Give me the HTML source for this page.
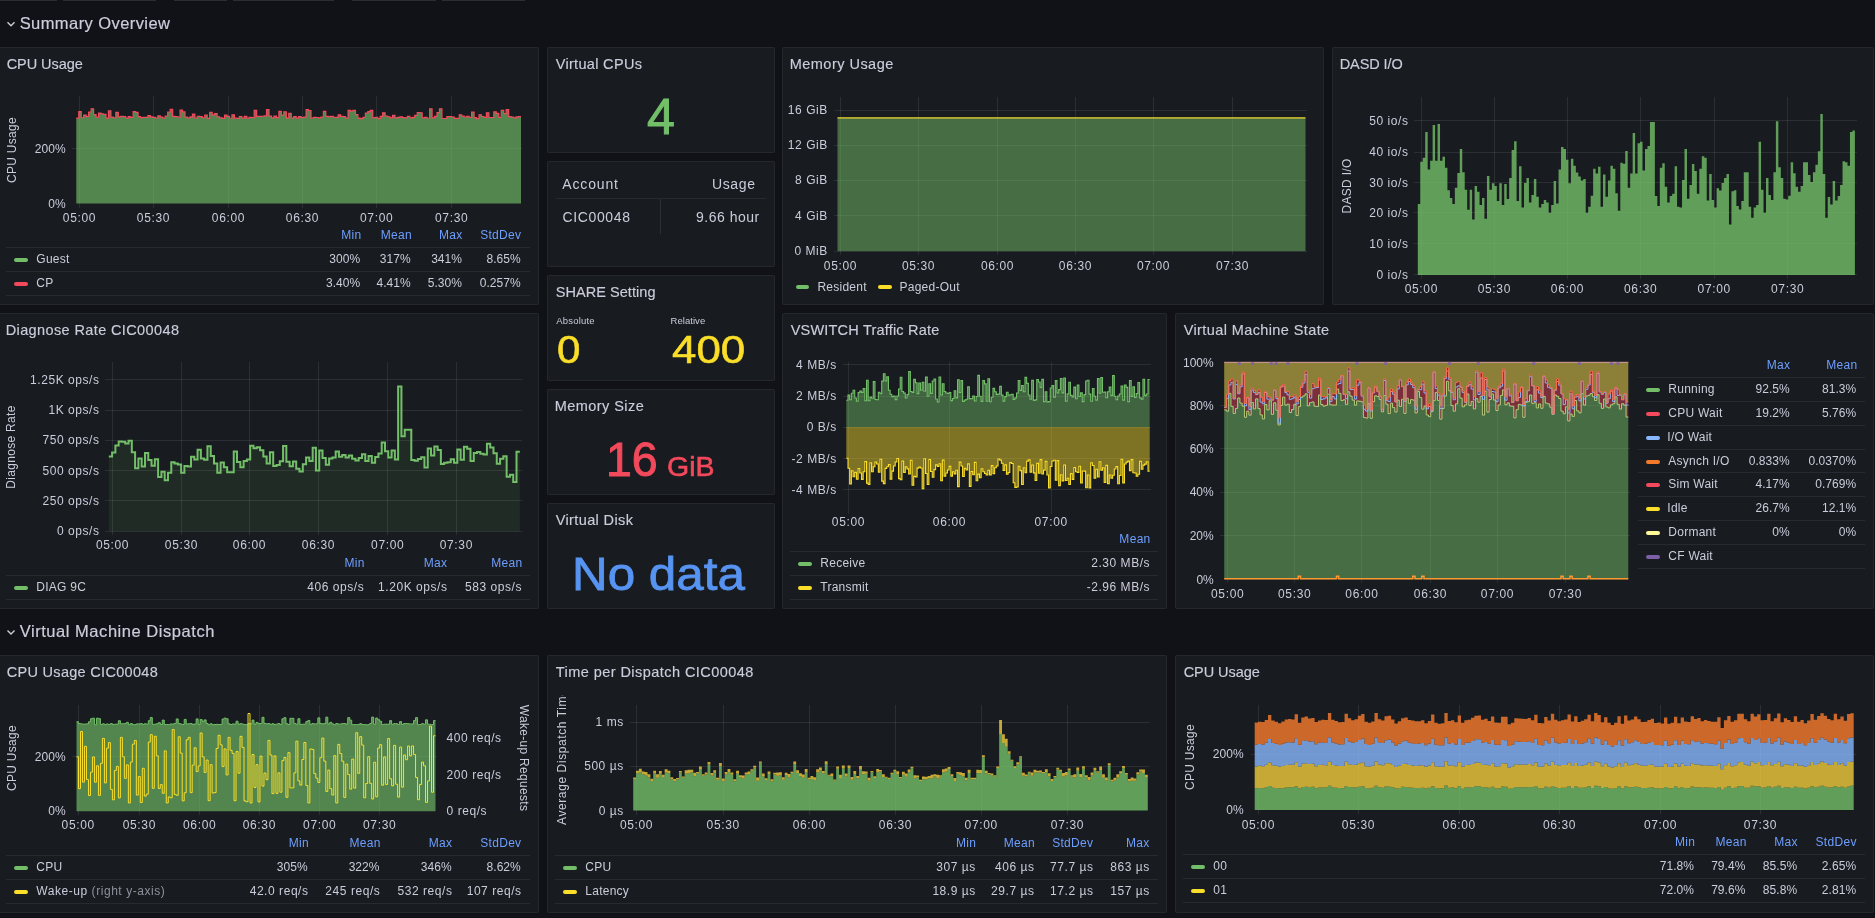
<!DOCTYPE html><html><head><meta charset="utf-8"><style>
*{margin:0;padding:0;box-sizing:border-box}
html,body{width:1875px;height:918px;overflow:hidden;background:#111217;font-family:"Liberation Sans",sans-serif}
.p{position:absolute;background:#181b1f;border:1px solid rgba(204,204,220,0.07);border-radius:2px}
#tx{position:absolute;left:0;top:0;width:1875px;height:918px;will-change:transform}
.t{position:absolute;white-space:nowrap}
.mk{position:absolute;height:4px;border-radius:2px}
.hl{position:absolute;height:1px}
svg{position:absolute;left:0;top:0}
</style></head><body><div class="p" style="left:-2px;top:47px;width:541px;height:258px"></div><div class="p" style="left:782px;top:47px;width:542px;height:258px"></div><div class="p" style="left:1332px;top:47px;width:542px;height:258px"></div><div class="p" style="left:547px;top:47px;width:228px;height:106px"></div><div class="p" style="left:547px;top:161px;width:228px;height:106px"></div><div class="p" style="left:547px;top:275px;width:228px;height:106px"></div><div class="p" style="left:547px;top:389px;width:228px;height:106px"></div><div class="p" style="left:547px;top:503px;width:228px;height:106px"></div><div class="p" style="left:-2px;top:313px;width:541px;height:296px"></div><div class="p" style="left:782px;top:313px;width:385px;height:296px"></div><div class="p" style="left:1175px;top:313px;width:699px;height:296px"></div><div class="p" style="left:-2px;top:655px;width:541px;height:258px"></div><div class="p" style="left:547px;top:655px;width:620px;height:258px"></div><div class="p" style="left:1175px;top:655px;width:699px;height:258px"></div><svg width="1875" height="918" viewBox="0 0 1875 918"><path d="M7.5,22.3 L11,25.8 L14.5,22.3" fill="none" stroke="#ccccdc" stroke-width="1.4"/><path d="M7.5,630.5 L11,634 L14.5,630.5" fill="none" stroke="#ccccdc" stroke-width="1.4"/><rect x="79" y="96" width="1" height="112" fill="rgba(240,250,255,0.09)"/><rect x="153" y="96" width="1" height="112" fill="rgba(240,250,255,0.09)"/><rect x="228" y="96" width="1" height="112" fill="rgba(240,250,255,0.09)"/><rect x="302" y="96" width="1" height="112" fill="rgba(240,250,255,0.09)"/><rect x="376" y="96" width="1" height="112" fill="rgba(240,250,255,0.09)"/><rect x="451" y="96" width="1" height="112" fill="rgba(240,250,255,0.09)"/><rect x="72" y="148" width="450" height="1" fill="rgba(240,250,255,0.09)"/><path d="M76.30,118.04 L78.77,118.04 L78.77,111.54 L81.24,111.54 L81.24,117.73 L83.71,117.73 L83.71,115.03 L86.18,115.03 L86.18,116.36 L88.65,116.36 L88.65,111.98 L91.12,111.98 L91.12,108.80 L93.59,108.80 L93.59,114.65 L96.06,114.65 L96.06,117.21 L98.53,117.21 L98.53,113.15 L101.01,113.15 L101.01,113.94 L103.48,113.94 L103.48,114.37 L105.95,114.37 L105.95,118.11 L108.42,118.11 L108.42,110.74 L110.89,110.74 L110.89,117.12 L113.36,117.12 L113.36,117.90 L115.83,117.90 L115.83,112.37 L118.30,112.37 L118.30,116.80 L120.77,116.80 L120.77,116.32 L123.24,116.32 L123.24,116.67 L125.71,116.67 L125.71,118.11 L128.18,118.11 L128.18,116.67 L130.65,116.67 L130.65,117.38 L133.12,117.38 L133.12,111.68 L135.59,111.68 L135.59,112.35 L138.06,112.35 L138.06,116.66 L140.53,116.66 L140.53,117.67 L143.00,117.67 L143.00,117.32 L145.48,117.32 L145.48,117.46 L147.95,117.46 L147.95,115.70 L150.42,115.70 L150.42,116.96 L152.89,116.96 L152.89,117.33 L155.36,117.33 L155.36,118.19 L157.83,118.19 L157.83,115.91 L160.30,115.91 L160.30,117.18 L162.77,117.18 L162.77,118.21 L165.24,118.21 L165.24,116.04 L167.71,116.04 L167.71,112.02 L170.18,112.02 L170.18,109.25 L172.65,109.25 L172.65,116.36 L175.12,116.36 L175.12,116.64 L177.59,116.64 L177.59,117.17 L180.06,117.17 L180.06,110.20 L182.53,110.20 L182.53,111.94 L185.00,111.94 L185.00,117.17 L187.47,117.17 L187.47,117.93 L189.95,117.93 L189.95,116.93 L192.42,116.93 L192.42,114.18 L194.89,114.18 L194.89,118.20 L197.36,118.20 L197.36,116.46 L199.83,116.46 L199.83,116.64 L202.30,116.64 L202.30,117.76 L204.77,117.76 L204.77,115.17 L207.24,115.17 L207.24,118.41 L209.71,118.41 L209.71,112.27 L212.18,112.27 L212.18,114.84 L214.65,114.84 L214.65,113.63 L217.12,113.63 L217.12,116.87 L219.59,116.87 L219.59,117.78 L222.06,117.78 L222.06,118.34 L224.53,118.34 L224.53,115.07 L227.00,115.07 L227.00,116.39 L229.47,116.39 L229.47,118.24 L231.94,118.24 L231.94,114.90 L234.42,114.90 L234.42,118.15 L236.89,118.15 L236.89,118.39 L239.36,118.39 L239.36,116.72 L241.83,116.72 L241.83,118.19 L244.30,118.19 L244.30,116.42 L246.77,116.42 L246.77,118.16 L249.24,118.16 L249.24,117.39 L251.71,117.39 L251.71,117.71 L254.18,117.71 L254.18,110.39 L256.65,110.39 L256.65,116.43 L259.12,116.43 L259.12,116.40 L261.59,116.40 L261.59,116.23 L264.06,116.23 L264.06,115.97 L266.53,115.97 L266.53,109.49 L269.00,109.49 L269.00,116.22 L271.47,116.22 L271.47,117.96 L273.94,117.96 L273.94,116.13 L276.41,116.13 L276.41,117.57 L278.89,117.57 L278.89,111.45 L281.36,111.45 L281.36,115.07 L283.83,115.07 L283.83,111.77 L286.30,111.77 L286.30,117.97 L288.77,117.97 L288.77,113.26 L291.24,113.26 L291.24,118.03 L293.71,118.03 L293.71,116.59 L296.18,116.59 L296.18,118.21 L298.65,118.21 L298.65,116.68 L301.12,116.68 L301.12,117.56 L303.59,117.56 L303.59,117.11 L306.06,117.11 L306.06,109.68 L308.53,109.68 L308.53,110.52 L311.00,110.52 L311.00,118.22 L313.47,118.22 L313.47,117.28 L315.94,117.28 L315.94,117.50 L318.41,117.50 L318.41,117.93 L320.88,117.93 L320.88,117.00 L323.36,117.00 L323.36,111.34 L325.83,111.34 L325.83,116.29 L328.30,116.29 L328.30,116.63 L330.77,116.63 L330.77,116.47 L333.24,116.47 L333.24,117.31 L335.71,117.31 L335.71,117.44 L338.18,117.44 L338.18,114.88 L340.65,114.88 L340.65,116.28 L343.12,116.28 L343.12,116.57 L345.59,116.57 L345.59,118.06 L348.06,118.06 L348.06,110.29 L350.53,110.29 L350.53,111.04 L353.00,111.04 L353.00,110.47 L355.47,110.47 L355.47,114.70 L357.94,114.70 L357.94,118.08 L360.41,118.08 L360.41,118.60 L362.88,118.60 L362.88,117.42 L365.36,117.42 L365.36,113.20 L367.83,113.20 L367.83,111.69 L370.30,111.69 L370.30,110.42 L372.77,110.42 L372.77,117.82 L375.24,117.82 L375.24,117.37 L377.71,117.37 L377.71,118.66 L380.18,118.66 L380.18,116.29 L382.65,116.29 L382.65,112.83 L385.12,112.83 L385.12,116.21 L387.59,116.21 L387.59,116.77 L390.06,116.77 L390.06,117.85 L392.53,117.85 L392.53,115.44 L395.00,115.44 L395.00,117.78 L397.47,117.78 L397.47,117.31 L399.94,117.31 L399.94,116.91 L402.41,116.91 L402.41,117.66 L404.88,117.66 L404.88,117.95 L407.35,117.95 L407.35,116.43 L409.82,116.43 L409.82,117.96 L412.30,117.96 L412.30,117.47 L414.77,117.47 L414.77,115.37 L417.24,115.37 L417.24,112.50 L419.71,112.50 L419.71,112.76 L422.18,112.76 L422.18,117.85 L424.65,117.85 L424.65,117.45 L427.12,117.45 L427.12,118.23 L429.59,118.23 L429.59,108.87 L432.06,108.87 L432.06,117.95 L434.53,117.95 L434.53,116.29 L437.00,116.29 L437.00,112.69 L439.47,112.69 L439.47,108.78 L441.94,108.78 L441.94,118.52 L444.41,118.52 L444.41,118.51 L446.88,118.51 L446.88,116.56 L449.35,116.56 L449.35,116.59 L451.82,116.59 L451.82,117.01 L454.29,117.01 L454.29,118.35 L456.77,118.35 L456.77,118.44 L459.24,118.44 L459.24,114.80 L461.71,114.80 L461.71,116.22 L464.18,116.22 L464.18,117.00 L466.65,117.00 L466.65,116.27 L469.12,116.27 L469.12,117.37 L471.59,117.37 L471.59,112.17 L474.06,112.17 L474.06,117.61 L476.53,117.61 L476.53,118.59 L479.00,118.59 L479.00,114.85 L481.47,114.85 L481.47,116.49 L483.94,116.49 L483.94,117.46 L486.41,117.46 L486.41,112.76 L488.88,112.76 L488.88,117.50 L491.35,117.50 L491.35,117.57 L493.82,117.57 L493.82,111.84 L496.29,111.84 L496.29,113.29 L498.76,113.29 L498.76,117.47 L501.24,117.47 L501.24,110.43 L503.71,110.43 L503.71,113.65 L506.18,113.65 L506.18,109.57 L508.65,109.57 L508.65,116.56 L511.12,116.56 L511.12,117.10 L513.59,117.10 L513.59,117.86 L516.06,117.86 L516.06,116.93 L518.53,116.93 L518.53,116.64 L521.00,116.64 L521.00,203.60 L76.30,203.60 Z" fill="#73BF69" fill-opacity="0.65"/><path d="M76.30,118.04 L78.77,118.04 L78.77,111.54 L81.24,111.54 L81.24,117.73 L83.71,117.73 L83.71,115.03 L86.18,115.03 L86.18,116.36 L88.65,116.36 L88.65,111.98 L91.12,111.98 L91.12,108.80 L93.59,108.80 L93.59,114.65 L96.06,114.65 L96.06,117.21 L98.53,117.21 L98.53,113.15 L101.01,113.15 L101.01,113.94 L103.48,113.94 L103.48,114.37 L105.95,114.37 L105.95,118.11 L108.42,118.11 L108.42,110.74 L110.89,110.74 L110.89,117.12 L113.36,117.12 L113.36,117.90 L115.83,117.90 L115.83,112.37 L118.30,112.37 L118.30,116.80 L120.77,116.80 L120.77,116.32 L123.24,116.32 L123.24,116.67 L125.71,116.67 L125.71,118.11 L128.18,118.11 L128.18,116.67 L130.65,116.67 L130.65,117.38 L133.12,117.38 L133.12,111.68 L135.59,111.68 L135.59,112.35 L138.06,112.35 L138.06,116.66 L140.53,116.66 L140.53,117.67 L143.00,117.67 L143.00,117.32 L145.48,117.32 L145.48,117.46 L147.95,117.46 L147.95,115.70 L150.42,115.70 L150.42,116.96 L152.89,116.96 L152.89,117.33 L155.36,117.33 L155.36,118.19 L157.83,118.19 L157.83,115.91 L160.30,115.91 L160.30,117.18 L162.77,117.18 L162.77,118.21 L165.24,118.21 L165.24,116.04 L167.71,116.04 L167.71,112.02 L170.18,112.02 L170.18,109.25 L172.65,109.25 L172.65,116.36 L175.12,116.36 L175.12,116.64 L177.59,116.64 L177.59,117.17 L180.06,117.17 L180.06,110.20 L182.53,110.20 L182.53,111.94 L185.00,111.94 L185.00,117.17 L187.47,117.17 L187.47,117.93 L189.95,117.93 L189.95,116.93 L192.42,116.93 L192.42,114.18 L194.89,114.18 L194.89,118.20 L197.36,118.20 L197.36,116.46 L199.83,116.46 L199.83,116.64 L202.30,116.64 L202.30,117.76 L204.77,117.76 L204.77,115.17 L207.24,115.17 L207.24,118.41 L209.71,118.41 L209.71,112.27 L212.18,112.27 L212.18,114.84 L214.65,114.84 L214.65,113.63 L217.12,113.63 L217.12,116.87 L219.59,116.87 L219.59,117.78 L222.06,117.78 L222.06,118.34 L224.53,118.34 L224.53,115.07 L227.00,115.07 L227.00,116.39 L229.47,116.39 L229.47,118.24 L231.94,118.24 L231.94,114.90 L234.42,114.90 L234.42,118.15 L236.89,118.15 L236.89,118.39 L239.36,118.39 L239.36,116.72 L241.83,116.72 L241.83,118.19 L244.30,118.19 L244.30,116.42 L246.77,116.42 L246.77,118.16 L249.24,118.16 L249.24,117.39 L251.71,117.39 L251.71,117.71 L254.18,117.71 L254.18,110.39 L256.65,110.39 L256.65,116.43 L259.12,116.43 L259.12,116.40 L261.59,116.40 L261.59,116.23 L264.06,116.23 L264.06,115.97 L266.53,115.97 L266.53,109.49 L269.00,109.49 L269.00,116.22 L271.47,116.22 L271.47,117.96 L273.94,117.96 L273.94,116.13 L276.41,116.13 L276.41,117.57 L278.89,117.57 L278.89,111.45 L281.36,111.45 L281.36,115.07 L283.83,115.07 L283.83,111.77 L286.30,111.77 L286.30,117.97 L288.77,117.97 L288.77,113.26 L291.24,113.26 L291.24,118.03 L293.71,118.03 L293.71,116.59 L296.18,116.59 L296.18,118.21 L298.65,118.21 L298.65,116.68 L301.12,116.68 L301.12,117.56 L303.59,117.56 L303.59,117.11 L306.06,117.11 L306.06,109.68 L308.53,109.68 L308.53,110.52 L311.00,110.52 L311.00,118.22 L313.47,118.22 L313.47,117.28 L315.94,117.28 L315.94,117.50 L318.41,117.50 L318.41,117.93 L320.88,117.93 L320.88,117.00 L323.36,117.00 L323.36,111.34 L325.83,111.34 L325.83,116.29 L328.30,116.29 L328.30,116.63 L330.77,116.63 L330.77,116.47 L333.24,116.47 L333.24,117.31 L335.71,117.31 L335.71,117.44 L338.18,117.44 L338.18,114.88 L340.65,114.88 L340.65,116.28 L343.12,116.28 L343.12,116.57 L345.59,116.57 L345.59,118.06 L348.06,118.06 L348.06,110.29 L350.53,110.29 L350.53,111.04 L353.00,111.04 L353.00,110.47 L355.47,110.47 L355.47,114.70 L357.94,114.70 L357.94,118.08 L360.41,118.08 L360.41,118.60 L362.88,118.60 L362.88,117.42 L365.36,117.42 L365.36,113.20 L367.83,113.20 L367.83,111.69 L370.30,111.69 L370.30,110.42 L372.77,110.42 L372.77,117.82 L375.24,117.82 L375.24,117.37 L377.71,117.37 L377.71,118.66 L380.18,118.66 L380.18,116.29 L382.65,116.29 L382.65,112.83 L385.12,112.83 L385.12,116.21 L387.59,116.21 L387.59,116.77 L390.06,116.77 L390.06,117.85 L392.53,117.85 L392.53,115.44 L395.00,115.44 L395.00,117.78 L397.47,117.78 L397.47,117.31 L399.94,117.31 L399.94,116.91 L402.41,116.91 L402.41,117.66 L404.88,117.66 L404.88,117.95 L407.35,117.95 L407.35,116.43 L409.82,116.43 L409.82,117.96 L412.30,117.96 L412.30,117.47 L414.77,117.47 L414.77,115.37 L417.24,115.37 L417.24,112.50 L419.71,112.50 L419.71,112.76 L422.18,112.76 L422.18,117.85 L424.65,117.85 L424.65,117.45 L427.12,117.45 L427.12,118.23 L429.59,118.23 L429.59,108.87 L432.06,108.87 L432.06,117.95 L434.53,117.95 L434.53,116.29 L437.00,116.29 L437.00,112.69 L439.47,112.69 L439.47,108.78 L441.94,108.78 L441.94,118.52 L444.41,118.52 L444.41,118.51 L446.88,118.51 L446.88,116.56 L449.35,116.56 L449.35,116.59 L451.82,116.59 L451.82,117.01 L454.29,117.01 L454.29,118.35 L456.77,118.35 L456.77,118.44 L459.24,118.44 L459.24,114.80 L461.71,114.80 L461.71,116.22 L464.18,116.22 L464.18,117.00 L466.65,117.00 L466.65,116.27 L469.12,116.27 L469.12,117.37 L471.59,117.37 L471.59,112.17 L474.06,112.17 L474.06,117.61 L476.53,117.61 L476.53,118.59 L479.00,118.59 L479.00,114.85 L481.47,114.85 L481.47,116.49 L483.94,116.49 L483.94,117.46 L486.41,117.46 L486.41,112.76 L488.88,112.76 L488.88,117.50 L491.35,117.50 L491.35,117.57 L493.82,117.57 L493.82,111.84 L496.29,111.84 L496.29,113.29 L498.76,113.29 L498.76,117.47 L501.24,117.47 L501.24,110.43 L503.71,110.43 L503.71,113.65 L506.18,113.65 L506.18,109.57 L508.65,109.57 L508.65,116.56 L511.12,116.56 L511.12,117.10 L513.59,117.10 L513.59,117.86 L516.06,117.86 L516.06,116.93 L518.53,116.93 L518.53,116.64 L521.00,116.64" fill="none" stroke="#F2495C" stroke-width="1.2" stroke-linejoin="miter"/><rect x="840" y="97" width="1" height="158" fill="rgba(240,250,255,0.09)"/><rect x="918" y="97" width="1" height="158" fill="rgba(240,250,255,0.09)"/><rect x="997" y="97" width="1" height="158" fill="rgba(240,250,255,0.09)"/><rect x="1075" y="97" width="1" height="158" fill="rgba(240,250,255,0.09)"/><rect x="1153" y="97" width="1" height="158" fill="rgba(240,250,255,0.09)"/><rect x="1232" y="97" width="1" height="158" fill="rgba(240,250,255,0.09)"/><rect x="834" y="110" width="473" height="1" fill="rgba(240,250,255,0.09)"/><rect x="834" y="145" width="473" height="1" fill="rgba(240,250,255,0.09)"/><rect x="834" y="180" width="473" height="1" fill="rgba(240,250,255,0.09)"/><rect x="834" y="215" width="473" height="1" fill="rgba(240,250,255,0.09)"/><rect x="834" y="251" width="473" height="1" fill="rgba(240,250,255,0.09)"/><rect x="837.5" y="117.8" width="468.0" height="133.3" fill="#73BF69" fill-opacity="0.5"/><rect x="837.5" y="117.3" width="468.0" height="1.2" fill="#FADE2A"/><rect x="1421" y="97" width="1" height="182" fill="rgba(240,250,255,0.09)"/><rect x="1494" y="97" width="1" height="182" fill="rgba(240,250,255,0.09)"/><rect x="1567" y="97" width="1" height="182" fill="rgba(240,250,255,0.09)"/><rect x="1640" y="97" width="1" height="182" fill="rgba(240,250,255,0.09)"/><rect x="1714" y="97" width="1" height="182" fill="rgba(240,250,255,0.09)"/><rect x="1787" y="97" width="1" height="182" fill="rgba(240,250,255,0.09)"/><rect x="1414" y="120" width="443" height="1" fill="rgba(240,250,255,0.09)"/><rect x="1414" y="152" width="443" height="1" fill="rgba(240,250,255,0.09)"/><rect x="1414" y="182" width="443" height="1" fill="rgba(240,250,255,0.09)"/><rect x="1414" y="212" width="443" height="1" fill="rgba(240,250,255,0.09)"/><rect x="1414" y="243" width="443" height="1" fill="rgba(240,250,255,0.09)"/><rect x="1414" y="274" width="443" height="1" fill="rgba(240,250,255,0.09)"/><path d="M1417.80,203.92 L1420.27,203.92 L1420.27,161.76 L1422.74,161.76 L1422.74,157.84 L1425.21,157.84 L1425.21,131.96 L1427.68,131.96 L1427.68,169.61 L1430.15,169.61 L1430.15,160.78 L1432.62,160.78 L1432.62,124.90 L1435.09,124.90 L1435.09,160.78 L1437.56,160.78 L1437.56,123.92 L1440.03,123.92 L1440.03,160.78 L1442.49,160.78 L1442.49,156.86 L1444.96,156.86 L1444.96,167.65 L1447.43,167.65 L1447.43,190.20 L1449.90,190.20 L1449.90,198.04 L1452.37,198.04 L1452.37,203.92 L1454.84,203.92 L1454.84,187.84 L1457.31,187.84 L1457.31,172.94 L1459.78,172.94 L1459.78,149.02 L1462.25,149.02 L1462.25,172.16 L1464.72,172.16 L1464.72,189.80 L1467.19,189.80 L1467.19,209.80 L1469.66,209.80 L1469.66,189.80 L1472.13,189.80 L1472.13,219.61 L1474.60,219.61 L1474.60,185.88 L1477.07,185.88 L1477.07,191.76 L1479.54,191.76 L1479.54,204.90 L1482.01,204.90 L1482.01,198.04 L1484.48,198.04 L1484.48,218.63 L1486.95,218.63 L1486.95,176.08 L1489.42,176.08 L1489.42,189.80 L1491.88,189.80 L1491.88,183.33 L1494.35,183.33 L1494.35,185.88 L1496.82,185.88 L1496.82,200.98 L1499.29,200.98 L1499.29,183.33 L1501.76,183.33 L1501.76,204.90 L1504.23,204.90 L1504.23,183.92 L1506.70,183.92 L1506.70,199.02 L1509.17,199.02 L1509.17,178.04 L1511.64,178.04 L1511.64,150.00 L1514.11,150.00 L1514.11,141.18 L1516.58,141.18 L1516.58,200.98 L1519.05,200.98 L1519.05,166.27 L1521.52,166.27 L1521.52,207.45 L1523.99,207.45 L1523.99,182.94 L1526.46,182.94 L1526.46,178.04 L1528.93,178.04 L1528.93,202.55 L1531.40,202.55 L1531.40,195.10 L1533.87,195.10 L1533.87,179.02 L1536.34,179.02 L1536.34,196.67 L1538.81,196.67 L1538.81,207.45 L1541.27,207.45 L1541.27,203.92 L1543.74,203.92 L1543.74,200.00 L1546.21,200.00 L1546.21,202.55 L1548.68,202.55 L1548.68,212.75 L1551.15,212.75 L1551.15,204.90 L1553.62,204.90 L1553.62,180.98 L1556.09,180.98 L1556.09,203.53 L1558.56,203.53 L1558.56,169.61 L1561.03,169.61 L1561.03,147.06 L1563.50,147.06 L1563.50,149.02 L1565.97,149.02 L1565.97,159.80 L1568.44,159.80 L1568.44,183.33 L1570.91,183.33 L1570.91,158.82 L1573.38,158.82 L1573.38,165.69 L1575.85,165.69 L1575.85,172.55 L1578.32,172.55 L1578.32,176.47 L1580.79,176.47 L1580.79,180.39 L1583.26,180.39 L1583.26,179.02 L1585.73,179.02 L1585.73,212.75 L1588.19,212.75 L1588.19,206.86 L1590.66,206.86 L1590.66,195.69 L1593.13,195.69 L1593.13,168.63 L1595.60,168.63 L1595.60,173.53 L1598.07,173.53 L1598.07,166.67 L1600.54,166.67 L1600.54,206.86 L1603.01,206.86 L1603.01,174.51 L1605.48,174.51 L1605.48,196.67 L1607.95,196.67 L1607.95,180.39 L1610.42,180.39 L1610.42,165.69 L1612.89,165.69 L1612.89,168.63 L1615.36,168.63 L1615.36,193.14 L1617.83,193.14 L1617.83,210.78 L1620.30,210.78 L1620.30,162.75 L1622.77,162.75 L1622.77,163.73 L1625.24,163.73 L1625.24,150.98 L1627.71,150.98 L1627.71,187.84 L1630.18,187.84 L1630.18,173.53 L1632.65,173.53 L1632.65,132.94 L1635.12,132.94 L1635.12,173.53 L1637.58,173.53 L1637.58,143.14 L1640.05,143.14 L1640.05,141.76 L1642.52,141.76 L1642.52,170.59 L1644.99,170.59 L1644.99,149.02 L1647.46,149.02 L1647.46,146.08 L1649.93,146.08 L1649.93,121.96 L1652.40,121.96 L1652.40,121.96 L1654.87,121.96 L1654.87,196.08 L1657.34,196.08 L1657.34,205.88 L1659.81,205.88 L1659.81,167.65 L1662.28,167.65 L1662.28,163.14 L1664.75,163.14 L1664.75,186.86 L1667.22,186.86 L1667.22,202.55 L1669.69,202.55 L1669.69,196.08 L1672.16,196.08 L1672.16,193.73 L1674.63,193.73 L1674.63,166.27 L1677.10,166.27 L1677.10,206.86 L1679.57,206.86 L1679.57,207.45 L1682.04,207.45 L1682.04,180.00 L1684.51,180.00 L1684.51,149.02 L1686.97,149.02 L1686.97,198.63 L1689.44,198.63 L1689.44,184.90 L1691.91,184.90 L1691.91,164.12 L1694.38,164.12 L1694.38,170.98 L1696.85,170.98 L1696.85,193.73 L1699.32,193.73 L1699.32,168.63 L1701.79,168.63 L1701.79,156.27 L1704.26,156.27 L1704.26,157.84 L1706.73,157.84 L1706.73,200.59 L1709.20,200.59 L1709.20,174.12 L1711.67,174.12 L1711.67,200.00 L1714.14,200.00 L1714.14,207.45 L1716.61,207.45 L1716.61,188.24 L1719.08,188.24 L1719.08,190.59 L1721.55,190.59 L1721.55,182.94 L1724.02,182.94 L1724.02,178.04 L1726.49,178.04 L1726.49,174.12 L1728.96,174.12 L1728.96,224.51 L1731.43,224.51 L1731.43,191.18 L1733.89,191.18 L1733.89,190.20 L1736.36,190.20 L1736.36,205.88 L1738.83,205.88 L1738.83,209.41 L1741.30,209.41 L1741.30,200.98 L1743.77,200.98 L1743.77,172.16 L1746.24,172.16 L1746.24,172.16 L1748.71,172.16 L1748.71,206.86 L1751.18,206.86 L1751.18,217.65 L1753.65,217.65 L1753.65,207.45 L1756.12,207.45 L1756.12,204.90 L1758.59,204.90 L1758.59,141.76 L1761.06,141.76 L1761.06,189.80 L1763.53,189.80 L1763.53,212.75 L1766.00,212.75 L1766.00,178.04 L1768.47,178.04 L1768.47,195.10 L1770.94,195.10 L1770.94,200.00 L1773.41,200.00 L1773.41,172.16 L1775.88,172.16 L1775.88,121.18 L1778.35,121.18 L1778.35,167.25 L1780.82,167.25 L1780.82,178.04 L1783.28,178.04 L1783.28,198.63 L1785.75,198.63 L1785.75,199.61 L1788.22,199.61 L1788.22,195.69 L1790.69,195.69 L1790.69,162.35 L1793.16,162.35 L1793.16,173.14 L1795.63,173.14 L1795.63,186.86 L1798.10,186.86 L1798.10,191.76 L1800.57,191.76 L1800.57,185.88 L1803.04,185.88 L1803.04,162.35 L1805.51,162.35 L1805.51,162.35 L1807.98,162.35 L1807.98,175.10 L1810.45,175.10 L1810.45,181.96 L1812.92,181.96 L1812.92,172.16 L1815.39,172.16 L1815.39,164.71 L1817.86,164.71 L1817.86,151.37 L1820.33,151.37 L1820.33,114.12 L1822.80,114.12 L1822.80,174.12 L1825.27,174.12 L1825.27,217.65 L1827.74,217.65 L1827.74,197.06 L1830.21,197.06 L1830.21,204.51 L1832.67,204.51 L1832.67,180.98 L1835.14,180.98 L1835.14,200.59 L1837.61,200.59 L1837.61,196.08 L1840.08,196.08 L1840.08,184.90 L1842.55,184.90 L1842.55,161.37 L1845.02,161.37 L1845.02,162.35 L1847.49,162.35 L1847.49,165.69 L1849.96,165.69 L1849.96,131.96 L1852.43,131.96 L1852.43,130.39 L1854.90,130.39 L1854.90,274.90 L1417.80,274.90 Z" fill="#73BF69" fill-opacity="0.8"/><rect x="112" y="362" width="1" height="173" fill="rgba(240,250,255,0.09)"/><rect x="181" y="362" width="1" height="173" fill="rgba(240,250,255,0.09)"/><rect x="249" y="362" width="1" height="173" fill="rgba(240,250,255,0.09)"/><rect x="318" y="362" width="1" height="173" fill="rgba(240,250,255,0.09)"/><rect x="387" y="362" width="1" height="173" fill="rgba(240,250,255,0.09)"/><rect x="456" y="362" width="1" height="173" fill="rgba(240,250,255,0.09)"/><rect x="105" y="379" width="417" height="1" fill="rgba(240,250,255,0.09)"/><rect x="105" y="410" width="417" height="1" fill="rgba(240,250,255,0.09)"/><rect x="105" y="440" width="417" height="1" fill="rgba(240,250,255,0.09)"/><rect x="105" y="470" width="417" height="1" fill="rgba(240,250,255,0.09)"/><rect x="105" y="500" width="417" height="1" fill="rgba(240,250,255,0.09)"/><rect x="105" y="531" width="417" height="1" fill="rgba(240,250,255,0.09)"/><path d="M108.80,456.44 L112.09,456.44 L112.09,452.59 L115.38,452.59 L115.38,445.48 L118.66,445.48 L118.66,441.55 L121.95,441.55 L121.95,441.64 L125.24,441.64 L125.24,443.62 L128.53,443.62 L128.53,440.73 L131.82,440.73 L131.82,452.25 L135.10,452.25 L135.10,468.17 L138.39,468.17 L138.39,458.60 L141.68,458.60 L141.68,466.61 L144.97,466.61 L144.97,453.03 L148.26,453.03 L148.26,460.00 L151.54,460.00 L151.54,465.68 L154.83,465.68 L154.83,459.23 L158.12,459.23 L158.12,477.12 L161.41,477.12 L161.41,471.63 L164.70,471.63 L164.70,480.21 L167.98,480.21 L167.98,472.68 L171.27,472.68 L171.27,462.35 L174.56,462.35 L174.56,463.57 L177.85,463.57 L177.85,464.44 L181.14,464.44 L181.14,472.64 L184.42,472.64 L184.42,465.93 L187.71,465.93 L187.71,466.48 L191.00,466.48 L191.00,456.81 L194.29,456.81 L194.29,459.56 L197.58,459.56 L197.58,449.77 L200.86,449.77 L200.86,458.42 L204.15,458.42 L204.15,459.72 L207.44,459.72 L207.44,446.13 L210.73,446.13 L210.73,456.03 L214.02,456.03 L214.02,463.51 L217.30,463.51 L217.30,472.83 L220.59,472.83 L220.59,462.39 L223.88,462.39 L223.88,467.18 L227.17,467.18 L227.17,472.22 L230.46,472.22 L230.46,472.36 L233.74,472.36 L233.74,451.59 L237.03,451.59 L237.03,461.94 L240.32,461.94 L240.32,467.14 L243.61,467.14 L243.61,460.88 L246.90,460.88 L246.90,459.44 L250.18,459.44 L250.18,445.82 L253.47,445.82 L253.47,448.14 L256.76,448.14 L256.76,447.31 L260.05,447.31 L260.05,450.37 L263.34,450.37 L263.34,456.54 L266.62,456.54 L266.62,463.40 L269.91,463.40 L269.91,452.19 L273.20,452.19 L273.20,465.99 L276.49,465.99 L276.49,464.94 L279.78,464.94 L279.78,461.20 L283.06,461.20 L283.06,445.93 L286.35,445.93 L286.35,461.81 L289.64,461.81 L289.64,466.25 L292.93,466.25 L292.93,461.50 L296.22,461.50 L296.22,468.69 L299.50,468.69 L299.50,471.40 L302.79,471.40 L302.79,464.22 L306.08,464.22 L306.08,457.43 L309.37,457.43 L309.37,461.11 L312.66,461.11 L312.66,447.80 L315.94,447.80 L315.94,470.58 L319.23,470.58 L319.23,450.52 L322.52,450.52 L322.52,458.01 L325.81,458.01 L325.81,464.74 L329.10,464.74 L329.10,458.40 L332.38,458.40 L332.38,457.47 L335.67,457.47 L335.67,451.39 L338.96,451.39 L338.96,456.80 L342.25,456.80 L342.25,455.12 L345.54,455.12 L345.54,457.62 L348.82,457.62 L348.82,455.42 L352.11,455.42 L352.11,458.83 L355.40,458.83 L355.40,460.41 L358.69,460.41 L358.69,458.02 L361.98,458.02 L361.98,454.22 L365.26,454.22 L365.26,461.05 L368.55,461.05 L368.55,455.92 L371.84,455.92 L371.84,462.72 L375.13,462.72 L375.13,456.93 L378.42,456.93 L378.42,453.51 L381.70,453.51 L381.70,442.58 L384.99,442.58 L384.99,451.35 L388.28,451.35 L388.28,457.55 L391.57,457.55 L391.57,450.58 L394.86,450.58 L394.86,459.42 L398.14,459.42 L398.14,386.40 L401.43,386.40 L401.43,436.30 L404.72,436.30 L404.72,429.70 L408.01,429.70 L408.01,429.70 L411.30,429.70 L411.30,460.00 L414.58,460.00 L414.58,460.75 L417.87,460.75 L417.87,458.88 L421.16,458.88 L421.16,457.21 L424.45,457.21 L424.45,467.41 L427.74,467.41 L427.74,448.51 L431.02,448.51 L431.02,455.59 L434.31,455.59 L434.31,446.53 L437.60,446.53 L437.60,450.06 L440.89,450.06 L440.89,463.93 L444.18,463.93 L444.18,462.87 L447.46,462.87 L447.46,462.17 L450.75,462.17 L450.75,459.34 L454.04,459.34 L454.04,462.79 L457.33,462.79 L457.33,449.57 L460.62,449.57 L460.62,459.66 L463.90,459.66 L463.90,446.87 L467.19,446.87 L467.19,448.73 L470.48,448.73 L470.48,460.95 L473.77,460.95 L473.77,453.03 L477.06,453.03 L477.06,451.96 L480.34,451.96 L480.34,453.74 L483.63,453.74 L483.63,454.42 L486.92,454.42 L486.92,443.80 L490.21,443.80 L490.21,447.40 L493.50,447.40 L493.50,453.28 L496.78,453.28 L496.78,463.84 L500.07,463.84 L500.07,458.66 L503.36,458.66 L503.36,456.34 L506.65,456.34 L506.65,476.85 L509.94,476.85 L509.94,474.69 L513.22,474.69 L513.22,482.00 L516.51,482.00 L516.51,451.80 L519.80,451.80 L519.80,531.20 L108.80,531.20 Z" fill="#73BF69" fill-opacity="0.1"/><path d="M108.80,456.44 L112.09,456.44 L112.09,452.59 L115.38,452.59 L115.38,445.48 L118.66,445.48 L118.66,441.55 L121.95,441.55 L121.95,441.64 L125.24,441.64 L125.24,443.62 L128.53,443.62 L128.53,440.73 L131.82,440.73 L131.82,452.25 L135.10,452.25 L135.10,468.17 L138.39,468.17 L138.39,458.60 L141.68,458.60 L141.68,466.61 L144.97,466.61 L144.97,453.03 L148.26,453.03 L148.26,460.00 L151.54,460.00 L151.54,465.68 L154.83,465.68 L154.83,459.23 L158.12,459.23 L158.12,477.12 L161.41,477.12 L161.41,471.63 L164.70,471.63 L164.70,480.21 L167.98,480.21 L167.98,472.68 L171.27,472.68 L171.27,462.35 L174.56,462.35 L174.56,463.57 L177.85,463.57 L177.85,464.44 L181.14,464.44 L181.14,472.64 L184.42,472.64 L184.42,465.93 L187.71,465.93 L187.71,466.48 L191.00,466.48 L191.00,456.81 L194.29,456.81 L194.29,459.56 L197.58,459.56 L197.58,449.77 L200.86,449.77 L200.86,458.42 L204.15,458.42 L204.15,459.72 L207.44,459.72 L207.44,446.13 L210.73,446.13 L210.73,456.03 L214.02,456.03 L214.02,463.51 L217.30,463.51 L217.30,472.83 L220.59,472.83 L220.59,462.39 L223.88,462.39 L223.88,467.18 L227.17,467.18 L227.17,472.22 L230.46,472.22 L230.46,472.36 L233.74,472.36 L233.74,451.59 L237.03,451.59 L237.03,461.94 L240.32,461.94 L240.32,467.14 L243.61,467.14 L243.61,460.88 L246.90,460.88 L246.90,459.44 L250.18,459.44 L250.18,445.82 L253.47,445.82 L253.47,448.14 L256.76,448.14 L256.76,447.31 L260.05,447.31 L260.05,450.37 L263.34,450.37 L263.34,456.54 L266.62,456.54 L266.62,463.40 L269.91,463.40 L269.91,452.19 L273.20,452.19 L273.20,465.99 L276.49,465.99 L276.49,464.94 L279.78,464.94 L279.78,461.20 L283.06,461.20 L283.06,445.93 L286.35,445.93 L286.35,461.81 L289.64,461.81 L289.64,466.25 L292.93,466.25 L292.93,461.50 L296.22,461.50 L296.22,468.69 L299.50,468.69 L299.50,471.40 L302.79,471.40 L302.79,464.22 L306.08,464.22 L306.08,457.43 L309.37,457.43 L309.37,461.11 L312.66,461.11 L312.66,447.80 L315.94,447.80 L315.94,470.58 L319.23,470.58 L319.23,450.52 L322.52,450.52 L322.52,458.01 L325.81,458.01 L325.81,464.74 L329.10,464.74 L329.10,458.40 L332.38,458.40 L332.38,457.47 L335.67,457.47 L335.67,451.39 L338.96,451.39 L338.96,456.80 L342.25,456.80 L342.25,455.12 L345.54,455.12 L345.54,457.62 L348.82,457.62 L348.82,455.42 L352.11,455.42 L352.11,458.83 L355.40,458.83 L355.40,460.41 L358.69,460.41 L358.69,458.02 L361.98,458.02 L361.98,454.22 L365.26,454.22 L365.26,461.05 L368.55,461.05 L368.55,455.92 L371.84,455.92 L371.84,462.72 L375.13,462.72 L375.13,456.93 L378.42,456.93 L378.42,453.51 L381.70,453.51 L381.70,442.58 L384.99,442.58 L384.99,451.35 L388.28,451.35 L388.28,457.55 L391.57,457.55 L391.57,450.58 L394.86,450.58 L394.86,459.42 L398.14,459.42 L398.14,386.40 L401.43,386.40 L401.43,436.30 L404.72,436.30 L404.72,429.70 L408.01,429.70 L408.01,429.70 L411.30,429.70 L411.30,460.00 L414.58,460.00 L414.58,460.75 L417.87,460.75 L417.87,458.88 L421.16,458.88 L421.16,457.21 L424.45,457.21 L424.45,467.41 L427.74,467.41 L427.74,448.51 L431.02,448.51 L431.02,455.59 L434.31,455.59 L434.31,446.53 L437.60,446.53 L437.60,450.06 L440.89,450.06 L440.89,463.93 L444.18,463.93 L444.18,462.87 L447.46,462.87 L447.46,462.17 L450.75,462.17 L450.75,459.34 L454.04,459.34 L454.04,462.79 L457.33,462.79 L457.33,449.57 L460.62,449.57 L460.62,459.66 L463.90,459.66 L463.90,446.87 L467.19,446.87 L467.19,448.73 L470.48,448.73 L470.48,460.95 L473.77,460.95 L473.77,453.03 L477.06,453.03 L477.06,451.96 L480.34,451.96 L480.34,453.74 L483.63,453.74 L483.63,454.42 L486.92,454.42 L486.92,443.80 L490.21,443.80 L490.21,447.40 L493.50,447.40 L493.50,453.28 L496.78,453.28 L496.78,463.84 L500.07,463.84 L500.07,458.66 L503.36,458.66 L503.36,456.34 L506.65,456.34 L506.65,476.85 L509.94,476.85 L509.94,474.69 L513.22,474.69 L513.22,482.00 L516.51,482.00 L516.51,451.80 L519.80,451.80" fill="none" stroke="#73BF69" stroke-width="2" stroke-linejoin="miter"/><rect x="848" y="362" width="1" height="152" fill="rgba(240,250,255,0.09)"/><rect x="949" y="362" width="1" height="152" fill="rgba(240,250,255,0.09)"/><rect x="1051" y="362" width="1" height="152" fill="rgba(240,250,255,0.09)"/><rect x="843" y="364" width="308" height="1" fill="rgba(240,250,255,0.09)"/><rect x="843" y="396" width="308" height="1" fill="rgba(240,250,255,0.09)"/><rect x="843" y="427" width="308" height="1" fill="rgba(240,250,255,0.09)"/><rect x="843" y="458" width="308" height="1" fill="rgba(240,250,255,0.09)"/><rect x="843" y="489" width="308" height="1" fill="rgba(240,250,255,0.09)"/><path d="M846.30,400.24 L847.99,400.24 L847.99,395.11 L849.67,395.11 L849.67,399.68 L851.36,399.68 L851.36,393.22 L853.04,393.22 L853.04,390.24 L854.73,390.24 L854.73,397.99 L856.41,397.99 L856.41,401.28 L858.10,401.28 L858.10,392.67 L859.78,392.67 L859.78,391.15 L861.47,391.15 L861.47,392.48 L863.16,392.48 L863.16,388.44 L864.84,388.44 L864.84,400.78 L866.53,400.78 L866.53,380.30 L868.21,380.30 L868.21,400.68 L869.90,400.68 L869.90,397.09 L871.58,397.09 L871.58,398.30 L873.27,398.30 L873.27,381.60 L874.95,381.60 L874.95,399.48 L876.64,399.48 L876.64,399.76 L878.33,399.76 L878.33,392.28 L880.01,392.28 L880.01,393.71 L881.70,393.71 L881.70,381.14 L883.38,381.14 L883.38,373.81 L885.07,373.81 L885.07,380.98 L886.75,380.98 L886.75,376.90 L888.44,376.90 L888.44,390.27 L890.12,390.27 L890.12,394.20 L891.81,394.20 L891.81,396.62 L893.50,396.62 L893.50,396.03 L895.18,396.03 L895.18,399.62 L896.87,399.62 L896.87,395.96 L898.55,395.96 L898.55,388.94 L900.24,388.94 L900.24,377.29 L901.92,377.29 L901.92,391.53 L903.61,391.53 L903.61,393.15 L905.29,393.15 L905.29,397.95 L906.98,397.95 L906.98,394.66 L908.67,394.66 L908.67,371.45 L910.35,371.45 L910.35,391.54 L912.04,391.54 L912.04,392.40 L913.72,392.40 L913.72,379.40 L915.41,379.40 L915.41,382.72 L917.09,382.72 L917.09,393.59 L918.78,393.59 L918.78,383.04 L920.46,383.04 L920.46,390.24 L922.15,390.24 L922.15,382.42 L923.84,382.42 L923.84,391.30 L925.52,391.30 L925.52,377.11 L927.21,377.11 L927.21,396.30 L928.89,396.30 L928.89,383.72 L930.58,383.72 L930.58,393.36 L932.26,393.36 L932.26,381.07 L933.95,381.07 L933.95,379.02 L935.63,379.02 L935.63,399.03 L937.32,399.03 L937.32,401.93 L939.01,401.93 L939.01,377.05 L940.69,377.05 L940.69,395.01 L942.38,395.01 L942.38,383.72 L944.06,383.72 L944.06,391.57 L945.75,391.57 L945.75,393.02 L947.43,393.02 L947.43,393.55 L949.12,393.55 L949.12,392.57 L950.80,392.57 L950.80,400.66 L952.49,400.66 L952.49,398.50 L954.18,398.50 L954.18,390.82 L955.86,390.82 L955.86,397.91 L957.55,397.91 L957.55,379.81 L959.23,379.81 L959.23,392.50 L960.92,392.50 L960.92,380.65 L962.60,380.65 L962.60,401.35 L964.29,401.35 L964.29,400.13 L965.97,400.13 L965.97,399.28 L967.66,399.28 L967.66,386.92 L969.35,386.92 L969.35,398.66 L971.03,398.66 L971.03,398.82 L972.72,398.82 L972.72,396.04 L974.40,396.04 L974.40,400.96 L976.09,400.96 L976.09,396.49 L977.77,396.49 L977.77,375.42 L979.46,375.42 L979.46,396.30 L981.14,396.30 L981.14,401.34 L982.83,401.34 L982.83,380.67 L984.52,380.67 L984.52,383.89 L986.20,383.89 L986.20,401.24 L987.89,401.24 L987.89,378.78 L989.57,378.78 L989.57,401.82 L991.26,401.82 L991.26,397.21 L992.94,397.21 L992.94,388.38 L994.63,388.38 L994.63,391.80 L996.31,391.80 L996.31,394.35 L998.00,394.35 L998.00,394.14 L999.69,394.14 L999.69,386.38 L1001.37,386.38 L1001.37,395.14 L1003.06,395.14 L1003.06,401.11 L1004.74,401.11 L1004.74,396.67 L1006.43,396.67 L1006.43,392.32 L1008.11,392.32 L1008.11,395.20 L1009.80,395.20 L1009.80,394.75 L1011.48,394.75 L1011.48,394.41 L1013.17,394.41 L1013.17,399.36 L1014.86,399.36 L1014.86,397.83 L1016.54,397.83 L1016.54,393.03 L1018.23,393.03 L1018.23,380.61 L1019.91,380.61 L1019.91,390.35 L1021.60,390.35 L1021.60,385.51 L1023.28,385.51 L1023.28,391.74 L1024.97,391.74 L1024.97,377.33 L1026.65,377.33 L1026.65,383.41 L1028.34,383.41 L1028.34,395.03 L1030.03,395.03 L1030.03,399.19 L1031.71,399.19 L1031.71,380.41 L1033.40,380.41 L1033.40,400.36 L1035.08,400.36 L1035.08,399.86 L1036.77,399.86 L1036.77,379.56 L1038.45,379.56 L1038.45,382.04 L1040.14,382.04 L1040.14,387.34 L1041.82,387.34 L1041.82,379.34 L1043.51,379.34 L1043.51,401.66 L1045.20,401.66 L1045.20,391.83 L1046.88,391.83 L1046.88,401.83 L1048.57,401.83 L1048.57,401.61 L1050.25,401.61 L1050.25,388.04 L1051.94,388.04 L1051.94,385.52 L1053.62,385.52 L1053.62,397.08 L1055.31,397.08 L1055.31,380.64 L1056.99,380.64 L1056.99,393.06 L1058.68,393.06 L1058.68,389.61 L1060.37,389.61 L1060.37,378.51 L1062.05,378.51 L1062.05,392.83 L1063.74,392.83 L1063.74,377.98 L1065.42,377.98 L1065.42,401.16 L1067.11,401.16 L1067.11,393.88 L1068.79,393.88 L1068.79,382.30 L1070.48,382.30 L1070.48,395.42 L1072.16,395.42 L1072.16,396.90 L1073.85,396.90 L1073.85,387.15 L1075.54,387.15 L1075.54,398.79 L1077.22,398.79 L1077.22,385.13 L1078.91,385.13 L1078.91,396.45 L1080.59,396.45 L1080.59,392.90 L1082.28,392.90 L1082.28,401.63 L1083.96,401.63 L1083.96,394.61 L1085.65,394.61 L1085.65,381.00 L1087.33,381.00 L1087.33,380.22 L1089.02,380.22 L1089.02,394.09 L1090.71,394.09 L1090.71,401.18 L1092.39,401.18 L1092.39,388.52 L1094.08,388.52 L1094.08,396.22 L1095.76,396.22 L1095.76,400.14 L1097.45,400.14 L1097.45,378.46 L1099.13,378.46 L1099.13,393.23 L1100.82,393.23 L1100.82,377.46 L1102.50,377.46 L1102.50,392.18 L1104.19,392.18 L1104.19,392.12 L1105.88,392.12 L1105.88,397.78 L1107.56,397.78 L1107.56,391.81 L1109.25,391.81 L1109.25,387.06 L1110.93,387.06 L1110.93,395.41 L1112.62,395.41 L1112.62,375.67 L1114.30,375.67 L1114.30,396.18 L1115.99,396.18 L1115.99,399.78 L1117.67,399.78 L1117.67,395.98 L1119.36,395.98 L1119.36,393.96 L1121.05,393.96 L1121.05,386.15 L1122.73,386.15 L1122.73,400.09 L1124.42,400.09 L1124.42,385.06 L1126.10,385.06 L1126.10,387.36 L1127.79,387.36 L1127.79,401.75 L1129.47,401.75 L1129.47,380.47 L1131.16,380.47 L1131.16,396.33 L1132.84,396.33 L1132.84,386.82 L1134.53,386.82 L1134.53,397.41 L1136.22,397.41 L1136.22,393.62 L1137.90,393.62 L1137.90,382.65 L1139.59,382.65 L1139.59,397.91 L1141.27,397.91 L1141.27,399.14 L1142.96,399.14 L1142.96,379.24 L1144.64,379.24 L1144.64,395.64 L1146.33,395.64 L1146.33,394.00 L1148.01,394.00 L1148.01,379.43 L1149.70,379.43 L1149.70,427.00 L846.30,427.00 Z" fill="#73BF69" fill-opacity="0.45"/><path d="M846.30,458.26 L847.99,458.26 L847.99,468.18 L849.67,468.18 L849.67,484.04 L851.36,484.04 L851.36,470.80 L853.04,470.80 L853.04,476.77 L854.73,476.77 L854.73,472.38 L856.41,472.38 L856.41,479.22 L858.10,479.22 L858.10,468.47 L859.78,468.47 L859.78,473.05 L861.47,473.05 L861.47,479.41 L863.16,479.41 L863.16,471.81 L864.84,471.81 L864.84,461.61 L866.53,461.61 L866.53,483.09 L868.21,483.09 L868.21,484.39 L869.90,484.39 L869.90,462.74 L871.58,462.74 L871.58,471.78 L873.27,471.78 L873.27,466.74 L874.95,466.74 L874.95,461.94 L876.64,461.94 L876.64,463.95 L878.33,463.95 L878.33,472.30 L880.01,472.30 L880.01,459.19 L881.70,459.19 L881.70,481.15 L883.38,481.15 L883.38,483.59 L885.07,483.59 L885.07,468.40 L886.75,468.40 L886.75,466.79 L888.44,466.79 L888.44,464.62 L890.12,464.62 L890.12,479.13 L891.81,479.13 L891.81,471.16 L893.50,471.16 L893.50,466.04 L895.18,466.04 L895.18,462.04 L896.87,462.04 L896.87,458.54 L898.55,458.54 L898.55,478.65 L900.24,478.65 L900.24,479.80 L901.92,479.80 L901.92,461.03 L903.61,461.03 L903.61,472.40 L905.29,472.40 L905.29,466.92 L906.98,466.92 L906.98,468.91 L908.67,468.91 L908.67,474.07 L910.35,474.07 L910.35,460.18 L912.04,460.18 L912.04,485.14 L913.72,485.14 L913.72,476.33 L915.41,476.33 L915.41,476.95 L917.09,476.95 L917.09,468.10 L918.78,468.10 L918.78,467.13 L920.46,467.13 L920.46,468.07 L922.15,468.07 L922.15,488.68 L923.84,488.68 L923.84,458.79 L925.52,458.79 L925.52,473.50 L927.21,473.50 L927.21,484.50 L928.89,484.50 L928.89,459.57 L930.58,459.57 L930.58,471.52 L932.26,471.52 L932.26,477.27 L933.95,477.27 L933.95,469.59 L935.63,469.59 L935.63,464.88 L937.32,464.88 L937.32,466.34 L939.01,466.34 L939.01,463.77 L940.69,463.77 L940.69,480.74 L942.38,480.74 L942.38,460.12 L944.06,460.12 L944.06,476.12 L945.75,476.12 L945.75,473.05 L947.43,473.05 L947.43,470.05 L949.12,470.05 L949.12,466.33 L950.80,466.33 L950.80,476.08 L952.49,476.08 L952.49,471.70 L954.18,471.70 L954.18,473.87 L955.86,473.87 L955.86,470.22 L957.55,470.22 L957.55,486.63 L959.23,486.63 L959.23,462.16 L960.92,462.16 L960.92,465.93 L962.60,465.93 L962.60,476.57 L964.29,476.57 L964.29,468.40 L965.97,468.40 L965.97,470.07 L967.66,470.07 L967.66,463.84 L969.35,463.84 L969.35,486.38 L971.03,486.38 L971.03,471.45 L972.72,471.45 L972.72,474.75 L974.40,474.75 L974.40,462.42 L976.09,462.42 L976.09,480.72 L977.77,480.72 L977.77,474.15 L979.46,474.15 L979.46,477.80 L981.14,477.80 L981.14,468.71 L982.83,468.71 L982.83,471.75 L984.52,471.75 L984.52,473.53 L986.20,473.53 L986.20,474.99 L987.89,474.99 L987.89,470.24 L989.57,470.24 L989.57,474.83 L991.26,474.83 L991.26,465.59 L992.94,465.59 L992.94,473.72 L994.63,473.72 L994.63,467.80 L996.31,467.80 L996.31,466.00 L998.00,466.00 L998.00,459.03 L999.69,459.03 L999.69,460.11 L1001.37,460.11 L1001.37,463.28 L1003.06,463.28 L1003.06,470.42 L1004.74,470.42 L1004.74,464.92 L1006.43,464.92 L1006.43,474.09 L1008.11,474.09 L1008.11,472.53 L1009.80,472.53 L1009.80,462.61 L1011.48,462.61 L1011.48,463.56 L1013.17,463.56 L1013.17,482.73 L1014.86,482.73 L1014.86,487.41 L1016.54,487.41 L1016.54,487.04 L1018.23,487.04 L1018.23,466.32 L1019.91,466.32 L1019.91,470.65 L1021.60,470.65 L1021.60,484.48 L1023.28,484.48 L1023.28,467.71 L1024.97,467.71 L1024.97,472.73 L1026.65,472.73 L1026.65,461.10 L1028.34,461.10 L1028.34,459.87 L1030.03,459.87 L1030.03,472.10 L1031.71,472.10 L1031.71,465.00 L1033.40,465.00 L1033.40,472.87 L1035.08,472.87 L1035.08,480.46 L1036.77,480.46 L1036.77,463.42 L1038.45,463.42 L1038.45,473.21 L1040.14,473.21 L1040.14,459.64 L1041.82,459.64 L1041.82,473.96 L1043.51,473.96 L1043.51,470.09 L1045.20,470.09 L1045.20,461.41 L1046.88,461.41 L1046.88,475.05 L1048.57,475.05 L1048.57,487.89 L1050.25,487.89 L1050.25,466.55 L1051.94,466.55 L1051.94,461.06 L1053.62,461.06 L1053.62,460.27 L1055.31,460.27 L1055.31,480.22 L1056.99,480.22 L1056.99,460.63 L1058.68,460.63 L1058.68,485.63 L1060.37,485.63 L1060.37,474.76 L1062.05,474.76 L1062.05,480.91 L1063.74,480.91 L1063.74,465.04 L1065.42,465.04 L1065.42,480.56 L1067.11,480.56 L1067.11,478.30 L1068.79,478.30 L1068.79,484.57 L1070.48,484.57 L1070.48,473.67 L1072.16,473.67 L1072.16,479.48 L1073.85,479.48 L1073.85,467.52 L1075.54,467.52 L1075.54,471.74 L1077.22,471.74 L1077.22,472.56 L1078.91,472.56 L1078.91,466.32 L1080.59,466.32 L1080.59,482.94 L1082.28,482.94 L1082.28,470.99 L1083.96,470.99 L1083.96,471.11 L1085.65,471.11 L1085.65,487.70 L1087.33,487.70 L1087.33,474.96 L1089.02,474.96 L1089.02,487.87 L1090.71,487.87 L1090.71,462.75 L1092.39,462.75 L1092.39,465.47 L1094.08,465.47 L1094.08,478.16 L1095.76,478.16 L1095.76,469.24 L1097.45,469.24 L1097.45,477.00 L1099.13,477.00 L1099.13,461.69 L1100.82,461.69 L1100.82,470.15 L1102.50,470.15 L1102.50,467.71 L1104.19,467.71 L1104.19,482.55 L1105.88,482.55 L1105.88,465.40 L1107.56,465.40 L1107.56,483.58 L1109.25,483.58 L1109.25,475.03 L1110.93,475.03 L1110.93,478.23 L1112.62,478.23 L1112.62,475.23 L1114.30,475.23 L1114.30,469.00 L1115.99,469.00 L1115.99,466.64 L1117.67,466.64 L1117.67,483.73 L1119.36,483.73 L1119.36,475.53 L1121.05,475.53 L1121.05,459.18 L1122.73,459.18 L1122.73,482.89 L1124.42,482.89 L1124.42,463.94 L1126.10,463.94 L1126.10,462.09 L1127.79,462.09 L1127.79,461.16 L1129.47,461.16 L1129.47,470.58 L1131.16,470.58 L1131.16,459.65 L1132.84,459.65 L1132.84,472.75 L1134.53,472.75 L1134.53,472.95 L1136.22,472.95 L1136.22,476.30 L1137.90,476.30 L1137.90,474.21 L1139.59,474.21 L1139.59,461.40 L1141.27,461.40 L1141.27,469.25 L1142.96,469.25 L1142.96,465.13 L1144.64,465.13 L1144.64,464.08 L1146.33,464.08 L1146.33,461.71 L1148.01,461.71 L1148.01,471.20 L1149.70,471.20 L1149.70,427.00 L846.30,427.00 Z" fill="#FADE2A" fill-opacity="0.45"/><path d="M846.30,400.24 L847.99,400.24 L847.99,395.11 L849.67,395.11 L849.67,399.68 L851.36,399.68 L851.36,393.22 L853.04,393.22 L853.04,390.24 L854.73,390.24 L854.73,397.99 L856.41,397.99 L856.41,401.28 L858.10,401.28 L858.10,392.67 L859.78,392.67 L859.78,391.15 L861.47,391.15 L861.47,392.48 L863.16,392.48 L863.16,388.44 L864.84,388.44 L864.84,400.78 L866.53,400.78 L866.53,380.30 L868.21,380.30 L868.21,400.68 L869.90,400.68 L869.90,397.09 L871.58,397.09 L871.58,398.30 L873.27,398.30 L873.27,381.60 L874.95,381.60 L874.95,399.48 L876.64,399.48 L876.64,399.76 L878.33,399.76 L878.33,392.28 L880.01,392.28 L880.01,393.71 L881.70,393.71 L881.70,381.14 L883.38,381.14 L883.38,373.81 L885.07,373.81 L885.07,380.98 L886.75,380.98 L886.75,376.90 L888.44,376.90 L888.44,390.27 L890.12,390.27 L890.12,394.20 L891.81,394.20 L891.81,396.62 L893.50,396.62 L893.50,396.03 L895.18,396.03 L895.18,399.62 L896.87,399.62 L896.87,395.96 L898.55,395.96 L898.55,388.94 L900.24,388.94 L900.24,377.29 L901.92,377.29 L901.92,391.53 L903.61,391.53 L903.61,393.15 L905.29,393.15 L905.29,397.95 L906.98,397.95 L906.98,394.66 L908.67,394.66 L908.67,371.45 L910.35,371.45 L910.35,391.54 L912.04,391.54 L912.04,392.40 L913.72,392.40 L913.72,379.40 L915.41,379.40 L915.41,382.72 L917.09,382.72 L917.09,393.59 L918.78,393.59 L918.78,383.04 L920.46,383.04 L920.46,390.24 L922.15,390.24 L922.15,382.42 L923.84,382.42 L923.84,391.30 L925.52,391.30 L925.52,377.11 L927.21,377.11 L927.21,396.30 L928.89,396.30 L928.89,383.72 L930.58,383.72 L930.58,393.36 L932.26,393.36 L932.26,381.07 L933.95,381.07 L933.95,379.02 L935.63,379.02 L935.63,399.03 L937.32,399.03 L937.32,401.93 L939.01,401.93 L939.01,377.05 L940.69,377.05 L940.69,395.01 L942.38,395.01 L942.38,383.72 L944.06,383.72 L944.06,391.57 L945.75,391.57 L945.75,393.02 L947.43,393.02 L947.43,393.55 L949.12,393.55 L949.12,392.57 L950.80,392.57 L950.80,400.66 L952.49,400.66 L952.49,398.50 L954.18,398.50 L954.18,390.82 L955.86,390.82 L955.86,397.91 L957.55,397.91 L957.55,379.81 L959.23,379.81 L959.23,392.50 L960.92,392.50 L960.92,380.65 L962.60,380.65 L962.60,401.35 L964.29,401.35 L964.29,400.13 L965.97,400.13 L965.97,399.28 L967.66,399.28 L967.66,386.92 L969.35,386.92 L969.35,398.66 L971.03,398.66 L971.03,398.82 L972.72,398.82 L972.72,396.04 L974.40,396.04 L974.40,400.96 L976.09,400.96 L976.09,396.49 L977.77,396.49 L977.77,375.42 L979.46,375.42 L979.46,396.30 L981.14,396.30 L981.14,401.34 L982.83,401.34 L982.83,380.67 L984.52,380.67 L984.52,383.89 L986.20,383.89 L986.20,401.24 L987.89,401.24 L987.89,378.78 L989.57,378.78 L989.57,401.82 L991.26,401.82 L991.26,397.21 L992.94,397.21 L992.94,388.38 L994.63,388.38 L994.63,391.80 L996.31,391.80 L996.31,394.35 L998.00,394.35 L998.00,394.14 L999.69,394.14 L999.69,386.38 L1001.37,386.38 L1001.37,395.14 L1003.06,395.14 L1003.06,401.11 L1004.74,401.11 L1004.74,396.67 L1006.43,396.67 L1006.43,392.32 L1008.11,392.32 L1008.11,395.20 L1009.80,395.20 L1009.80,394.75 L1011.48,394.75 L1011.48,394.41 L1013.17,394.41 L1013.17,399.36 L1014.86,399.36 L1014.86,397.83 L1016.54,397.83 L1016.54,393.03 L1018.23,393.03 L1018.23,380.61 L1019.91,380.61 L1019.91,390.35 L1021.60,390.35 L1021.60,385.51 L1023.28,385.51 L1023.28,391.74 L1024.97,391.74 L1024.97,377.33 L1026.65,377.33 L1026.65,383.41 L1028.34,383.41 L1028.34,395.03 L1030.03,395.03 L1030.03,399.19 L1031.71,399.19 L1031.71,380.41 L1033.40,380.41 L1033.40,400.36 L1035.08,400.36 L1035.08,399.86 L1036.77,399.86 L1036.77,379.56 L1038.45,379.56 L1038.45,382.04 L1040.14,382.04 L1040.14,387.34 L1041.82,387.34 L1041.82,379.34 L1043.51,379.34 L1043.51,401.66 L1045.20,401.66 L1045.20,391.83 L1046.88,391.83 L1046.88,401.83 L1048.57,401.83 L1048.57,401.61 L1050.25,401.61 L1050.25,388.04 L1051.94,388.04 L1051.94,385.52 L1053.62,385.52 L1053.62,397.08 L1055.31,397.08 L1055.31,380.64 L1056.99,380.64 L1056.99,393.06 L1058.68,393.06 L1058.68,389.61 L1060.37,389.61 L1060.37,378.51 L1062.05,378.51 L1062.05,392.83 L1063.74,392.83 L1063.74,377.98 L1065.42,377.98 L1065.42,401.16 L1067.11,401.16 L1067.11,393.88 L1068.79,393.88 L1068.79,382.30 L1070.48,382.30 L1070.48,395.42 L1072.16,395.42 L1072.16,396.90 L1073.85,396.90 L1073.85,387.15 L1075.54,387.15 L1075.54,398.79 L1077.22,398.79 L1077.22,385.13 L1078.91,385.13 L1078.91,396.45 L1080.59,396.45 L1080.59,392.90 L1082.28,392.90 L1082.28,401.63 L1083.96,401.63 L1083.96,394.61 L1085.65,394.61 L1085.65,381.00 L1087.33,381.00 L1087.33,380.22 L1089.02,380.22 L1089.02,394.09 L1090.71,394.09 L1090.71,401.18 L1092.39,401.18 L1092.39,388.52 L1094.08,388.52 L1094.08,396.22 L1095.76,396.22 L1095.76,400.14 L1097.45,400.14 L1097.45,378.46 L1099.13,378.46 L1099.13,393.23 L1100.82,393.23 L1100.82,377.46 L1102.50,377.46 L1102.50,392.18 L1104.19,392.18 L1104.19,392.12 L1105.88,392.12 L1105.88,397.78 L1107.56,397.78 L1107.56,391.81 L1109.25,391.81 L1109.25,387.06 L1110.93,387.06 L1110.93,395.41 L1112.62,395.41 L1112.62,375.67 L1114.30,375.67 L1114.30,396.18 L1115.99,396.18 L1115.99,399.78 L1117.67,399.78 L1117.67,395.98 L1119.36,395.98 L1119.36,393.96 L1121.05,393.96 L1121.05,386.15 L1122.73,386.15 L1122.73,400.09 L1124.42,400.09 L1124.42,385.06 L1126.10,385.06 L1126.10,387.36 L1127.79,387.36 L1127.79,401.75 L1129.47,401.75 L1129.47,380.47 L1131.16,380.47 L1131.16,396.33 L1132.84,396.33 L1132.84,386.82 L1134.53,386.82 L1134.53,397.41 L1136.22,397.41 L1136.22,393.62 L1137.90,393.62 L1137.90,382.65 L1139.59,382.65 L1139.59,397.91 L1141.27,397.91 L1141.27,399.14 L1142.96,399.14 L1142.96,379.24 L1144.64,379.24 L1144.64,395.64 L1146.33,395.64 L1146.33,394.00 L1148.01,394.00 L1148.01,379.43 L1149.70,379.43" fill="none" stroke="#73BF69" stroke-width="1.1" stroke-linejoin="miter"/><path d="M846.30,458.26 L847.99,458.26 L847.99,468.18 L849.67,468.18 L849.67,484.04 L851.36,484.04 L851.36,470.80 L853.04,470.80 L853.04,476.77 L854.73,476.77 L854.73,472.38 L856.41,472.38 L856.41,479.22 L858.10,479.22 L858.10,468.47 L859.78,468.47 L859.78,473.05 L861.47,473.05 L861.47,479.41 L863.16,479.41 L863.16,471.81 L864.84,471.81 L864.84,461.61 L866.53,461.61 L866.53,483.09 L868.21,483.09 L868.21,484.39 L869.90,484.39 L869.90,462.74 L871.58,462.74 L871.58,471.78 L873.27,471.78 L873.27,466.74 L874.95,466.74 L874.95,461.94 L876.64,461.94 L876.64,463.95 L878.33,463.95 L878.33,472.30 L880.01,472.30 L880.01,459.19 L881.70,459.19 L881.70,481.15 L883.38,481.15 L883.38,483.59 L885.07,483.59 L885.07,468.40 L886.75,468.40 L886.75,466.79 L888.44,466.79 L888.44,464.62 L890.12,464.62 L890.12,479.13 L891.81,479.13 L891.81,471.16 L893.50,471.16 L893.50,466.04 L895.18,466.04 L895.18,462.04 L896.87,462.04 L896.87,458.54 L898.55,458.54 L898.55,478.65 L900.24,478.65 L900.24,479.80 L901.92,479.80 L901.92,461.03 L903.61,461.03 L903.61,472.40 L905.29,472.40 L905.29,466.92 L906.98,466.92 L906.98,468.91 L908.67,468.91 L908.67,474.07 L910.35,474.07 L910.35,460.18 L912.04,460.18 L912.04,485.14 L913.72,485.14 L913.72,476.33 L915.41,476.33 L915.41,476.95 L917.09,476.95 L917.09,468.10 L918.78,468.10 L918.78,467.13 L920.46,467.13 L920.46,468.07 L922.15,468.07 L922.15,488.68 L923.84,488.68 L923.84,458.79 L925.52,458.79 L925.52,473.50 L927.21,473.50 L927.21,484.50 L928.89,484.50 L928.89,459.57 L930.58,459.57 L930.58,471.52 L932.26,471.52 L932.26,477.27 L933.95,477.27 L933.95,469.59 L935.63,469.59 L935.63,464.88 L937.32,464.88 L937.32,466.34 L939.01,466.34 L939.01,463.77 L940.69,463.77 L940.69,480.74 L942.38,480.74 L942.38,460.12 L944.06,460.12 L944.06,476.12 L945.75,476.12 L945.75,473.05 L947.43,473.05 L947.43,470.05 L949.12,470.05 L949.12,466.33 L950.80,466.33 L950.80,476.08 L952.49,476.08 L952.49,471.70 L954.18,471.70 L954.18,473.87 L955.86,473.87 L955.86,470.22 L957.55,470.22 L957.55,486.63 L959.23,486.63 L959.23,462.16 L960.92,462.16 L960.92,465.93 L962.60,465.93 L962.60,476.57 L964.29,476.57 L964.29,468.40 L965.97,468.40 L965.97,470.07 L967.66,470.07 L967.66,463.84 L969.35,463.84 L969.35,486.38 L971.03,486.38 L971.03,471.45 L972.72,471.45 L972.72,474.75 L974.40,474.75 L974.40,462.42 L976.09,462.42 L976.09,480.72 L977.77,480.72 L977.77,474.15 L979.46,474.15 L979.46,477.80 L981.14,477.80 L981.14,468.71 L982.83,468.71 L982.83,471.75 L984.52,471.75 L984.52,473.53 L986.20,473.53 L986.20,474.99 L987.89,474.99 L987.89,470.24 L989.57,470.24 L989.57,474.83 L991.26,474.83 L991.26,465.59 L992.94,465.59 L992.94,473.72 L994.63,473.72 L994.63,467.80 L996.31,467.80 L996.31,466.00 L998.00,466.00 L998.00,459.03 L999.69,459.03 L999.69,460.11 L1001.37,460.11 L1001.37,463.28 L1003.06,463.28 L1003.06,470.42 L1004.74,470.42 L1004.74,464.92 L1006.43,464.92 L1006.43,474.09 L1008.11,474.09 L1008.11,472.53 L1009.80,472.53 L1009.80,462.61 L1011.48,462.61 L1011.48,463.56 L1013.17,463.56 L1013.17,482.73 L1014.86,482.73 L1014.86,487.41 L1016.54,487.41 L1016.54,487.04 L1018.23,487.04 L1018.23,466.32 L1019.91,466.32 L1019.91,470.65 L1021.60,470.65 L1021.60,484.48 L1023.28,484.48 L1023.28,467.71 L1024.97,467.71 L1024.97,472.73 L1026.65,472.73 L1026.65,461.10 L1028.34,461.10 L1028.34,459.87 L1030.03,459.87 L1030.03,472.10 L1031.71,472.10 L1031.71,465.00 L1033.40,465.00 L1033.40,472.87 L1035.08,472.87 L1035.08,480.46 L1036.77,480.46 L1036.77,463.42 L1038.45,463.42 L1038.45,473.21 L1040.14,473.21 L1040.14,459.64 L1041.82,459.64 L1041.82,473.96 L1043.51,473.96 L1043.51,470.09 L1045.20,470.09 L1045.20,461.41 L1046.88,461.41 L1046.88,475.05 L1048.57,475.05 L1048.57,487.89 L1050.25,487.89 L1050.25,466.55 L1051.94,466.55 L1051.94,461.06 L1053.62,461.06 L1053.62,460.27 L1055.31,460.27 L1055.31,480.22 L1056.99,480.22 L1056.99,460.63 L1058.68,460.63 L1058.68,485.63 L1060.37,485.63 L1060.37,474.76 L1062.05,474.76 L1062.05,480.91 L1063.74,480.91 L1063.74,465.04 L1065.42,465.04 L1065.42,480.56 L1067.11,480.56 L1067.11,478.30 L1068.79,478.30 L1068.79,484.57 L1070.48,484.57 L1070.48,473.67 L1072.16,473.67 L1072.16,479.48 L1073.85,479.48 L1073.85,467.52 L1075.54,467.52 L1075.54,471.74 L1077.22,471.74 L1077.22,472.56 L1078.91,472.56 L1078.91,466.32 L1080.59,466.32 L1080.59,482.94 L1082.28,482.94 L1082.28,470.99 L1083.96,470.99 L1083.96,471.11 L1085.65,471.11 L1085.65,487.70 L1087.33,487.70 L1087.33,474.96 L1089.02,474.96 L1089.02,487.87 L1090.71,487.87 L1090.71,462.75 L1092.39,462.75 L1092.39,465.47 L1094.08,465.47 L1094.08,478.16 L1095.76,478.16 L1095.76,469.24 L1097.45,469.24 L1097.45,477.00 L1099.13,477.00 L1099.13,461.69 L1100.82,461.69 L1100.82,470.15 L1102.50,470.15 L1102.50,467.71 L1104.19,467.71 L1104.19,482.55 L1105.88,482.55 L1105.88,465.40 L1107.56,465.40 L1107.56,483.58 L1109.25,483.58 L1109.25,475.03 L1110.93,475.03 L1110.93,478.23 L1112.62,478.23 L1112.62,475.23 L1114.30,475.23 L1114.30,469.00 L1115.99,469.00 L1115.99,466.64 L1117.67,466.64 L1117.67,483.73 L1119.36,483.73 L1119.36,475.53 L1121.05,475.53 L1121.05,459.18 L1122.73,459.18 L1122.73,482.89 L1124.42,482.89 L1124.42,463.94 L1126.10,463.94 L1126.10,462.09 L1127.79,462.09 L1127.79,461.16 L1129.47,461.16 L1129.47,470.58 L1131.16,470.58 L1131.16,459.65 L1132.84,459.65 L1132.84,472.75 L1134.53,472.75 L1134.53,472.95 L1136.22,472.95 L1136.22,476.30 L1137.90,476.30 L1137.90,474.21 L1139.59,474.21 L1139.59,461.40 L1141.27,461.40 L1141.27,469.25 L1142.96,469.25 L1142.96,465.13 L1144.64,465.13 L1144.64,464.08 L1146.33,464.08 L1146.33,461.71 L1148.01,461.71 L1148.01,471.20 L1149.70,471.20" fill="none" stroke="#FADE2A" stroke-width="1.1" stroke-linejoin="miter"/><rect x="1227" y="362" width="1" height="221" fill="rgba(240,250,255,0.09)"/><rect x="1294" y="362" width="1" height="221" fill="rgba(240,250,255,0.09)"/><rect x="1361" y="362" width="1" height="221" fill="rgba(240,250,255,0.09)"/><rect x="1430" y="362" width="1" height="221" fill="rgba(240,250,255,0.09)"/><rect x="1497" y="362" width="1" height="221" fill="rgba(240,250,255,0.09)"/><rect x="1565" y="362" width="1" height="221" fill="rgba(240,250,255,0.09)"/><rect x="1220" y="405" width="410" height="1" fill="rgba(240,250,255,0.09)"/><rect x="1220" y="448" width="410" height="1" fill="rgba(240,250,255,0.09)"/><rect x="1220" y="492" width="410" height="1" fill="rgba(240,250,255,0.09)"/><rect x="1220" y="535" width="410" height="1" fill="rgba(240,250,255,0.09)"/><path d="M1224.20,409.84 L1226.44,409.84 L1226.44,411.21 L1228.69,411.21 L1228.69,393.35 L1230.93,393.35 L1230.93,406.42 L1233.18,406.42 L1233.18,413.42 L1235.42,413.42 L1235.42,408.42 L1237.67,408.42 L1237.67,398.02 L1239.91,398.02 L1239.91,403.13 L1242.16,403.13 L1242.16,406.17 L1244.40,406.17 L1244.40,417.29 L1246.65,417.29 L1246.65,411.21 L1248.89,411.21 L1248.89,415.12 L1251.14,415.12 L1251.14,402.45 L1253.38,402.45 L1253.38,408.93 L1255.63,408.93 L1255.63,398.86 L1257.88,398.86 L1257.88,408.62 L1260.12,408.62 L1260.12,414.89 L1262.37,414.89 L1262.37,418.95 L1264.61,418.95 L1264.61,404.39 L1266.86,404.39 L1266.86,409.88 L1269.10,409.88 L1269.10,400.75 L1271.35,400.75 L1271.35,414.37 L1273.59,414.37 L1273.59,402.74 L1275.84,402.74 L1275.84,410.23 L1278.08,410.23 L1278.08,424.94 L1280.33,424.94 L1280.33,405.34 L1282.57,405.34 L1282.57,397.15 L1284.82,397.15 L1284.82,405.09 L1287.06,405.09 L1287.06,404.18 L1289.31,404.18 L1289.31,412.47 L1291.55,412.47 L1291.55,409.54 L1293.80,409.54 L1293.80,404.31 L1296.04,404.31 L1296.04,415.57 L1298.29,415.57 L1298.29,406.66 L1300.53,406.66 L1300.53,397.35 L1302.78,397.35 L1302.78,395.89 L1305.02,395.89 L1305.02,393.84 L1307.27,393.84 L1307.27,405.89 L1309.51,405.89 L1309.51,402.72 L1311.76,402.72 L1311.76,401.97 L1314.00,401.97 L1314.00,406.19 L1316.25,406.19 L1316.25,406.53 L1318.49,406.53 L1318.49,395.03 L1320.74,395.03 L1320.74,404.57 L1322.98,404.57 L1322.98,406.13 L1325.23,406.13 L1325.23,405.34 L1327.47,405.34 L1327.47,394.28 L1329.72,394.28 L1329.72,404.74 L1331.96,404.74 L1331.96,405.10 L1334.20,405.10 L1334.20,405.03 L1336.45,405.03 L1336.45,389.17 L1338.69,389.17 L1338.69,393.40 L1340.94,393.40 L1340.94,400.58 L1343.18,400.58 L1343.18,399.74 L1345.43,399.74 L1345.43,404.39 L1347.67,404.39 L1347.67,391.81 L1349.92,391.81 L1349.92,396.11 L1352.16,396.11 L1352.16,400.10 L1354.41,400.10 L1354.41,405.17 L1356.65,405.17 L1356.65,400.92 L1358.90,400.92 L1358.90,401.26 L1361.14,401.26 L1361.14,401.90 L1363.39,401.90 L1363.39,417.48 L1365.63,417.48 L1365.63,418.07 L1367.88,418.07 L1367.88,403.59 L1370.12,403.59 L1370.12,418.26 L1372.37,418.26 L1372.37,401.67 L1374.62,401.67 L1374.62,395.80 L1376.86,395.80 L1376.86,396.59 L1379.11,396.59 L1379.11,399.43 L1381.35,399.43 L1381.35,411.83 L1383.60,411.83 L1383.60,395.56 L1385.84,395.56 L1385.84,404.10 L1388.09,404.10 L1388.09,413.59 L1390.33,413.59 L1390.33,403.15 L1392.58,403.15 L1392.58,407.58 L1394.82,407.58 L1394.82,412.02 L1397.07,412.02 L1397.07,400.20 L1399.31,400.20 L1399.31,406.43 L1401.56,406.43 L1401.56,399.25 L1403.80,399.25 L1403.80,413.39 L1406.05,413.39 L1406.05,398.28 L1408.29,398.28 L1408.29,403.34 L1410.54,403.34 L1410.54,399.61 L1412.78,399.61 L1412.78,400.12 L1415.03,400.12 L1415.03,412.93 L1417.27,412.93 L1417.27,391.53 L1419.52,391.53 L1419.52,397.61 L1421.76,397.61 L1421.76,409.16 L1424.01,409.16 L1424.01,406.05 L1426.25,406.05 L1426.25,414.96 L1428.49,414.96 L1428.49,416.68 L1430.74,416.68 L1430.74,411.58 L1432.99,411.58 L1432.99,400.56 L1435.23,400.56 L1435.23,392.40 L1437.47,392.40 L1437.47,400.42 L1439.72,400.42 L1439.72,419.16 L1441.96,419.16 L1441.96,408.45 L1444.21,408.45 L1444.21,396.06 L1446.45,396.06 L1446.45,381.31 L1448.70,381.31 L1448.70,390.83 L1450.94,390.83 L1450.94,405.45 L1453.19,405.45 L1453.19,411.19 L1455.43,411.19 L1455.43,403.80 L1457.68,403.80 L1457.68,388.74 L1459.92,388.74 L1459.92,398.10 L1462.17,398.10 L1462.17,406.80 L1464.41,406.80 L1464.41,404.83 L1466.66,404.83 L1466.66,394.03 L1468.90,394.03 L1468.90,405.49 L1471.15,405.49 L1471.15,401.35 L1473.39,401.35 L1473.39,408.88 L1475.64,408.88 L1475.64,398.67 L1477.88,398.67 L1477.88,402.19 L1480.13,402.19 L1480.13,396.21 L1482.38,396.21 L1482.38,415.07 L1484.62,415.07 L1484.62,391.12 L1486.87,391.12 L1486.87,412.09 L1489.11,412.09 L1489.11,399.50 L1491.36,399.50 L1491.36,394.09 L1493.60,394.09 L1493.60,400.14 L1495.85,400.14 L1495.85,410.56 L1498.09,410.56 L1498.09,404.95 L1500.34,404.95 L1500.34,395.40 L1502.58,395.40 L1502.58,389.93 L1504.83,389.93 L1504.83,404.75 L1507.07,404.75 L1507.07,402.88 L1509.32,402.88 L1509.32,405.99 L1511.56,405.99 L1511.56,406.25 L1513.81,406.25 L1513.81,417.86 L1516.05,417.86 L1516.05,409.66 L1518.30,409.66 L1518.30,404.39 L1520.54,404.39 L1520.54,405.01 L1522.79,405.01 L1522.79,417.28 L1525.03,417.28 L1525.03,402.42 L1527.28,402.42 L1527.28,401.72 L1529.52,401.72 L1529.52,394.99 L1531.76,394.99 L1531.76,403.42 L1534.01,403.42 L1534.01,402.78 L1536.26,402.78 L1536.26,407.90 L1538.50,407.90 L1538.50,403.95 L1540.74,403.95 L1540.74,408.25 L1542.99,408.25 L1542.99,396.33 L1545.24,396.33 L1545.24,403.16 L1547.48,403.16 L1547.48,403.84 L1549.72,403.84 L1549.72,407.20 L1551.97,407.20 L1551.97,414.25 L1554.21,414.25 L1554.21,395.01 L1556.46,395.01 L1556.46,396.29 L1558.70,396.29 L1558.70,398.56 L1560.95,398.56 L1560.95,411.15 L1563.19,411.15 L1563.19,413.73 L1565.44,413.73 L1565.44,406.82 L1567.68,406.82 L1567.68,420.92 L1569.93,420.92 L1569.93,414.00 L1572.17,414.00 L1572.17,416.40 L1574.42,416.40 L1574.42,400.49 L1576.66,400.49 L1576.66,410.92 L1578.91,410.92 L1578.91,412.86 L1581.15,412.86 L1581.15,393.61 L1583.40,393.61 L1583.40,405.10 L1585.64,405.10 L1585.64,396.08 L1587.89,396.08 L1587.89,395.35 L1590.13,395.35 L1590.13,393.52 L1592.38,393.52 L1592.38,396.69 L1594.62,396.69 L1594.62,400.46 L1596.87,400.46 L1596.87,394.64 L1599.12,394.64 L1599.12,403.32 L1601.36,403.32 L1601.36,408.40 L1603.61,408.40 L1603.61,398.98 L1605.85,398.98 L1605.85,406.98 L1608.10,406.98 L1608.10,407.84 L1610.34,407.84 L1610.34,404.83 L1612.59,404.83 L1612.59,403.72 L1614.83,403.72 L1614.83,396.88 L1617.08,396.88 L1617.08,404.32 L1619.32,404.32 L1619.32,409.07 L1621.57,409.07 L1621.57,403.74 L1623.81,403.74 L1623.81,405.22 L1626.06,405.22 L1626.06,417.02 L1628.30,417.02 L1628.30,579.30 L1224.20,579.30 Z" fill="#73BF69" fill-opacity="0.5"/><path d="M1224.20,407.46 L1226.44,407.46 L1226.44,398.38 L1228.69,398.38 L1228.69,384.99 L1230.93,384.99 L1230.93,382.37 L1233.18,382.37 L1233.18,398.96 L1235.42,398.96 L1235.42,384.41 L1237.67,384.41 L1237.67,393.72 L1239.91,393.72 L1239.91,386.75 L1242.16,386.75 L1242.16,373.95 L1244.40,373.95 L1244.40,405.90 L1246.65,405.90 L1246.65,397.84 L1248.89,397.84 L1248.89,409.59 L1251.14,409.59 L1251.14,390.03 L1253.38,390.03 L1253.38,392.41 L1255.63,392.41 L1255.63,394.53 L1257.88,394.53 L1257.88,392.58 L1260.12,392.58 L1260.12,402.09 L1262.37,402.09 L1262.37,403.78 L1264.61,403.78 L1264.61,392.49 L1266.86,392.49 L1266.86,399.17 L1269.10,399.17 L1269.10,399.01 L1271.35,399.01 L1271.35,400.13 L1273.59,400.13 L1273.59,390.62 L1275.84,390.62 L1275.84,398.48 L1278.08,398.48 L1278.08,423.15 L1280.33,423.15 L1280.33,386.96 L1282.57,386.96 L1282.57,386.16 L1284.82,386.16 L1284.82,392.61 L1287.06,392.61 L1287.06,394.88 L1289.31,394.88 L1289.31,399.33 L1291.55,399.33 L1291.55,398.64 L1293.80,398.64 L1293.80,397.00 L1296.04,397.00 L1296.04,403.88 L1298.29,403.88 L1298.29,399.56 L1300.53,399.56 L1300.53,387.27 L1302.78,387.27 L1302.78,383.04 L1305.02,383.04 L1305.02,374.39 L1307.27,374.39 L1307.27,392.26 L1309.51,392.26 L1309.51,398.14 L1311.76,398.14 L1311.76,388.69 L1314.00,388.69 L1314.00,387.85 L1316.25,387.85 L1316.25,387.47 L1318.49,387.47 L1318.49,379.87 L1320.74,379.87 L1320.74,399.41 L1322.98,399.41 L1322.98,398.81 L1325.23,398.81 L1325.23,397.74 L1327.47,397.74 L1327.47,388.46 L1329.72,388.46 L1329.72,401.42 L1331.96,401.42 L1331.96,396.53 L1334.20,396.53 L1334.20,398.87 L1336.45,398.87 L1336.45,384.19 L1338.69,384.19 L1338.69,383.44 L1340.94,383.44 L1340.94,375.80 L1343.18,375.80 L1343.18,394.42 L1345.43,394.42 L1345.43,398.70 L1347.67,398.70 L1347.67,370.98 L1349.92,370.98 L1349.92,389.65 L1352.16,389.65 L1352.16,389.48 L1354.41,389.48 L1354.41,399.09 L1356.65,399.09 L1356.65,385.22 L1358.90,385.22 L1358.90,382.63 L1361.14,382.63 L1361.14,396.11 L1363.39,396.11 L1363.39,409.29 L1365.63,409.29 L1365.63,411.08 L1367.88,411.08 L1367.88,388.07 L1370.12,388.07 L1370.12,410.88 L1372.37,410.88 L1372.37,392.93 L1374.62,392.93 L1374.62,387.18 L1376.86,387.18 L1376.86,391.62 L1379.11,391.62 L1379.11,396.24 L1381.35,396.24 L1381.35,409.68 L1383.60,409.68 L1383.60,380.51 L1385.84,380.51 L1385.84,400.29 L1388.09,400.29 L1388.09,401.58 L1390.33,401.58 L1390.33,391.35 L1392.58,391.35 L1392.58,394.26 L1394.82,394.26 L1394.82,401.93 L1397.07,401.93 L1397.07,388.89 L1399.31,388.89 L1399.31,380.11 L1401.56,380.11 L1401.56,386.66 L1403.80,386.66 L1403.80,401.28 L1406.05,401.28 L1406.05,384.81 L1408.29,384.81 L1408.29,381.53 L1410.54,381.53 L1410.54,384.43 L1412.78,384.43 L1412.78,387.71 L1415.03,387.71 L1415.03,409.34 L1417.27,409.34 L1417.27,389.78 L1419.52,389.78 L1419.52,389.70 L1421.76,389.70 L1421.76,384.15 L1424.01,384.15 L1424.01,392.97 L1426.25,392.97 L1426.25,408.84 L1428.49,408.84 L1428.49,406.42 L1430.74,406.42 L1430.74,410.75 L1432.99,410.75 L1432.99,372.14 L1435.23,372.14 L1435.23,388.61 L1437.47,388.61 L1437.47,395.09 L1439.72,395.09 L1439.72,408.44 L1441.96,408.44 L1441.96,395.82 L1444.21,395.82 L1444.21,378.39 L1446.45,378.39 L1446.45,370.98 L1448.70,370.98 L1448.70,379.33 L1450.94,379.33 L1450.94,392.56 L1453.19,392.56 L1453.19,399.73 L1455.43,399.73 L1455.43,386.99 L1457.68,386.99 L1457.68,385.82 L1459.92,385.82 L1459.92,387.33 L1462.17,387.33 L1462.17,392.36 L1464.41,392.36 L1464.41,402.28 L1466.66,402.28 L1466.66,386.29 L1468.90,386.29 L1468.90,384.28 L1471.15,384.28 L1471.15,389.04 L1473.39,389.04 L1473.39,399.99 L1475.64,399.99 L1475.64,372.22 L1477.88,372.22 L1477.88,394.49 L1480.13,394.49 L1480.13,378.02 L1482.38,378.02 L1482.38,399.29 L1484.62,399.29 L1484.62,379.54 L1486.87,379.54 L1486.87,389.88 L1489.11,389.88 L1489.11,396.79 L1491.36,396.79 L1491.36,391.49 L1493.60,391.49 L1493.60,391.97 L1495.85,391.97 L1495.85,401.69 L1498.09,401.69 L1498.09,387.90 L1500.34,387.90 L1500.34,386.18 L1502.58,386.18 L1502.58,370.98 L1504.83,370.98 L1504.83,400.21 L1507.07,400.21 L1507.07,388.85 L1509.32,388.85 L1509.32,395.85 L1511.56,395.85 L1511.56,402.48 L1513.81,402.48 L1513.81,384.06 L1516.05,384.06 L1516.05,400.73 L1518.30,400.73 L1518.30,397.44 L1520.54,397.44 L1520.54,387.28 L1522.79,387.28 L1522.79,405.98 L1525.03,405.98 L1525.03,401.36 L1527.28,401.36 L1527.28,390.73 L1529.52,390.73 L1529.52,376.68 L1531.76,376.68 L1531.76,385.89 L1534.01,385.89 L1534.01,401.57 L1536.26,401.57 L1536.26,389.73 L1538.50,389.73 L1538.50,393.11 L1540.74,393.11 L1540.74,397.58 L1542.99,397.58 L1542.99,376.25 L1545.24,376.25 L1545.24,383.00 L1547.48,383.00 L1547.48,387.31 L1549.72,387.31 L1549.72,388.22 L1551.97,388.22 L1551.97,413.91 L1554.21,413.91 L1554.21,390.30 L1556.46,390.30 L1556.46,381.63 L1558.70,381.63 L1558.70,385.16 L1560.95,385.16 L1560.95,393.95 L1563.19,393.95 L1563.19,404.48 L1565.44,404.48 L1565.44,399.89 L1567.68,399.89 L1567.68,413.02 L1569.93,413.02 L1569.93,393.84 L1572.17,393.84 L1572.17,408.77 L1574.42,408.77 L1574.42,397.14 L1576.66,397.14 L1576.66,396.21 L1578.91,396.21 L1578.91,400.93 L1581.15,400.93 L1581.15,381.19 L1583.40,381.19 L1583.40,398.93 L1585.64,398.93 L1585.64,389.31 L1587.89,389.31 L1587.89,385.00 L1590.13,385.00 L1590.13,374.45 L1592.38,374.45 L1592.38,392.33 L1594.62,392.33 L1594.62,397.69 L1596.87,397.69 L1596.87,373.37 L1599.12,373.37 L1599.12,391.96 L1601.36,391.96 L1601.36,394.29 L1603.61,394.29 L1603.61,392.27 L1605.85,392.27 L1605.85,403.19 L1608.10,403.19 L1608.10,398.63 L1610.34,398.63 L1610.34,391.13 L1612.59,391.13 L1612.59,401.58 L1614.83,401.58 L1614.83,388.03 L1617.08,388.03 L1617.08,395.35 L1619.32,395.35 L1619.32,395.27 L1621.57,395.27 L1621.57,399.76 L1623.81,399.76 L1623.81,394.70 L1626.06,394.70 L1626.06,404.98 L1628.30,404.98 L1628.30,417.02 L1626.06,417.02 L1626.06,405.22 L1623.81,405.22 L1623.81,403.74 L1621.57,403.74 L1621.57,409.07 L1619.32,409.07 L1619.32,404.32 L1617.08,404.32 L1617.08,396.88 L1614.83,396.88 L1614.83,403.72 L1612.59,403.72 L1612.59,404.83 L1610.34,404.83 L1610.34,407.84 L1608.10,407.84 L1608.10,406.98 L1605.85,406.98 L1605.85,398.98 L1603.61,398.98 L1603.61,408.40 L1601.36,408.40 L1601.36,403.32 L1599.12,403.32 L1599.12,394.64 L1596.87,394.64 L1596.87,400.46 L1594.62,400.46 L1594.62,396.69 L1592.38,396.69 L1592.38,393.52 L1590.13,393.52 L1590.13,395.35 L1587.89,395.35 L1587.89,396.08 L1585.64,396.08 L1585.64,405.10 L1583.40,405.10 L1583.40,393.61 L1581.15,393.61 L1581.15,412.86 L1578.91,412.86 L1578.91,410.92 L1576.66,410.92 L1576.66,400.49 L1574.42,400.49 L1574.42,416.40 L1572.17,416.40 L1572.17,414.00 L1569.93,414.00 L1569.93,420.92 L1567.68,420.92 L1567.68,406.82 L1565.44,406.82 L1565.44,413.73 L1563.19,413.73 L1563.19,411.15 L1560.95,411.15 L1560.95,398.56 L1558.70,398.56 L1558.70,396.29 L1556.46,396.29 L1556.46,395.01 L1554.21,395.01 L1554.21,414.25 L1551.97,414.25 L1551.97,407.20 L1549.72,407.20 L1549.72,403.84 L1547.48,403.84 L1547.48,403.16 L1545.24,403.16 L1545.24,396.33 L1542.99,396.33 L1542.99,408.25 L1540.74,408.25 L1540.74,403.95 L1538.50,403.95 L1538.50,407.90 L1536.26,407.90 L1536.26,402.78 L1534.01,402.78 L1534.01,403.42 L1531.76,403.42 L1531.76,394.99 L1529.52,394.99 L1529.52,401.72 L1527.28,401.72 L1527.28,402.42 L1525.03,402.42 L1525.03,417.28 L1522.79,417.28 L1522.79,405.01 L1520.54,405.01 L1520.54,404.39 L1518.30,404.39 L1518.30,409.66 L1516.05,409.66 L1516.05,417.86 L1513.81,417.86 L1513.81,406.25 L1511.56,406.25 L1511.56,405.99 L1509.32,405.99 L1509.32,402.88 L1507.07,402.88 L1507.07,404.75 L1504.83,404.75 L1504.83,389.93 L1502.58,389.93 L1502.58,395.40 L1500.34,395.40 L1500.34,404.95 L1498.09,404.95 L1498.09,410.56 L1495.85,410.56 L1495.85,400.14 L1493.60,400.14 L1493.60,394.09 L1491.36,394.09 L1491.36,399.50 L1489.11,399.50 L1489.11,412.09 L1486.87,412.09 L1486.87,391.12 L1484.62,391.12 L1484.62,415.07 L1482.38,415.07 L1482.38,396.21 L1480.13,396.21 L1480.13,402.19 L1477.88,402.19 L1477.88,398.67 L1475.64,398.67 L1475.64,408.88 L1473.39,408.88 L1473.39,401.35 L1471.15,401.35 L1471.15,405.49 L1468.90,405.49 L1468.90,394.03 L1466.66,394.03 L1466.66,404.83 L1464.41,404.83 L1464.41,406.80 L1462.17,406.80 L1462.17,398.10 L1459.92,398.10 L1459.92,388.74 L1457.68,388.74 L1457.68,403.80 L1455.43,403.80 L1455.43,411.19 L1453.19,411.19 L1453.19,405.45 L1450.94,405.45 L1450.94,390.83 L1448.70,390.83 L1448.70,381.31 L1446.45,381.31 L1446.45,396.06 L1444.21,396.06 L1444.21,408.45 L1441.96,408.45 L1441.96,419.16 L1439.72,419.16 L1439.72,400.42 L1437.47,400.42 L1437.47,392.40 L1435.23,392.40 L1435.23,400.56 L1432.99,400.56 L1432.99,411.58 L1430.74,411.58 L1430.74,416.68 L1428.49,416.68 L1428.49,414.96 L1426.25,414.96 L1426.25,406.05 L1424.01,406.05 L1424.01,409.16 L1421.76,409.16 L1421.76,397.61 L1419.52,397.61 L1419.52,391.53 L1417.27,391.53 L1417.27,412.93 L1415.03,412.93 L1415.03,400.12 L1412.78,400.12 L1412.78,399.61 L1410.54,399.61 L1410.54,403.34 L1408.29,403.34 L1408.29,398.28 L1406.05,398.28 L1406.05,413.39 L1403.80,413.39 L1403.80,399.25 L1401.56,399.25 L1401.56,406.43 L1399.31,406.43 L1399.31,400.20 L1397.07,400.20 L1397.07,412.02 L1394.82,412.02 L1394.82,407.58 L1392.58,407.58 L1392.58,403.15 L1390.33,403.15 L1390.33,413.59 L1388.09,413.59 L1388.09,404.10 L1385.84,404.10 L1385.84,395.56 L1383.60,395.56 L1383.60,411.83 L1381.35,411.83 L1381.35,399.43 L1379.11,399.43 L1379.11,396.59 L1376.86,396.59 L1376.86,395.80 L1374.62,395.80 L1374.62,401.67 L1372.37,401.67 L1372.37,418.26 L1370.12,418.26 L1370.12,403.59 L1367.88,403.59 L1367.88,418.07 L1365.63,418.07 L1365.63,417.48 L1363.39,417.48 L1363.39,401.90 L1361.14,401.90 L1361.14,401.26 L1358.90,401.26 L1358.90,400.92 L1356.65,400.92 L1356.65,405.17 L1354.41,405.17 L1354.41,400.10 L1352.16,400.10 L1352.16,396.11 L1349.92,396.11 L1349.92,391.81 L1347.67,391.81 L1347.67,404.39 L1345.43,404.39 L1345.43,399.74 L1343.18,399.74 L1343.18,400.58 L1340.94,400.58 L1340.94,393.40 L1338.69,393.40 L1338.69,389.17 L1336.45,389.17 L1336.45,405.03 L1334.20,405.03 L1334.20,405.10 L1331.96,405.10 L1331.96,404.74 L1329.72,404.74 L1329.72,394.28 L1327.47,394.28 L1327.47,405.34 L1325.23,405.34 L1325.23,406.13 L1322.98,406.13 L1322.98,404.57 L1320.74,404.57 L1320.74,395.03 L1318.49,395.03 L1318.49,406.53 L1316.25,406.53 L1316.25,406.19 L1314.00,406.19 L1314.00,401.97 L1311.76,401.97 L1311.76,402.72 L1309.51,402.72 L1309.51,405.89 L1307.27,405.89 L1307.27,393.84 L1305.02,393.84 L1305.02,395.89 L1302.78,395.89 L1302.78,397.35 L1300.53,397.35 L1300.53,406.66 L1298.29,406.66 L1298.29,415.57 L1296.04,415.57 L1296.04,404.31 L1293.80,404.31 L1293.80,409.54 L1291.55,409.54 L1291.55,412.47 L1289.31,412.47 L1289.31,404.18 L1287.06,404.18 L1287.06,405.09 L1284.82,405.09 L1284.82,397.15 L1282.57,397.15 L1282.57,405.34 L1280.33,405.34 L1280.33,424.94 L1278.08,424.94 L1278.08,410.23 L1275.84,410.23 L1275.84,402.74 L1273.59,402.74 L1273.59,414.37 L1271.35,414.37 L1271.35,400.75 L1269.10,400.75 L1269.10,409.88 L1266.86,409.88 L1266.86,404.39 L1264.61,404.39 L1264.61,418.95 L1262.37,418.95 L1262.37,414.89 L1260.12,414.89 L1260.12,408.62 L1257.88,408.62 L1257.88,398.86 L1255.63,398.86 L1255.63,408.93 L1253.38,408.93 L1253.38,402.45 L1251.14,402.45 L1251.14,415.12 L1248.89,415.12 L1248.89,411.21 L1246.65,411.21 L1246.65,417.29 L1244.40,417.29 L1244.40,406.17 L1242.16,406.17 L1242.16,403.13 L1239.91,403.13 L1239.91,398.02 L1237.67,398.02 L1237.67,408.42 L1235.42,408.42 L1235.42,413.42 L1233.18,413.42 L1233.18,406.42 L1230.93,406.42 L1230.93,393.35 L1228.69,393.35 L1228.69,411.21 L1226.44,411.21 L1226.44,409.84 L1224.20,409.84 Z" fill="#F2495C" fill-opacity="0.45"/><path d="M1224.20,407.09 L1226.44,407.09 L1226.44,394.32 L1228.69,394.32 L1228.69,380.94 L1230.93,380.94 L1230.93,378.74 L1233.18,378.74 L1233.18,398.23 L1235.42,398.23 L1235.42,381.00 L1237.67,381.00 L1237.67,392.54 L1239.91,392.54 L1239.91,384.93 L1242.16,384.93 L1242.16,372.25 L1244.40,372.25 L1244.40,403.46 L1246.65,403.46 L1246.65,397.19 L1248.89,397.19 L1248.89,406.18 L1251.14,406.18 L1251.14,388.14 L1253.38,388.14 L1253.38,390.47 L1255.63,390.47 L1255.63,393.87 L1257.88,393.87 L1257.88,389.61 L1260.12,389.61 L1260.12,397.19 L1262.37,397.19 L1262.37,401.82 L1264.61,401.82 L1264.61,391.78 L1266.86,391.78 L1266.86,396.40 L1269.10,396.40 L1269.10,397.27 L1271.35,397.27 L1271.35,399.90 L1273.59,399.90 L1273.59,389.92 L1275.84,389.92 L1275.84,396.95 L1278.08,396.95 L1278.08,417.32 L1280.33,417.32 L1280.33,386.82 L1282.57,386.82 L1282.57,384.30 L1284.82,384.30 L1284.82,391.63 L1287.06,391.63 L1287.06,391.58 L1289.31,391.58 L1289.31,396.47 L1291.55,396.47 L1291.55,396.64 L1293.80,396.64 L1293.80,394.80 L1296.04,394.80 L1296.04,401.45 L1298.29,401.45 L1298.29,396.81 L1300.53,396.81 L1300.53,386.09 L1302.78,386.09 L1302.78,381.03 L1305.02,381.03 L1305.02,371.16 L1307.27,371.16 L1307.27,390.20 L1309.51,390.20 L1309.51,394.26 L1311.76,394.26 L1311.76,383.54 L1314.00,383.54 L1314.00,387.00 L1316.25,387.00 L1316.25,386.68 L1318.49,386.68 L1318.49,378.05 L1320.74,378.05 L1320.74,396.35 L1322.98,396.35 L1322.98,396.82 L1325.23,396.82 L1325.23,396.32 L1327.47,396.32 L1327.47,387.58 L1329.72,387.58 L1329.72,399.60 L1331.96,399.60 L1331.96,393.70 L1334.20,393.70 L1334.20,393.90 L1336.45,393.90 L1336.45,381.81 L1338.69,381.81 L1338.69,379.35 L1340.94,379.35 L1340.94,375.41 L1343.18,375.41 L1343.18,394.20 L1345.43,394.20 L1345.43,394.66 L1347.67,394.66 L1347.67,367.73 L1349.92,367.73 L1349.92,388.74 L1352.16,388.74 L1352.16,387.63 L1354.41,387.63 L1354.41,395.73 L1356.65,395.73 L1356.65,379.49 L1358.90,379.49 L1358.90,381.36 L1361.14,381.36 L1361.14,395.17 L1363.39,395.17 L1363.39,404.87 L1365.63,404.87 L1365.63,408.79 L1367.88,408.79 L1367.88,387.92 L1370.12,387.92 L1370.12,409.98 L1372.37,409.98 L1372.37,392.30 L1374.62,392.30 L1374.62,386.07 L1376.86,386.07 L1376.86,391.37 L1379.11,391.37 L1379.11,396.21 L1381.35,396.21 L1381.35,409.14 L1383.60,409.14 L1383.60,379.10 L1385.84,379.10 L1385.84,399.67 L1388.09,399.67 L1388.09,397.01 L1390.33,397.01 L1390.33,388.97 L1392.58,388.97 L1392.58,392.18 L1394.82,392.18 L1394.82,401.71 L1397.07,401.71 L1397.07,385.62 L1399.31,385.62 L1399.31,379.28 L1401.56,379.28 L1401.56,386.36 L1403.80,386.36 L1403.80,400.62 L1406.05,400.62 L1406.05,382.05 L1408.29,382.05 L1408.29,378.88 L1410.54,378.88 L1410.54,382.93 L1412.78,382.93 L1412.78,385.49 L1415.03,385.49 L1415.03,405.76 L1417.27,405.76 L1417.27,389.78 L1419.52,389.78 L1419.52,386.41 L1421.76,386.41 L1421.76,381.25 L1424.01,381.25 L1424.01,390.62 L1426.25,390.62 L1426.25,406.98 L1428.49,406.98 L1428.49,403.66 L1430.74,403.66 L1430.74,409.93 L1432.99,409.93 L1432.99,372.07 L1435.23,372.07 L1435.23,385.80 L1437.47,385.80 L1437.47,392.79 L1439.72,392.79 L1439.72,405.65 L1441.96,405.65 L1441.96,394.20 L1444.21,394.20 L1444.21,376.91 L1446.45,376.91 L1446.45,367.73 L1448.70,367.73 L1448.70,377.61 L1450.94,377.61 L1450.94,391.68 L1453.19,391.68 L1453.19,397.90 L1455.43,397.90 L1455.43,382.61 L1457.68,382.61 L1457.68,381.34 L1459.92,381.34 L1459.92,387.22 L1462.17,387.22 L1462.17,390.92 L1464.41,390.92 L1464.41,401.82 L1466.66,401.82 L1466.66,386.07 L1468.90,386.07 L1468.90,381.97 L1471.15,381.97 L1471.15,386.42 L1473.39,386.42 L1473.39,396.68 L1475.64,396.68 L1475.64,370.91 L1477.88,370.91 L1477.88,391.42 L1480.13,391.42 L1480.13,372.68 L1482.38,372.68 L1482.38,395.46 L1484.62,395.46 L1484.62,377.62 L1486.87,377.62 L1486.87,387.04 L1489.11,387.04 L1489.11,396.26 L1491.36,396.26 L1491.36,388.35 L1493.60,388.35 L1493.60,389.35 L1495.85,389.35 L1495.85,398.33 L1498.09,398.33 L1498.09,386.32 L1500.34,386.32 L1500.34,383.36 L1502.58,383.36 L1502.58,369.29 L1504.83,369.29 L1504.83,396.70 L1507.07,396.70 L1507.07,387.87 L1509.32,387.87 L1509.32,394.06 L1511.56,394.06 L1511.56,402.03 L1513.81,402.03 L1513.81,383.38 L1516.05,383.38 L1516.05,400.61 L1518.30,400.61 L1518.30,391.99 L1520.54,391.99 L1520.54,386.99 L1522.79,386.99 L1522.79,404.35 L1525.03,404.35 L1525.03,398.39 L1527.28,398.39 L1527.28,390.05 L1529.52,390.05 L1529.52,374.94 L1531.76,374.94 L1531.76,385.36 L1534.01,385.36 L1534.01,399.62 L1536.26,399.62 L1536.26,386.69 L1538.50,386.69 L1538.50,390.66 L1540.74,390.66 L1540.74,396.16 L1542.99,396.16 L1542.99,375.89 L1545.24,375.89 L1545.24,380.03 L1547.48,380.03 L1547.48,384.75 L1549.72,384.75 L1549.72,387.38 L1551.97,387.38 L1551.97,413.63 L1554.21,413.63 L1554.21,389.59 L1556.46,389.59 L1556.46,378.90 L1558.70,378.90 L1558.70,383.80 L1560.95,383.80 L1560.95,393.40 L1563.19,393.40 L1563.19,398.81 L1565.44,398.81 L1565.44,399.42 L1567.68,399.42 L1567.68,409.28 L1569.93,409.28 L1569.93,391.27 L1572.17,391.27 L1572.17,405.91 L1574.42,405.91 L1574.42,395.81 L1576.66,395.81 L1576.66,394.45 L1578.91,394.45 L1578.91,397.92 L1581.15,397.92 L1581.15,380.86 L1583.40,380.86 L1583.40,396.70 L1585.64,396.70 L1585.64,387.29 L1587.89,387.29 L1587.89,383.78 L1590.13,383.78 L1590.13,370.99 L1592.38,370.99 L1592.38,391.35 L1594.62,391.35 L1594.62,395.53 L1596.87,395.53 L1596.87,372.03 L1599.12,372.03 L1599.12,391.54 L1601.36,391.54 L1601.36,393.66 L1603.61,393.66 L1603.61,391.36 L1605.85,391.36 L1605.85,402.62 L1608.10,402.62 L1608.10,393.93 L1610.34,393.93 L1610.34,389.85 L1612.59,389.85 L1612.59,399.85 L1614.83,399.85 L1614.83,387.29 L1617.08,387.29 L1617.08,389.66 L1619.32,389.66 L1619.32,394.93 L1621.57,394.93 L1621.57,399.58 L1623.81,399.58 L1623.81,393.52 L1626.06,393.52 L1626.06,402.12 L1628.30,402.12 L1628.30,404.98 L1626.06,404.98 L1626.06,394.70 L1623.81,394.70 L1623.81,399.76 L1621.57,399.76 L1621.57,395.27 L1619.32,395.27 L1619.32,395.35 L1617.08,395.35 L1617.08,388.03 L1614.83,388.03 L1614.83,401.58 L1612.59,401.58 L1612.59,391.13 L1610.34,391.13 L1610.34,398.63 L1608.10,398.63 L1608.10,403.19 L1605.85,403.19 L1605.85,392.27 L1603.61,392.27 L1603.61,394.29 L1601.36,394.29 L1601.36,391.96 L1599.12,391.96 L1599.12,373.37 L1596.87,373.37 L1596.87,397.69 L1594.62,397.69 L1594.62,392.33 L1592.38,392.33 L1592.38,374.45 L1590.13,374.45 L1590.13,385.00 L1587.89,385.00 L1587.89,389.31 L1585.64,389.31 L1585.64,398.93 L1583.40,398.93 L1583.40,381.19 L1581.15,381.19 L1581.15,400.93 L1578.91,400.93 L1578.91,396.21 L1576.66,396.21 L1576.66,397.14 L1574.42,397.14 L1574.42,408.77 L1572.17,408.77 L1572.17,393.84 L1569.93,393.84 L1569.93,413.02 L1567.68,413.02 L1567.68,399.89 L1565.44,399.89 L1565.44,404.48 L1563.19,404.48 L1563.19,393.95 L1560.95,393.95 L1560.95,385.16 L1558.70,385.16 L1558.70,381.63 L1556.46,381.63 L1556.46,390.30 L1554.21,390.30 L1554.21,413.91 L1551.97,413.91 L1551.97,388.22 L1549.72,388.22 L1549.72,387.31 L1547.48,387.31 L1547.48,383.00 L1545.24,383.00 L1545.24,376.25 L1542.99,376.25 L1542.99,397.58 L1540.74,397.58 L1540.74,393.11 L1538.50,393.11 L1538.50,389.73 L1536.26,389.73 L1536.26,401.57 L1534.01,401.57 L1534.01,385.89 L1531.76,385.89 L1531.76,376.68 L1529.52,376.68 L1529.52,390.73 L1527.28,390.73 L1527.28,401.36 L1525.03,401.36 L1525.03,405.98 L1522.79,405.98 L1522.79,387.28 L1520.54,387.28 L1520.54,397.44 L1518.30,397.44 L1518.30,400.73 L1516.05,400.73 L1516.05,384.06 L1513.81,384.06 L1513.81,402.48 L1511.56,402.48 L1511.56,395.85 L1509.32,395.85 L1509.32,388.85 L1507.07,388.85 L1507.07,400.21 L1504.83,400.21 L1504.83,370.98 L1502.58,370.98 L1502.58,386.18 L1500.34,386.18 L1500.34,387.90 L1498.09,387.90 L1498.09,401.69 L1495.85,401.69 L1495.85,391.97 L1493.60,391.97 L1493.60,391.49 L1491.36,391.49 L1491.36,396.79 L1489.11,396.79 L1489.11,389.88 L1486.87,389.88 L1486.87,379.54 L1484.62,379.54 L1484.62,399.29 L1482.38,399.29 L1482.38,378.02 L1480.13,378.02 L1480.13,394.49 L1477.88,394.49 L1477.88,372.22 L1475.64,372.22 L1475.64,399.99 L1473.39,399.99 L1473.39,389.04 L1471.15,389.04 L1471.15,384.28 L1468.90,384.28 L1468.90,386.29 L1466.66,386.29 L1466.66,402.28 L1464.41,402.28 L1464.41,392.36 L1462.17,392.36 L1462.17,387.33 L1459.92,387.33 L1459.92,385.82 L1457.68,385.82 L1457.68,386.99 L1455.43,386.99 L1455.43,399.73 L1453.19,399.73 L1453.19,392.56 L1450.94,392.56 L1450.94,379.33 L1448.70,379.33 L1448.70,370.98 L1446.45,370.98 L1446.45,378.39 L1444.21,378.39 L1444.21,395.82 L1441.96,395.82 L1441.96,408.44 L1439.72,408.44 L1439.72,395.09 L1437.47,395.09 L1437.47,388.61 L1435.23,388.61 L1435.23,372.14 L1432.99,372.14 L1432.99,410.75 L1430.74,410.75 L1430.74,406.42 L1428.49,406.42 L1428.49,408.84 L1426.25,408.84 L1426.25,392.97 L1424.01,392.97 L1424.01,384.15 L1421.76,384.15 L1421.76,389.70 L1419.52,389.70 L1419.52,389.78 L1417.27,389.78 L1417.27,409.34 L1415.03,409.34 L1415.03,387.71 L1412.78,387.71 L1412.78,384.43 L1410.54,384.43 L1410.54,381.53 L1408.29,381.53 L1408.29,384.81 L1406.05,384.81 L1406.05,401.28 L1403.80,401.28 L1403.80,386.66 L1401.56,386.66 L1401.56,380.11 L1399.31,380.11 L1399.31,388.89 L1397.07,388.89 L1397.07,401.93 L1394.82,401.93 L1394.82,394.26 L1392.58,394.26 L1392.58,391.35 L1390.33,391.35 L1390.33,401.58 L1388.09,401.58 L1388.09,400.29 L1385.84,400.29 L1385.84,380.51 L1383.60,380.51 L1383.60,409.68 L1381.35,409.68 L1381.35,396.24 L1379.11,396.24 L1379.11,391.62 L1376.86,391.62 L1376.86,387.18 L1374.62,387.18 L1374.62,392.93 L1372.37,392.93 L1372.37,410.88 L1370.12,410.88 L1370.12,388.07 L1367.88,388.07 L1367.88,411.08 L1365.63,411.08 L1365.63,409.29 L1363.39,409.29 L1363.39,396.11 L1361.14,396.11 L1361.14,382.63 L1358.90,382.63 L1358.90,385.22 L1356.65,385.22 L1356.65,399.09 L1354.41,399.09 L1354.41,389.48 L1352.16,389.48 L1352.16,389.65 L1349.92,389.65 L1349.92,370.98 L1347.67,370.98 L1347.67,398.70 L1345.43,398.70 L1345.43,394.42 L1343.18,394.42 L1343.18,375.80 L1340.94,375.80 L1340.94,383.44 L1338.69,383.44 L1338.69,384.19 L1336.45,384.19 L1336.45,398.87 L1334.20,398.87 L1334.20,396.53 L1331.96,396.53 L1331.96,401.42 L1329.72,401.42 L1329.72,388.46 L1327.47,388.46 L1327.47,397.74 L1325.23,397.74 L1325.23,398.81 L1322.98,398.81 L1322.98,399.41 L1320.74,399.41 L1320.74,379.87 L1318.49,379.87 L1318.49,387.47 L1316.25,387.47 L1316.25,387.85 L1314.00,387.85 L1314.00,388.69 L1311.76,388.69 L1311.76,398.14 L1309.51,398.14 L1309.51,392.26 L1307.27,392.26 L1307.27,374.39 L1305.02,374.39 L1305.02,383.04 L1302.78,383.04 L1302.78,387.27 L1300.53,387.27 L1300.53,399.56 L1298.29,399.56 L1298.29,403.88 L1296.04,403.88 L1296.04,397.00 L1293.80,397.00 L1293.80,398.64 L1291.55,398.64 L1291.55,399.33 L1289.31,399.33 L1289.31,394.88 L1287.06,394.88 L1287.06,392.61 L1284.82,392.61 L1284.82,386.16 L1282.57,386.16 L1282.57,386.96 L1280.33,386.96 L1280.33,423.15 L1278.08,423.15 L1278.08,398.48 L1275.84,398.48 L1275.84,390.62 L1273.59,390.62 L1273.59,400.13 L1271.35,400.13 L1271.35,399.01 L1269.10,399.01 L1269.10,399.17 L1266.86,399.17 L1266.86,392.49 L1264.61,392.49 L1264.61,403.78 L1262.37,403.78 L1262.37,402.09 L1260.12,402.09 L1260.12,392.58 L1257.88,392.58 L1257.88,394.53 L1255.63,394.53 L1255.63,392.41 L1253.38,392.41 L1253.38,390.03 L1251.14,390.03 L1251.14,409.59 L1248.89,409.59 L1248.89,397.84 L1246.65,397.84 L1246.65,405.90 L1244.40,405.90 L1244.40,373.95 L1242.16,373.95 L1242.16,386.75 L1239.91,386.75 L1239.91,393.72 L1237.67,393.72 L1237.67,384.41 L1235.42,384.41 L1235.42,398.96 L1233.18,398.96 L1233.18,382.37 L1230.93,382.37 L1230.93,384.99 L1228.69,384.99 L1228.69,398.38 L1226.44,398.38 L1226.44,407.46 L1224.20,407.46 Z" fill="#F2495C" fill-opacity="0.4"/><path d="M1224.20,407.09 L1226.44,407.09 L1226.44,394.32 L1228.69,394.32 L1228.69,380.94 L1230.93,380.94 L1230.93,378.74 L1233.18,378.74 L1233.18,398.23 L1235.42,398.23 L1235.42,381.00 L1237.67,381.00 L1237.67,392.54 L1239.91,392.54 L1239.91,384.93 L1242.16,384.93 L1242.16,372.25 L1244.40,372.25 L1244.40,403.46 L1246.65,403.46 L1246.65,397.19 L1248.89,397.19 L1248.89,406.18 L1251.14,406.18 L1251.14,388.14 L1253.38,388.14 L1253.38,390.47 L1255.63,390.47 L1255.63,393.87 L1257.88,393.87 L1257.88,389.61 L1260.12,389.61 L1260.12,397.19 L1262.37,397.19 L1262.37,401.82 L1264.61,401.82 L1264.61,391.78 L1266.86,391.78 L1266.86,396.40 L1269.10,396.40 L1269.10,397.27 L1271.35,397.27 L1271.35,399.90 L1273.59,399.90 L1273.59,389.92 L1275.84,389.92 L1275.84,396.95 L1278.08,396.95 L1278.08,417.32 L1280.33,417.32 L1280.33,386.82 L1282.57,386.82 L1282.57,384.30 L1284.82,384.30 L1284.82,391.63 L1287.06,391.63 L1287.06,391.58 L1289.31,391.58 L1289.31,396.47 L1291.55,396.47 L1291.55,396.64 L1293.80,396.64 L1293.80,394.80 L1296.04,394.80 L1296.04,401.45 L1298.29,401.45 L1298.29,396.81 L1300.53,396.81 L1300.53,386.09 L1302.78,386.09 L1302.78,381.03 L1305.02,381.03 L1305.02,371.16 L1307.27,371.16 L1307.27,390.20 L1309.51,390.20 L1309.51,394.26 L1311.76,394.26 L1311.76,383.54 L1314.00,383.54 L1314.00,387.00 L1316.25,387.00 L1316.25,386.68 L1318.49,386.68 L1318.49,378.05 L1320.74,378.05 L1320.74,396.35 L1322.98,396.35 L1322.98,396.82 L1325.23,396.82 L1325.23,396.32 L1327.47,396.32 L1327.47,387.58 L1329.72,387.58 L1329.72,399.60 L1331.96,399.60 L1331.96,393.70 L1334.20,393.70 L1334.20,393.90 L1336.45,393.90 L1336.45,381.81 L1338.69,381.81 L1338.69,379.35 L1340.94,379.35 L1340.94,375.41 L1343.18,375.41 L1343.18,394.20 L1345.43,394.20 L1345.43,394.66 L1347.67,394.66 L1347.67,367.73 L1349.92,367.73 L1349.92,388.74 L1352.16,388.74 L1352.16,387.63 L1354.41,387.63 L1354.41,395.73 L1356.65,395.73 L1356.65,379.49 L1358.90,379.49 L1358.90,381.36 L1361.14,381.36 L1361.14,395.17 L1363.39,395.17 L1363.39,404.87 L1365.63,404.87 L1365.63,408.79 L1367.88,408.79 L1367.88,387.92 L1370.12,387.92 L1370.12,409.98 L1372.37,409.98 L1372.37,392.30 L1374.62,392.30 L1374.62,386.07 L1376.86,386.07 L1376.86,391.37 L1379.11,391.37 L1379.11,396.21 L1381.35,396.21 L1381.35,409.14 L1383.60,409.14 L1383.60,379.10 L1385.84,379.10 L1385.84,399.67 L1388.09,399.67 L1388.09,397.01 L1390.33,397.01 L1390.33,388.97 L1392.58,388.97 L1392.58,392.18 L1394.82,392.18 L1394.82,401.71 L1397.07,401.71 L1397.07,385.62 L1399.31,385.62 L1399.31,379.28 L1401.56,379.28 L1401.56,386.36 L1403.80,386.36 L1403.80,400.62 L1406.05,400.62 L1406.05,382.05 L1408.29,382.05 L1408.29,378.88 L1410.54,378.88 L1410.54,382.93 L1412.78,382.93 L1412.78,385.49 L1415.03,385.49 L1415.03,405.76 L1417.27,405.76 L1417.27,389.78 L1419.52,389.78 L1419.52,386.41 L1421.76,386.41 L1421.76,381.25 L1424.01,381.25 L1424.01,390.62 L1426.25,390.62 L1426.25,406.98 L1428.49,406.98 L1428.49,403.66 L1430.74,403.66 L1430.74,409.93 L1432.99,409.93 L1432.99,372.07 L1435.23,372.07 L1435.23,385.80 L1437.47,385.80 L1437.47,392.79 L1439.72,392.79 L1439.72,405.65 L1441.96,405.65 L1441.96,394.20 L1444.21,394.20 L1444.21,376.91 L1446.45,376.91 L1446.45,367.73 L1448.70,367.73 L1448.70,377.61 L1450.94,377.61 L1450.94,391.68 L1453.19,391.68 L1453.19,397.90 L1455.43,397.90 L1455.43,382.61 L1457.68,382.61 L1457.68,381.34 L1459.92,381.34 L1459.92,387.22 L1462.17,387.22 L1462.17,390.92 L1464.41,390.92 L1464.41,401.82 L1466.66,401.82 L1466.66,386.07 L1468.90,386.07 L1468.90,381.97 L1471.15,381.97 L1471.15,386.42 L1473.39,386.42 L1473.39,396.68 L1475.64,396.68 L1475.64,370.91 L1477.88,370.91 L1477.88,391.42 L1480.13,391.42 L1480.13,372.68 L1482.38,372.68 L1482.38,395.46 L1484.62,395.46 L1484.62,377.62 L1486.87,377.62 L1486.87,387.04 L1489.11,387.04 L1489.11,396.26 L1491.36,396.26 L1491.36,388.35 L1493.60,388.35 L1493.60,389.35 L1495.85,389.35 L1495.85,398.33 L1498.09,398.33 L1498.09,386.32 L1500.34,386.32 L1500.34,383.36 L1502.58,383.36 L1502.58,369.29 L1504.83,369.29 L1504.83,396.70 L1507.07,396.70 L1507.07,387.87 L1509.32,387.87 L1509.32,394.06 L1511.56,394.06 L1511.56,402.03 L1513.81,402.03 L1513.81,383.38 L1516.05,383.38 L1516.05,400.61 L1518.30,400.61 L1518.30,391.99 L1520.54,391.99 L1520.54,386.99 L1522.79,386.99 L1522.79,404.35 L1525.03,404.35 L1525.03,398.39 L1527.28,398.39 L1527.28,390.05 L1529.52,390.05 L1529.52,374.94 L1531.76,374.94 L1531.76,385.36 L1534.01,385.36 L1534.01,399.62 L1536.26,399.62 L1536.26,386.69 L1538.50,386.69 L1538.50,390.66 L1540.74,390.66 L1540.74,396.16 L1542.99,396.16 L1542.99,375.89 L1545.24,375.89 L1545.24,380.03 L1547.48,380.03 L1547.48,384.75 L1549.72,384.75 L1549.72,387.38 L1551.97,387.38 L1551.97,413.63 L1554.21,413.63 L1554.21,389.59 L1556.46,389.59 L1556.46,378.90 L1558.70,378.90 L1558.70,383.80 L1560.95,383.80 L1560.95,393.40 L1563.19,393.40 L1563.19,398.81 L1565.44,398.81 L1565.44,399.42 L1567.68,399.42 L1567.68,409.28 L1569.93,409.28 L1569.93,391.27 L1572.17,391.27 L1572.17,405.91 L1574.42,405.91 L1574.42,395.81 L1576.66,395.81 L1576.66,394.45 L1578.91,394.45 L1578.91,397.92 L1581.15,397.92 L1581.15,380.86 L1583.40,380.86 L1583.40,396.70 L1585.64,396.70 L1585.64,387.29 L1587.89,387.29 L1587.89,383.78 L1590.13,383.78 L1590.13,370.99 L1592.38,370.99 L1592.38,391.35 L1594.62,391.35 L1594.62,395.53 L1596.87,395.53 L1596.87,372.03 L1599.12,372.03 L1599.12,391.54 L1601.36,391.54 L1601.36,393.66 L1603.61,393.66 L1603.61,391.36 L1605.85,391.36 L1605.85,402.62 L1608.10,402.62 L1608.10,393.93 L1610.34,393.93 L1610.34,389.85 L1612.59,389.85 L1612.59,399.85 L1614.83,399.85 L1614.83,387.29 L1617.08,387.29 L1617.08,389.66 L1619.32,389.66 L1619.32,394.93 L1621.57,394.93 L1621.57,399.58 L1623.81,399.58 L1623.81,393.52 L1626.06,393.52 L1626.06,402.12 L1628.30,402.12 L1628.30,362.30 L1224.20,362.30 Z" fill="rgb(140,128,56)"/><path d="M1224.20,409.84 L1226.44,409.84 L1226.44,411.21 L1228.69,411.21 L1228.69,393.35 L1230.93,393.35 L1230.93,406.42 L1233.18,406.42 L1233.18,413.42 L1235.42,413.42 L1235.42,408.42 L1237.67,408.42 L1237.67,398.02 L1239.91,398.02 L1239.91,403.13 L1242.16,403.13 L1242.16,406.17 L1244.40,406.17 L1244.40,417.29 L1246.65,417.29 L1246.65,411.21 L1248.89,411.21 L1248.89,415.12 L1251.14,415.12 L1251.14,402.45 L1253.38,402.45 L1253.38,408.93 L1255.63,408.93 L1255.63,398.86 L1257.88,398.86 L1257.88,408.62 L1260.12,408.62 L1260.12,414.89 L1262.37,414.89 L1262.37,418.95 L1264.61,418.95 L1264.61,404.39 L1266.86,404.39 L1266.86,409.88 L1269.10,409.88 L1269.10,400.75 L1271.35,400.75 L1271.35,414.37 L1273.59,414.37 L1273.59,402.74 L1275.84,402.74 L1275.84,410.23 L1278.08,410.23 L1278.08,424.94 L1280.33,424.94 L1280.33,405.34 L1282.57,405.34 L1282.57,397.15 L1284.82,397.15 L1284.82,405.09 L1287.06,405.09 L1287.06,404.18 L1289.31,404.18 L1289.31,412.47 L1291.55,412.47 L1291.55,409.54 L1293.80,409.54 L1293.80,404.31 L1296.04,404.31 L1296.04,415.57 L1298.29,415.57 L1298.29,406.66 L1300.53,406.66 L1300.53,397.35 L1302.78,397.35 L1302.78,395.89 L1305.02,395.89 L1305.02,393.84 L1307.27,393.84 L1307.27,405.89 L1309.51,405.89 L1309.51,402.72 L1311.76,402.72 L1311.76,401.97 L1314.00,401.97 L1314.00,406.19 L1316.25,406.19 L1316.25,406.53 L1318.49,406.53 L1318.49,395.03 L1320.74,395.03 L1320.74,404.57 L1322.98,404.57 L1322.98,406.13 L1325.23,406.13 L1325.23,405.34 L1327.47,405.34 L1327.47,394.28 L1329.72,394.28 L1329.72,404.74 L1331.96,404.74 L1331.96,405.10 L1334.20,405.10 L1334.20,405.03 L1336.45,405.03 L1336.45,389.17 L1338.69,389.17 L1338.69,393.40 L1340.94,393.40 L1340.94,400.58 L1343.18,400.58 L1343.18,399.74 L1345.43,399.74 L1345.43,404.39 L1347.67,404.39 L1347.67,391.81 L1349.92,391.81 L1349.92,396.11 L1352.16,396.11 L1352.16,400.10 L1354.41,400.10 L1354.41,405.17 L1356.65,405.17 L1356.65,400.92 L1358.90,400.92 L1358.90,401.26 L1361.14,401.26 L1361.14,401.90 L1363.39,401.90 L1363.39,417.48 L1365.63,417.48 L1365.63,418.07 L1367.88,418.07 L1367.88,403.59 L1370.12,403.59 L1370.12,418.26 L1372.37,418.26 L1372.37,401.67 L1374.62,401.67 L1374.62,395.80 L1376.86,395.80 L1376.86,396.59 L1379.11,396.59 L1379.11,399.43 L1381.35,399.43 L1381.35,411.83 L1383.60,411.83 L1383.60,395.56 L1385.84,395.56 L1385.84,404.10 L1388.09,404.10 L1388.09,413.59 L1390.33,413.59 L1390.33,403.15 L1392.58,403.15 L1392.58,407.58 L1394.82,407.58 L1394.82,412.02 L1397.07,412.02 L1397.07,400.20 L1399.31,400.20 L1399.31,406.43 L1401.56,406.43 L1401.56,399.25 L1403.80,399.25 L1403.80,413.39 L1406.05,413.39 L1406.05,398.28 L1408.29,398.28 L1408.29,403.34 L1410.54,403.34 L1410.54,399.61 L1412.78,399.61 L1412.78,400.12 L1415.03,400.12 L1415.03,412.93 L1417.27,412.93 L1417.27,391.53 L1419.52,391.53 L1419.52,397.61 L1421.76,397.61 L1421.76,409.16 L1424.01,409.16 L1424.01,406.05 L1426.25,406.05 L1426.25,414.96 L1428.49,414.96 L1428.49,416.68 L1430.74,416.68 L1430.74,411.58 L1432.99,411.58 L1432.99,400.56 L1435.23,400.56 L1435.23,392.40 L1437.47,392.40 L1437.47,400.42 L1439.72,400.42 L1439.72,419.16 L1441.96,419.16 L1441.96,408.45 L1444.21,408.45 L1444.21,396.06 L1446.45,396.06 L1446.45,381.31 L1448.70,381.31 L1448.70,390.83 L1450.94,390.83 L1450.94,405.45 L1453.19,405.45 L1453.19,411.19 L1455.43,411.19 L1455.43,403.80 L1457.68,403.80 L1457.68,388.74 L1459.92,388.74 L1459.92,398.10 L1462.17,398.10 L1462.17,406.80 L1464.41,406.80 L1464.41,404.83 L1466.66,404.83 L1466.66,394.03 L1468.90,394.03 L1468.90,405.49 L1471.15,405.49 L1471.15,401.35 L1473.39,401.35 L1473.39,408.88 L1475.64,408.88 L1475.64,398.67 L1477.88,398.67 L1477.88,402.19 L1480.13,402.19 L1480.13,396.21 L1482.38,396.21 L1482.38,415.07 L1484.62,415.07 L1484.62,391.12 L1486.87,391.12 L1486.87,412.09 L1489.11,412.09 L1489.11,399.50 L1491.36,399.50 L1491.36,394.09 L1493.60,394.09 L1493.60,400.14 L1495.85,400.14 L1495.85,410.56 L1498.09,410.56 L1498.09,404.95 L1500.34,404.95 L1500.34,395.40 L1502.58,395.40 L1502.58,389.93 L1504.83,389.93 L1504.83,404.75 L1507.07,404.75 L1507.07,402.88 L1509.32,402.88 L1509.32,405.99 L1511.56,405.99 L1511.56,406.25 L1513.81,406.25 L1513.81,417.86 L1516.05,417.86 L1516.05,409.66 L1518.30,409.66 L1518.30,404.39 L1520.54,404.39 L1520.54,405.01 L1522.79,405.01 L1522.79,417.28 L1525.03,417.28 L1525.03,402.42 L1527.28,402.42 L1527.28,401.72 L1529.52,401.72 L1529.52,394.99 L1531.76,394.99 L1531.76,403.42 L1534.01,403.42 L1534.01,402.78 L1536.26,402.78 L1536.26,407.90 L1538.50,407.90 L1538.50,403.95 L1540.74,403.95 L1540.74,408.25 L1542.99,408.25 L1542.99,396.33 L1545.24,396.33 L1545.24,403.16 L1547.48,403.16 L1547.48,403.84 L1549.72,403.84 L1549.72,407.20 L1551.97,407.20 L1551.97,414.25 L1554.21,414.25 L1554.21,395.01 L1556.46,395.01 L1556.46,396.29 L1558.70,396.29 L1558.70,398.56 L1560.95,398.56 L1560.95,411.15 L1563.19,411.15 L1563.19,413.73 L1565.44,413.73 L1565.44,406.82 L1567.68,406.82 L1567.68,420.92 L1569.93,420.92 L1569.93,414.00 L1572.17,414.00 L1572.17,416.40 L1574.42,416.40 L1574.42,400.49 L1576.66,400.49 L1576.66,410.92 L1578.91,410.92 L1578.91,412.86 L1581.15,412.86 L1581.15,393.61 L1583.40,393.61 L1583.40,405.10 L1585.64,405.10 L1585.64,396.08 L1587.89,396.08 L1587.89,395.35 L1590.13,395.35 L1590.13,393.52 L1592.38,393.52 L1592.38,396.69 L1594.62,396.69 L1594.62,400.46 L1596.87,400.46 L1596.87,394.64 L1599.12,394.64 L1599.12,403.32 L1601.36,403.32 L1601.36,408.40 L1603.61,408.40 L1603.61,398.98 L1605.85,398.98 L1605.85,406.98 L1608.10,406.98 L1608.10,407.84 L1610.34,407.84 L1610.34,404.83 L1612.59,404.83 L1612.59,403.72 L1614.83,403.72 L1614.83,396.88 L1617.08,396.88 L1617.08,404.32 L1619.32,404.32 L1619.32,409.07 L1621.57,409.07 L1621.57,403.74 L1623.81,403.74 L1623.81,405.22 L1626.06,405.22 L1626.06,417.02 L1628.30,417.02" fill="none" stroke="#B5CF7A" stroke-width="1" stroke-linejoin="miter"/><path d="M1224.20,407.46 L1226.44,407.46 L1226.44,398.38 L1228.69,398.38 L1228.69,384.99 L1230.93,384.99 L1230.93,382.37 L1233.18,382.37 L1233.18,398.96 L1235.42,398.96 L1235.42,384.41 L1237.67,384.41 L1237.67,393.72 L1239.91,393.72 L1239.91,386.75 L1242.16,386.75 L1242.16,373.95 L1244.40,373.95 L1244.40,405.90 L1246.65,405.90 L1246.65,397.84 L1248.89,397.84 L1248.89,409.59 L1251.14,409.59 L1251.14,390.03 L1253.38,390.03 L1253.38,392.41 L1255.63,392.41 L1255.63,394.53 L1257.88,394.53 L1257.88,392.58 L1260.12,392.58 L1260.12,402.09 L1262.37,402.09 L1262.37,403.78 L1264.61,403.78 L1264.61,392.49 L1266.86,392.49 L1266.86,399.17 L1269.10,399.17 L1269.10,399.01 L1271.35,399.01 L1271.35,400.13 L1273.59,400.13 L1273.59,390.62 L1275.84,390.62 L1275.84,398.48 L1278.08,398.48 L1278.08,423.15 L1280.33,423.15 L1280.33,386.96 L1282.57,386.96 L1282.57,386.16 L1284.82,386.16 L1284.82,392.61 L1287.06,392.61 L1287.06,394.88 L1289.31,394.88 L1289.31,399.33 L1291.55,399.33 L1291.55,398.64 L1293.80,398.64 L1293.80,397.00 L1296.04,397.00 L1296.04,403.88 L1298.29,403.88 L1298.29,399.56 L1300.53,399.56 L1300.53,387.27 L1302.78,387.27 L1302.78,383.04 L1305.02,383.04 L1305.02,374.39 L1307.27,374.39 L1307.27,392.26 L1309.51,392.26 L1309.51,398.14 L1311.76,398.14 L1311.76,388.69 L1314.00,388.69 L1314.00,387.85 L1316.25,387.85 L1316.25,387.47 L1318.49,387.47 L1318.49,379.87 L1320.74,379.87 L1320.74,399.41 L1322.98,399.41 L1322.98,398.81 L1325.23,398.81 L1325.23,397.74 L1327.47,397.74 L1327.47,388.46 L1329.72,388.46 L1329.72,401.42 L1331.96,401.42 L1331.96,396.53 L1334.20,396.53 L1334.20,398.87 L1336.45,398.87 L1336.45,384.19 L1338.69,384.19 L1338.69,383.44 L1340.94,383.44 L1340.94,375.80 L1343.18,375.80 L1343.18,394.42 L1345.43,394.42 L1345.43,398.70 L1347.67,398.70 L1347.67,370.98 L1349.92,370.98 L1349.92,389.65 L1352.16,389.65 L1352.16,389.48 L1354.41,389.48 L1354.41,399.09 L1356.65,399.09 L1356.65,385.22 L1358.90,385.22 L1358.90,382.63 L1361.14,382.63 L1361.14,396.11 L1363.39,396.11 L1363.39,409.29 L1365.63,409.29 L1365.63,411.08 L1367.88,411.08 L1367.88,388.07 L1370.12,388.07 L1370.12,410.88 L1372.37,410.88 L1372.37,392.93 L1374.62,392.93 L1374.62,387.18 L1376.86,387.18 L1376.86,391.62 L1379.11,391.62 L1379.11,396.24 L1381.35,396.24 L1381.35,409.68 L1383.60,409.68 L1383.60,380.51 L1385.84,380.51 L1385.84,400.29 L1388.09,400.29 L1388.09,401.58 L1390.33,401.58 L1390.33,391.35 L1392.58,391.35 L1392.58,394.26 L1394.82,394.26 L1394.82,401.93 L1397.07,401.93 L1397.07,388.89 L1399.31,388.89 L1399.31,380.11 L1401.56,380.11 L1401.56,386.66 L1403.80,386.66 L1403.80,401.28 L1406.05,401.28 L1406.05,384.81 L1408.29,384.81 L1408.29,381.53 L1410.54,381.53 L1410.54,384.43 L1412.78,384.43 L1412.78,387.71 L1415.03,387.71 L1415.03,409.34 L1417.27,409.34 L1417.27,389.78 L1419.52,389.78 L1419.52,389.70 L1421.76,389.70 L1421.76,384.15 L1424.01,384.15 L1424.01,392.97 L1426.25,392.97 L1426.25,408.84 L1428.49,408.84 L1428.49,406.42 L1430.74,406.42 L1430.74,410.75 L1432.99,410.75 L1432.99,372.14 L1435.23,372.14 L1435.23,388.61 L1437.47,388.61 L1437.47,395.09 L1439.72,395.09 L1439.72,408.44 L1441.96,408.44 L1441.96,395.82 L1444.21,395.82 L1444.21,378.39 L1446.45,378.39 L1446.45,370.98 L1448.70,370.98 L1448.70,379.33 L1450.94,379.33 L1450.94,392.56 L1453.19,392.56 L1453.19,399.73 L1455.43,399.73 L1455.43,386.99 L1457.68,386.99 L1457.68,385.82 L1459.92,385.82 L1459.92,387.33 L1462.17,387.33 L1462.17,392.36 L1464.41,392.36 L1464.41,402.28 L1466.66,402.28 L1466.66,386.29 L1468.90,386.29 L1468.90,384.28 L1471.15,384.28 L1471.15,389.04 L1473.39,389.04 L1473.39,399.99 L1475.64,399.99 L1475.64,372.22 L1477.88,372.22 L1477.88,394.49 L1480.13,394.49 L1480.13,378.02 L1482.38,378.02 L1482.38,399.29 L1484.62,399.29 L1484.62,379.54 L1486.87,379.54 L1486.87,389.88 L1489.11,389.88 L1489.11,396.79 L1491.36,396.79 L1491.36,391.49 L1493.60,391.49 L1493.60,391.97 L1495.85,391.97 L1495.85,401.69 L1498.09,401.69 L1498.09,387.90 L1500.34,387.90 L1500.34,386.18 L1502.58,386.18 L1502.58,370.98 L1504.83,370.98 L1504.83,400.21 L1507.07,400.21 L1507.07,388.85 L1509.32,388.85 L1509.32,395.85 L1511.56,395.85 L1511.56,402.48 L1513.81,402.48 L1513.81,384.06 L1516.05,384.06 L1516.05,400.73 L1518.30,400.73 L1518.30,397.44 L1520.54,397.44 L1520.54,387.28 L1522.79,387.28 L1522.79,405.98 L1525.03,405.98 L1525.03,401.36 L1527.28,401.36 L1527.28,390.73 L1529.52,390.73 L1529.52,376.68 L1531.76,376.68 L1531.76,385.89 L1534.01,385.89 L1534.01,401.57 L1536.26,401.57 L1536.26,389.73 L1538.50,389.73 L1538.50,393.11 L1540.74,393.11 L1540.74,397.58 L1542.99,397.58 L1542.99,376.25 L1545.24,376.25 L1545.24,383.00 L1547.48,383.00 L1547.48,387.31 L1549.72,387.31 L1549.72,388.22 L1551.97,388.22 L1551.97,413.91 L1554.21,413.91 L1554.21,390.30 L1556.46,390.30 L1556.46,381.63 L1558.70,381.63 L1558.70,385.16 L1560.95,385.16 L1560.95,393.95 L1563.19,393.95 L1563.19,404.48 L1565.44,404.48 L1565.44,399.89 L1567.68,399.89 L1567.68,413.02 L1569.93,413.02 L1569.93,393.84 L1572.17,393.84 L1572.17,408.77 L1574.42,408.77 L1574.42,397.14 L1576.66,397.14 L1576.66,396.21 L1578.91,396.21 L1578.91,400.93 L1581.15,400.93 L1581.15,381.19 L1583.40,381.19 L1583.40,398.93 L1585.64,398.93 L1585.64,389.31 L1587.89,389.31 L1587.89,385.00 L1590.13,385.00 L1590.13,374.45 L1592.38,374.45 L1592.38,392.33 L1594.62,392.33 L1594.62,397.69 L1596.87,397.69 L1596.87,373.37 L1599.12,373.37 L1599.12,391.96 L1601.36,391.96 L1601.36,394.29 L1603.61,394.29 L1603.61,392.27 L1605.85,392.27 L1605.85,403.19 L1608.10,403.19 L1608.10,398.63 L1610.34,398.63 L1610.34,391.13 L1612.59,391.13 L1612.59,401.58 L1614.83,401.58 L1614.83,388.03 L1617.08,388.03 L1617.08,395.35 L1619.32,395.35 L1619.32,395.27 L1621.57,395.27 L1621.57,399.76 L1623.81,399.76 L1623.81,394.70 L1626.06,394.70 L1626.06,404.98 L1628.30,404.98" fill="none" stroke="#8AB8FF" stroke-width="1" stroke-linejoin="miter"/><path d="M1224.20,407.09 L1226.44,407.09 L1226.44,394.32 L1228.69,394.32 L1228.69,380.94 L1230.93,380.94 L1230.93,378.74 L1233.18,378.74 L1233.18,398.23 L1235.42,398.23 L1235.42,381.00 L1237.67,381.00 L1237.67,392.54 L1239.91,392.54 L1239.91,384.93 L1242.16,384.93 L1242.16,372.25 L1244.40,372.25 L1244.40,403.46 L1246.65,403.46 L1246.65,397.19 L1248.89,397.19 L1248.89,406.18 L1251.14,406.18 L1251.14,388.14 L1253.38,388.14 L1253.38,390.47 L1255.63,390.47 L1255.63,393.87 L1257.88,393.87 L1257.88,389.61 L1260.12,389.61 L1260.12,397.19 L1262.37,397.19 L1262.37,401.82 L1264.61,401.82 L1264.61,391.78 L1266.86,391.78 L1266.86,396.40 L1269.10,396.40 L1269.10,397.27 L1271.35,397.27 L1271.35,399.90 L1273.59,399.90 L1273.59,389.92 L1275.84,389.92 L1275.84,396.95 L1278.08,396.95 L1278.08,417.32 L1280.33,417.32 L1280.33,386.82 L1282.57,386.82 L1282.57,384.30 L1284.82,384.30 L1284.82,391.63 L1287.06,391.63 L1287.06,391.58 L1289.31,391.58 L1289.31,396.47 L1291.55,396.47 L1291.55,396.64 L1293.80,396.64 L1293.80,394.80 L1296.04,394.80 L1296.04,401.45 L1298.29,401.45 L1298.29,396.81 L1300.53,396.81 L1300.53,386.09 L1302.78,386.09 L1302.78,381.03 L1305.02,381.03 L1305.02,371.16 L1307.27,371.16 L1307.27,390.20 L1309.51,390.20 L1309.51,394.26 L1311.76,394.26 L1311.76,383.54 L1314.00,383.54 L1314.00,387.00 L1316.25,387.00 L1316.25,386.68 L1318.49,386.68 L1318.49,378.05 L1320.74,378.05 L1320.74,396.35 L1322.98,396.35 L1322.98,396.82 L1325.23,396.82 L1325.23,396.32 L1327.47,396.32 L1327.47,387.58 L1329.72,387.58 L1329.72,399.60 L1331.96,399.60 L1331.96,393.70 L1334.20,393.70 L1334.20,393.90 L1336.45,393.90 L1336.45,381.81 L1338.69,381.81 L1338.69,379.35 L1340.94,379.35 L1340.94,375.41 L1343.18,375.41 L1343.18,394.20 L1345.43,394.20 L1345.43,394.66 L1347.67,394.66 L1347.67,367.73 L1349.92,367.73 L1349.92,388.74 L1352.16,388.74 L1352.16,387.63 L1354.41,387.63 L1354.41,395.73 L1356.65,395.73 L1356.65,379.49 L1358.90,379.49 L1358.90,381.36 L1361.14,381.36 L1361.14,395.17 L1363.39,395.17 L1363.39,404.87 L1365.63,404.87 L1365.63,408.79 L1367.88,408.79 L1367.88,387.92 L1370.12,387.92 L1370.12,409.98 L1372.37,409.98 L1372.37,392.30 L1374.62,392.30 L1374.62,386.07 L1376.86,386.07 L1376.86,391.37 L1379.11,391.37 L1379.11,396.21 L1381.35,396.21 L1381.35,409.14 L1383.60,409.14 L1383.60,379.10 L1385.84,379.10 L1385.84,399.67 L1388.09,399.67 L1388.09,397.01 L1390.33,397.01 L1390.33,388.97 L1392.58,388.97 L1392.58,392.18 L1394.82,392.18 L1394.82,401.71 L1397.07,401.71 L1397.07,385.62 L1399.31,385.62 L1399.31,379.28 L1401.56,379.28 L1401.56,386.36 L1403.80,386.36 L1403.80,400.62 L1406.05,400.62 L1406.05,382.05 L1408.29,382.05 L1408.29,378.88 L1410.54,378.88 L1410.54,382.93 L1412.78,382.93 L1412.78,385.49 L1415.03,385.49 L1415.03,405.76 L1417.27,405.76 L1417.27,389.78 L1419.52,389.78 L1419.52,386.41 L1421.76,386.41 L1421.76,381.25 L1424.01,381.25 L1424.01,390.62 L1426.25,390.62 L1426.25,406.98 L1428.49,406.98 L1428.49,403.66 L1430.74,403.66 L1430.74,409.93 L1432.99,409.93 L1432.99,372.07 L1435.23,372.07 L1435.23,385.80 L1437.47,385.80 L1437.47,392.79 L1439.72,392.79 L1439.72,405.65 L1441.96,405.65 L1441.96,394.20 L1444.21,394.20 L1444.21,376.91 L1446.45,376.91 L1446.45,367.73 L1448.70,367.73 L1448.70,377.61 L1450.94,377.61 L1450.94,391.68 L1453.19,391.68 L1453.19,397.90 L1455.43,397.90 L1455.43,382.61 L1457.68,382.61 L1457.68,381.34 L1459.92,381.34 L1459.92,387.22 L1462.17,387.22 L1462.17,390.92 L1464.41,390.92 L1464.41,401.82 L1466.66,401.82 L1466.66,386.07 L1468.90,386.07 L1468.90,381.97 L1471.15,381.97 L1471.15,386.42 L1473.39,386.42 L1473.39,396.68 L1475.64,396.68 L1475.64,370.91 L1477.88,370.91 L1477.88,391.42 L1480.13,391.42 L1480.13,372.68 L1482.38,372.68 L1482.38,395.46 L1484.62,395.46 L1484.62,377.62 L1486.87,377.62 L1486.87,387.04 L1489.11,387.04 L1489.11,396.26 L1491.36,396.26 L1491.36,388.35 L1493.60,388.35 L1493.60,389.35 L1495.85,389.35 L1495.85,398.33 L1498.09,398.33 L1498.09,386.32 L1500.34,386.32 L1500.34,383.36 L1502.58,383.36 L1502.58,369.29 L1504.83,369.29 L1504.83,396.70 L1507.07,396.70 L1507.07,387.87 L1509.32,387.87 L1509.32,394.06 L1511.56,394.06 L1511.56,402.03 L1513.81,402.03 L1513.81,383.38 L1516.05,383.38 L1516.05,400.61 L1518.30,400.61 L1518.30,391.99 L1520.54,391.99 L1520.54,386.99 L1522.79,386.99 L1522.79,404.35 L1525.03,404.35 L1525.03,398.39 L1527.28,398.39 L1527.28,390.05 L1529.52,390.05 L1529.52,374.94 L1531.76,374.94 L1531.76,385.36 L1534.01,385.36 L1534.01,399.62 L1536.26,399.62 L1536.26,386.69 L1538.50,386.69 L1538.50,390.66 L1540.74,390.66 L1540.74,396.16 L1542.99,396.16 L1542.99,375.89 L1545.24,375.89 L1545.24,380.03 L1547.48,380.03 L1547.48,384.75 L1549.72,384.75 L1549.72,387.38 L1551.97,387.38 L1551.97,413.63 L1554.21,413.63 L1554.21,389.59 L1556.46,389.59 L1556.46,378.90 L1558.70,378.90 L1558.70,383.80 L1560.95,383.80 L1560.95,393.40 L1563.19,393.40 L1563.19,398.81 L1565.44,398.81 L1565.44,399.42 L1567.68,399.42 L1567.68,409.28 L1569.93,409.28 L1569.93,391.27 L1572.17,391.27 L1572.17,405.91 L1574.42,405.91 L1574.42,395.81 L1576.66,395.81 L1576.66,394.45 L1578.91,394.45 L1578.91,397.92 L1581.15,397.92 L1581.15,380.86 L1583.40,380.86 L1583.40,396.70 L1585.64,396.70 L1585.64,387.29 L1587.89,387.29 L1587.89,383.78 L1590.13,383.78 L1590.13,370.99 L1592.38,370.99 L1592.38,391.35 L1594.62,391.35 L1594.62,395.53 L1596.87,395.53 L1596.87,372.03 L1599.12,372.03 L1599.12,391.54 L1601.36,391.54 L1601.36,393.66 L1603.61,393.66 L1603.61,391.36 L1605.85,391.36 L1605.85,402.62 L1608.10,402.62 L1608.10,393.93 L1610.34,393.93 L1610.34,389.85 L1612.59,389.85 L1612.59,399.85 L1614.83,399.85 L1614.83,387.29 L1617.08,387.29 L1617.08,389.66 L1619.32,389.66 L1619.32,394.93 L1621.57,394.93 L1621.57,399.58 L1623.81,399.58 L1623.81,393.52 L1626.06,393.52 L1626.06,402.12 L1628.30,402.12" fill="none" stroke="#F86A4A" stroke-width="1" stroke-linejoin="miter"/><rect x="1224.2" y="361.8" width="404.0999999999999" height="1" fill="#d9a0a0"/><path d="M1224.20,578.80 L1226.44,578.80 L1226.44,578.80 L1228.69,578.80 L1228.69,578.80 L1230.93,578.80 L1230.93,578.80 L1233.18,578.80 L1233.18,578.80 L1235.42,578.80 L1235.42,578.80 L1237.67,578.80 L1237.67,578.80 L1239.91,578.80 L1239.91,578.80 L1242.16,578.80 L1242.16,578.80 L1244.40,578.80 L1244.40,578.80 L1246.65,578.80 L1246.65,578.80 L1248.89,578.80 L1248.89,578.80 L1251.14,578.80 L1251.14,578.80 L1253.38,578.80 L1253.38,578.80 L1255.63,578.80 L1255.63,578.80 L1257.88,578.80 L1257.88,578.80 L1260.12,578.80 L1260.12,578.80 L1262.37,578.80 L1262.37,578.80 L1264.61,578.80 L1264.61,578.80 L1266.86,578.80 L1266.86,578.80 L1269.10,578.80 L1269.10,578.80 L1271.35,578.80 L1271.35,578.80 L1273.59,578.80 L1273.59,578.80 L1275.84,578.80 L1275.84,578.80 L1278.08,578.80 L1278.08,578.80 L1280.33,578.80 L1280.33,578.80 L1282.57,578.80 L1282.57,578.80 L1284.82,578.80 L1284.82,578.80 L1287.06,578.80 L1287.06,578.80 L1289.31,578.80 L1289.31,578.80 L1291.55,578.80 L1291.55,578.80 L1293.80,578.80 L1293.80,578.80 L1296.04,578.80 L1296.04,578.80 L1298.29,578.80 L1298.29,576.30 L1300.53,576.30 L1300.53,578.80 L1302.78,578.80 L1302.78,578.80 L1305.02,578.80 L1305.02,578.80 L1307.27,578.80 L1307.27,578.80 L1309.51,578.80 L1309.51,578.80 L1311.76,578.80 L1311.76,578.80 L1314.00,578.80 L1314.00,578.80 L1316.25,578.80 L1316.25,578.80 L1318.49,578.80 L1318.49,578.80 L1320.74,578.80 L1320.74,578.80 L1322.98,578.80 L1322.98,578.80 L1325.23,578.80 L1325.23,578.80 L1327.47,578.80 L1327.47,578.80 L1329.72,578.80 L1329.72,578.80 L1331.96,578.80 L1331.96,578.80 L1334.20,578.80 L1334.20,578.80 L1336.45,578.80 L1336.45,576.30 L1338.69,576.30 L1338.69,578.80 L1340.94,578.80 L1340.94,578.80 L1343.18,578.80 L1343.18,578.80 L1345.43,578.80 L1345.43,578.80 L1347.67,578.80 L1347.67,578.80 L1349.92,578.80 L1349.92,578.80 L1352.16,578.80 L1352.16,578.80 L1354.41,578.80 L1354.41,578.80 L1356.65,578.80 L1356.65,578.80 L1358.90,578.80 L1358.90,578.80 L1361.14,578.80 L1361.14,578.80 L1363.39,578.80 L1363.39,578.80 L1365.63,578.80 L1365.63,578.80 L1367.88,578.80 L1367.88,578.80 L1370.12,578.80 L1370.12,578.80 L1372.37,578.80 L1372.37,578.80 L1374.62,578.80 L1374.62,578.80 L1376.86,578.80 L1376.86,578.80 L1379.11,578.80 L1379.11,578.80 L1381.35,578.80 L1381.35,578.80 L1383.60,578.80 L1383.60,578.80 L1385.84,578.80 L1385.84,578.80 L1388.09,578.80 L1388.09,578.80 L1390.33,578.80 L1390.33,578.80 L1392.58,578.80 L1392.58,578.80 L1394.82,578.80 L1394.82,578.80 L1397.07,578.80 L1397.07,578.80 L1399.31,578.80 L1399.31,578.80 L1401.56,578.80 L1401.56,578.80 L1403.80,578.80 L1403.80,578.80 L1406.05,578.80 L1406.05,578.80 L1408.29,578.80 L1408.29,578.80 L1410.54,578.80 L1410.54,578.80 L1412.78,578.80 L1412.78,576.30 L1415.03,576.30 L1415.03,578.80 L1417.27,578.80 L1417.27,578.80 L1419.52,578.80 L1419.52,578.80 L1421.76,578.80 L1421.76,576.30 L1424.01,576.30 L1424.01,578.80 L1426.25,578.80 L1426.25,578.80 L1428.49,578.80 L1428.49,578.80 L1430.74,578.80 L1430.74,578.80 L1432.99,578.80 L1432.99,578.80 L1435.23,578.80 L1435.23,578.80 L1437.47,578.80 L1437.47,578.80 L1439.72,578.80 L1439.72,578.80 L1441.96,578.80 L1441.96,578.80 L1444.21,578.80 L1444.21,578.80 L1446.45,578.80 L1446.45,578.80 L1448.70,578.80 L1448.70,578.80 L1450.94,578.80 L1450.94,578.80 L1453.19,578.80 L1453.19,578.80 L1455.43,578.80 L1455.43,578.80 L1457.68,578.80 L1457.68,578.80 L1459.92,578.80 L1459.92,578.80 L1462.17,578.80 L1462.17,578.80 L1464.41,578.80 L1464.41,578.80 L1466.66,578.80 L1466.66,578.80 L1468.90,578.80 L1468.90,578.80 L1471.15,578.80 L1471.15,578.80 L1473.39,578.80 L1473.39,578.80 L1475.64,578.80 L1475.64,578.80 L1477.88,578.80 L1477.88,578.80 L1480.13,578.80 L1480.13,578.80 L1482.38,578.80 L1482.38,578.80 L1484.62,578.80 L1484.62,578.80 L1486.87,578.80 L1486.87,578.80 L1489.11,578.80 L1489.11,578.80 L1491.36,578.80 L1491.36,578.80 L1493.60,578.80 L1493.60,578.80 L1495.85,578.80 L1495.85,578.80 L1498.09,578.80 L1498.09,578.80 L1500.34,578.80 L1500.34,578.80 L1502.58,578.80 L1502.58,578.80 L1504.83,578.80 L1504.83,578.80 L1507.07,578.80 L1507.07,578.80 L1509.32,578.80 L1509.32,578.80 L1511.56,578.80 L1511.56,578.80 L1513.81,578.80 L1513.81,578.80 L1516.05,578.80 L1516.05,578.80 L1518.30,578.80 L1518.30,578.80 L1520.54,578.80 L1520.54,578.80 L1522.79,578.80 L1522.79,578.80 L1525.03,578.80 L1525.03,578.80 L1527.28,578.80 L1527.28,578.80 L1529.52,578.80 L1529.52,578.80 L1531.76,578.80 L1531.76,578.80 L1534.01,578.80 L1534.01,578.80 L1536.26,578.80 L1536.26,578.80 L1538.50,578.80 L1538.50,578.80 L1540.74,578.80 L1540.74,578.80 L1542.99,578.80 L1542.99,578.80 L1545.24,578.80 L1545.24,578.80 L1547.48,578.80 L1547.48,578.80 L1549.72,578.80 L1549.72,578.80 L1551.97,578.80 L1551.97,578.80 L1554.21,578.80 L1554.21,578.80 L1556.46,578.80 L1556.46,578.80 L1558.70,578.80 L1558.70,578.80 L1560.95,578.80 L1560.95,576.30 L1563.19,576.30 L1563.19,578.80 L1565.44,578.80 L1565.44,578.80 L1567.68,578.80 L1567.68,578.80 L1569.93,578.80 L1569.93,576.30 L1572.17,576.30 L1572.17,578.80 L1574.42,578.80 L1574.42,578.80 L1576.66,578.80 L1576.66,578.80 L1578.91,578.80 L1578.91,578.80 L1581.15,578.80 L1581.15,578.80 L1583.40,578.80 L1583.40,578.80 L1585.64,578.80 L1585.64,578.80 L1587.89,578.80 L1587.89,576.30 L1590.13,576.30 L1590.13,578.80 L1592.38,578.80 L1592.38,578.80 L1594.62,578.80 L1594.62,578.80 L1596.87,578.80 L1596.87,578.80 L1599.12,578.80 L1599.12,578.80 L1601.36,578.80 L1601.36,578.80 L1603.61,578.80 L1603.61,578.80 L1605.85,578.80 L1605.85,578.80 L1608.10,578.80 L1608.10,578.80 L1610.34,578.80 L1610.34,578.80 L1612.59,578.80 L1612.59,578.80 L1614.83,578.80 L1614.83,578.80 L1617.08,578.80 L1617.08,578.80 L1619.32,578.80 L1619.32,578.80 L1621.57,578.80 L1621.57,578.80 L1623.81,578.80 L1623.81,578.80 L1626.06,578.80 L1626.06,578.80 L1628.30,578.80" fill="none" stroke="#FF9830" stroke-width="1.5" stroke-linejoin="miter"/><rect x="1237.7" y="362.3" width="3" height="2.5" fill="#7D5FA5"/><rect x="1251.1" y="362.3" width="3" height="2.5" fill="#7D5FA5"/><rect x="1269.7" y="362.3" width="3" height="2.5" fill="#7D5FA5"/><rect x="1274.7" y="362.3" width="3" height="2.5" fill="#7D5FA5"/><rect x="1286.5" y="362.3" width="3" height="2.5" fill="#7D5FA5"/><rect x="1355.5" y="362.3" width="3" height="2.5" fill="#7D5FA5"/><rect x="1384.2" y="362.3" width="3" height="2.5" fill="#7D5FA5"/><rect x="1448.1" y="362.3" width="3" height="2.5" fill="#7D5FA5"/><rect x="1476.8" y="362.3" width="3" height="2.5" fill="#7D5FA5"/><rect x="1532.3" y="362.3" width="3" height="2.5" fill="#7D5FA5"/><rect x="1577.8" y="362.3" width="3" height="2.5" fill="#7D5FA5"/><rect x="1609.8" y="362.3" width="3" height="2.5" fill="#7D5FA5"/><rect x="1616.5" y="362.3" width="3" height="2.5" fill="#7D5FA5"/><rect x="78" y="705" width="1" height="110" fill="rgba(240,250,255,0.09)"/><rect x="139" y="705" width="1" height="110" fill="rgba(240,250,255,0.09)"/><rect x="199" y="705" width="1" height="110" fill="rgba(240,250,255,0.09)"/><rect x="259" y="705" width="1" height="110" fill="rgba(240,250,255,0.09)"/><rect x="319" y="705" width="1" height="110" fill="rgba(240,250,255,0.09)"/><rect x="379" y="705" width="1" height="110" fill="rgba(240,250,255,0.09)"/><rect x="72" y="756" width="365" height="1" fill="rgba(240,250,255,0.09)"/><path d="M76.50,721.75 L78.49,721.75 L78.49,723.52 L80.49,723.52 L80.49,723.83 L82.48,723.83 L82.48,724.25 L84.48,724.25 L84.48,723.99 L86.47,723.99 L86.47,723.87 L88.47,723.87 L88.47,721.75 L90.46,721.75 L90.46,718.74 L92.46,718.74 L92.46,718.21 L94.45,718.21 L94.45,724.73 L96.44,724.73 L96.44,718.21 L98.44,718.21 L98.44,718.65 L100.43,718.65 L100.43,724.60 L102.43,724.60 L102.43,723.83 L104.42,723.83 L104.42,724.70 L106.42,724.70 L106.42,723.93 L108.41,723.93 L108.41,724.52 L110.41,724.52 L110.41,723.62 L112.40,723.62 L112.40,724.57 L114.39,724.57 L114.39,724.22 L116.39,724.22 L116.39,724.10 L118.38,724.10 L118.38,720.72 L120.38,720.72 L120.38,723.78 L122.37,723.78 L122.37,723.76 L124.37,723.76 L124.37,723.57 L126.36,723.57 L126.36,722.35 L128.36,722.35 L128.36,724.72 L130.35,724.72 L130.35,723.58 L132.34,723.58 L132.34,724.62 L134.34,724.62 L134.34,724.60 L136.33,724.60 L136.33,723.88 L138.33,723.88 L138.33,723.94 L140.32,723.94 L140.32,723.61 L142.32,723.61 L142.32,724.44 L144.31,724.44 L144.31,723.77 L146.31,723.77 L146.31,724.21 L148.30,724.21 L148.30,720.71 L150.29,720.71 L150.29,717.53 L152.29,717.53 L152.29,724.33 L154.28,724.33 L154.28,724.25 L156.28,724.25 L156.28,723.75 L158.27,723.75 L158.27,722.68 L160.27,722.68 L160.27,724.53 L162.26,724.53 L162.26,720.10 L164.26,720.10 L164.26,724.56 L166.25,724.56 L166.25,724.46 L168.24,724.46 L168.24,724.61 L170.24,724.61 L170.24,723.96 L172.23,723.96 L172.23,724.02 L174.23,724.02 L174.23,723.45 L176.22,723.45 L176.22,718.95 L178.22,718.95 L178.22,723.49 L180.21,723.49 L180.21,724.07 L182.21,724.07 L182.21,724.53 L184.20,724.53 L184.20,719.41 L186.19,719.41 L186.19,723.96 L188.19,723.96 L188.19,723.84 L190.18,723.84 L190.18,723.53 L192.18,723.53 L192.18,724.57 L194.17,724.57 L194.17,723.94 L196.17,723.94 L196.17,718.89 L198.16,718.89 L198.16,724.36 L200.16,724.36 L200.16,719.59 L202.15,719.59 L202.15,721.37 L204.14,721.37 L204.14,719.91 L206.14,719.91 L206.14,723.49 L208.13,723.49 L208.13,724.70 L210.13,724.70 L210.13,723.79 L212.12,723.79 L212.12,724.74 L214.12,724.74 L214.12,724.51 L216.11,724.51 L216.11,724.33 L218.11,724.33 L218.11,724.54 L220.10,724.54 L220.10,724.47 L222.09,724.47 L222.09,719.03 L224.09,719.03 L224.09,718.13 L226.08,718.13 L226.08,718.78 L228.08,718.78 L228.08,723.78 L230.07,723.78 L230.07,724.52 L232.07,724.52 L232.07,723.97 L234.06,723.97 L234.06,724.10 L236.06,724.10 L236.06,721.21 L238.05,721.21 L238.05,724.11 L240.04,724.11 L240.04,723.68 L242.04,723.68 L242.04,724.17 L244.03,724.17 L244.03,724.63 L246.03,724.63 L246.03,724.68 L248.02,724.68 L248.02,723.41 L250.02,723.41 L250.02,723.75 L252.01,723.75 L252.01,720.12 L254.01,720.12 L254.01,724.29 L256.00,724.29 L256.00,722.43 L257.99,722.43 L257.99,723.62 L259.99,723.62 L259.99,723.54 L261.98,723.54 L261.98,717.30 L263.98,717.30 L263.98,723.44 L265.97,723.44 L265.97,723.83 L267.97,723.83 L267.97,723.52 L269.96,723.52 L269.96,724.40 L271.96,724.40 L271.96,723.71 L273.95,723.71 L273.95,724.54 L275.94,724.54 L275.94,724.13 L277.94,724.13 L277.94,723.56 L279.93,723.56 L279.93,724.43 L281.93,724.43 L281.93,718.81 L283.92,718.81 L283.92,717.67 L285.92,717.67 L285.92,723.74 L287.91,723.74 L287.91,724.51 L289.91,724.51 L289.91,718.31 L291.90,718.31 L291.90,718.37 L293.89,718.37 L293.89,723.41 L295.89,723.41 L295.89,724.22 L297.88,724.22 L297.88,718.74 L299.88,718.74 L299.88,724.45 L301.87,724.45 L301.87,724.21 L303.87,724.21 L303.87,724.16 L305.86,724.16 L305.86,721.54 L307.86,721.54 L307.86,720.44 L309.85,720.44 L309.85,724.65 L311.84,724.65 L311.84,723.46 L313.84,723.46 L313.84,723.92 L315.83,723.92 L315.83,723.78 L317.83,723.78 L317.83,717.87 L319.82,717.87 L319.82,723.55 L321.82,723.55 L321.82,723.83 L323.81,723.83 L323.81,723.46 L325.81,723.46 L325.81,717.16 L327.80,717.16 L327.80,724.00 L329.79,724.00 L329.79,722.37 L331.79,722.37 L331.79,723.93 L333.78,723.93 L333.78,724.66 L335.78,724.66 L335.78,723.54 L337.77,723.54 L337.77,724.04 L339.77,724.04 L339.77,724.13 L341.76,724.13 L341.76,723.47 L343.76,723.47 L343.76,723.55 L345.75,723.55 L345.75,724.08 L347.74,724.08 L347.74,717.62 L349.74,717.62 L349.74,720.21 L351.73,720.21 L351.73,724.65 L353.73,724.65 L353.73,724.55 L355.72,724.55 L355.72,724.66 L357.72,724.66 L357.72,724.41 L359.71,724.41 L359.71,723.68 L361.71,723.68 L361.71,724.54 L363.70,724.54 L363.70,724.57 L365.69,724.57 L365.69,724.76 L367.69,724.76 L367.69,724.66 L369.68,724.66 L369.68,723.50 L371.68,723.50 L371.68,717.12 L373.67,717.12 L373.67,724.28 L375.67,724.28 L375.67,718.01 L377.66,718.01 L377.66,719.73 L379.66,719.73 L379.66,721.26 L381.65,721.26 L381.65,724.66 L383.64,724.66 L383.64,724.21 L385.64,724.21 L385.64,724.12 L387.63,724.12 L387.63,724.25 L389.63,724.25 L389.63,720.61 L391.62,720.61 L391.62,724.38 L393.62,724.38 L393.62,723.60 L395.61,723.60 L395.61,723.66 L397.61,723.66 L397.61,724.46 L399.60,724.46 L399.60,721.63 L401.59,721.63 L401.59,724.45 L403.59,724.45 L403.59,723.49 L405.58,723.49 L405.58,723.54 L407.58,723.54 L407.58,723.75 L409.57,723.75 L409.57,723.96 L411.57,723.96 L411.57,723.96 L413.56,723.96 L413.56,720.59 L415.56,720.59 L415.56,717.63 L417.55,717.63 L417.55,724.75 L419.54,724.75 L419.54,724.44 L421.54,724.44 L421.54,723.63 L423.53,723.63 L423.53,724.23 L425.53,724.23 L425.53,719.85 L427.52,719.85 L427.52,724.18 L429.52,724.18 L429.52,724.36 L431.51,724.36 L431.51,724.52 L433.51,724.52 L433.51,720.57 L435.50,720.57 L435.50,811.20 L76.50,811.20 Z" fill="#73BF69" fill-opacity="0.65"/><path d="M76.50,721.75 L78.49,721.75 L78.49,723.52 L80.49,723.52 L80.49,723.83 L82.48,723.83 L82.48,724.25 L84.48,724.25 L84.48,723.99 L86.47,723.99 L86.47,723.87 L88.47,723.87 L88.47,721.75 L90.46,721.75 L90.46,718.74 L92.46,718.74 L92.46,718.21 L94.45,718.21 L94.45,724.73 L96.44,724.73 L96.44,718.21 L98.44,718.21 L98.44,718.65 L100.43,718.65 L100.43,724.60 L102.43,724.60 L102.43,723.83 L104.42,723.83 L104.42,724.70 L106.42,724.70 L106.42,723.93 L108.41,723.93 L108.41,724.52 L110.41,724.52 L110.41,723.62 L112.40,723.62 L112.40,724.57 L114.39,724.57 L114.39,724.22 L116.39,724.22 L116.39,724.10 L118.38,724.10 L118.38,720.72 L120.38,720.72 L120.38,723.78 L122.37,723.78 L122.37,723.76 L124.37,723.76 L124.37,723.57 L126.36,723.57 L126.36,722.35 L128.36,722.35 L128.36,724.72 L130.35,724.72 L130.35,723.58 L132.34,723.58 L132.34,724.62 L134.34,724.62 L134.34,724.60 L136.33,724.60 L136.33,723.88 L138.33,723.88 L138.33,723.94 L140.32,723.94 L140.32,723.61 L142.32,723.61 L142.32,724.44 L144.31,724.44 L144.31,723.77 L146.31,723.77 L146.31,724.21 L148.30,724.21 L148.30,720.71 L150.29,720.71 L150.29,717.53 L152.29,717.53 L152.29,724.33 L154.28,724.33 L154.28,724.25 L156.28,724.25 L156.28,723.75 L158.27,723.75 L158.27,722.68 L160.27,722.68 L160.27,724.53 L162.26,724.53 L162.26,720.10 L164.26,720.10 L164.26,724.56 L166.25,724.56 L166.25,724.46 L168.24,724.46 L168.24,724.61 L170.24,724.61 L170.24,723.96 L172.23,723.96 L172.23,724.02 L174.23,724.02 L174.23,723.45 L176.22,723.45 L176.22,718.95 L178.22,718.95 L178.22,723.49 L180.21,723.49 L180.21,724.07 L182.21,724.07 L182.21,724.53 L184.20,724.53 L184.20,719.41 L186.19,719.41 L186.19,723.96 L188.19,723.96 L188.19,723.84 L190.18,723.84 L190.18,723.53 L192.18,723.53 L192.18,724.57 L194.17,724.57 L194.17,723.94 L196.17,723.94 L196.17,718.89 L198.16,718.89 L198.16,724.36 L200.16,724.36 L200.16,719.59 L202.15,719.59 L202.15,721.37 L204.14,721.37 L204.14,719.91 L206.14,719.91 L206.14,723.49 L208.13,723.49 L208.13,724.70 L210.13,724.70 L210.13,723.79 L212.12,723.79 L212.12,724.74 L214.12,724.74 L214.12,724.51 L216.11,724.51 L216.11,724.33 L218.11,724.33 L218.11,724.54 L220.10,724.54 L220.10,724.47 L222.09,724.47 L222.09,719.03 L224.09,719.03 L224.09,718.13 L226.08,718.13 L226.08,718.78 L228.08,718.78 L228.08,723.78 L230.07,723.78 L230.07,724.52 L232.07,724.52 L232.07,723.97 L234.06,723.97 L234.06,724.10 L236.06,724.10 L236.06,721.21 L238.05,721.21 L238.05,724.11 L240.04,724.11 L240.04,723.68 L242.04,723.68 L242.04,724.17 L244.03,724.17 L244.03,724.63 L246.03,724.63 L246.03,724.68 L248.02,724.68 L248.02,723.41 L250.02,723.41 L250.02,723.75 L252.01,723.75 L252.01,720.12 L254.01,720.12 L254.01,724.29 L256.00,724.29 L256.00,722.43 L257.99,722.43 L257.99,723.62 L259.99,723.62 L259.99,723.54 L261.98,723.54 L261.98,717.30 L263.98,717.30 L263.98,723.44 L265.97,723.44 L265.97,723.83 L267.97,723.83 L267.97,723.52 L269.96,723.52 L269.96,724.40 L271.96,724.40 L271.96,723.71 L273.95,723.71 L273.95,724.54 L275.94,724.54 L275.94,724.13 L277.94,724.13 L277.94,723.56 L279.93,723.56 L279.93,724.43 L281.93,724.43 L281.93,718.81 L283.92,718.81 L283.92,717.67 L285.92,717.67 L285.92,723.74 L287.91,723.74 L287.91,724.51 L289.91,724.51 L289.91,718.31 L291.90,718.31 L291.90,718.37 L293.89,718.37 L293.89,723.41 L295.89,723.41 L295.89,724.22 L297.88,724.22 L297.88,718.74 L299.88,718.74 L299.88,724.45 L301.87,724.45 L301.87,724.21 L303.87,724.21 L303.87,724.16 L305.86,724.16 L305.86,721.54 L307.86,721.54 L307.86,720.44 L309.85,720.44 L309.85,724.65 L311.84,724.65 L311.84,723.46 L313.84,723.46 L313.84,723.92 L315.83,723.92 L315.83,723.78 L317.83,723.78 L317.83,717.87 L319.82,717.87 L319.82,723.55 L321.82,723.55 L321.82,723.83 L323.81,723.83 L323.81,723.46 L325.81,723.46 L325.81,717.16 L327.80,717.16 L327.80,724.00 L329.79,724.00 L329.79,722.37 L331.79,722.37 L331.79,723.93 L333.78,723.93 L333.78,724.66 L335.78,724.66 L335.78,723.54 L337.77,723.54 L337.77,724.04 L339.77,724.04 L339.77,724.13 L341.76,724.13 L341.76,723.47 L343.76,723.47 L343.76,723.55 L345.75,723.55 L345.75,724.08 L347.74,724.08 L347.74,717.62 L349.74,717.62 L349.74,720.21 L351.73,720.21 L351.73,724.65 L353.73,724.65 L353.73,724.55 L355.72,724.55 L355.72,724.66 L357.72,724.66 L357.72,724.41 L359.71,724.41 L359.71,723.68 L361.71,723.68 L361.71,724.54 L363.70,724.54 L363.70,724.57 L365.69,724.57 L365.69,724.76 L367.69,724.76 L367.69,724.66 L369.68,724.66 L369.68,723.50 L371.68,723.50 L371.68,717.12 L373.67,717.12 L373.67,724.28 L375.67,724.28 L375.67,718.01 L377.66,718.01 L377.66,719.73 L379.66,719.73 L379.66,721.26 L381.65,721.26 L381.65,724.66 L383.64,724.66 L383.64,724.21 L385.64,724.21 L385.64,724.12 L387.63,724.12 L387.63,724.25 L389.63,724.25 L389.63,720.61 L391.62,720.61 L391.62,724.38 L393.62,724.38 L393.62,723.60 L395.61,723.60 L395.61,723.66 L397.61,723.66 L397.61,724.46 L399.60,724.46 L399.60,721.63 L401.59,721.63 L401.59,724.45 L403.59,724.45 L403.59,723.49 L405.58,723.49 L405.58,723.54 L407.58,723.54 L407.58,723.75 L409.57,723.75 L409.57,723.96 L411.57,723.96 L411.57,723.96 L413.56,723.96 L413.56,720.59 L415.56,720.59 L415.56,717.63 L417.55,717.63 L417.55,724.75 L419.54,724.75 L419.54,724.44 L421.54,724.44 L421.54,723.63 L423.53,723.63 L423.53,724.23 L425.53,724.23 L425.53,719.85 L427.52,719.85 L427.52,724.18 L429.52,724.18 L429.52,724.36 L431.51,724.36 L431.51,724.52 L433.51,724.52 L433.51,720.57 L435.50,720.57" fill="none" stroke="#73BF69" stroke-width="1" stroke-linejoin="miter"/><path d="M76.50,756.80 L78.49,756.80 L78.49,788.63 L80.49,788.63 L80.49,731.49 L82.48,731.49 L82.48,782.08 L84.48,782.08 L84.48,746.32 L86.47,746.32 L86.47,779.59 L88.47,779.59 L88.47,795.51 L90.46,795.51 L90.46,772.13 L92.46,772.13 L92.46,756.94 L94.45,756.94 L94.45,782.13 L96.44,782.13 L96.44,765.77 L98.44,765.77 L98.44,795.38 L100.43,795.38 L100.43,763.36 L102.43,763.36 L102.43,738.40 L104.42,738.40 L104.42,782.89 L106.42,782.89 L106.42,748.19 L108.41,748.19 L108.41,742.65 L110.41,742.65 L110.41,789.39 L112.40,789.39 L112.40,799.82 L114.39,799.82 L114.39,770.43 L116.39,770.43 L116.39,766.38 L118.38,766.38 L118.38,797.85 L120.38,797.85 L120.38,737.38 L122.37,737.38 L122.37,756.74 L124.37,756.74 L124.37,778.32 L126.36,778.32 L126.36,764.87 L128.36,764.87 L128.36,802.94 L130.35,802.94 L130.35,762.07 L132.34,762.07 L132.34,744.21 L134.34,744.21 L134.34,740.43 L136.33,740.43 L136.33,795.05 L138.33,795.05 L138.33,776.55 L140.32,776.55 L140.32,802.48 L142.32,802.48 L142.32,768.30 L144.31,768.30 L144.31,796.12 L146.31,796.12 L146.31,794.16 L148.30,794.16 L148.30,742.09 L150.29,742.09 L150.29,734.70 L152.29,734.70 L152.29,788.29 L154.28,788.29 L154.28,736.27 L156.28,736.27 L156.28,755.80 L158.27,755.80 L158.27,788.51 L160.27,788.51 L160.27,784.62 L162.26,784.62 L162.26,793.26 L164.26,793.26 L164.26,750.89 L166.25,750.89 L166.25,802.94 L168.24,802.94 L168.24,796.95 L170.24,796.95 L170.24,797.79 L172.23,797.79 L172.23,729.53 L174.23,729.53 L174.23,794.45 L176.22,794.45 L176.22,795.29 L178.22,795.29 L178.22,736.78 L180.21,736.78 L180.21,753.10 L182.21,753.10 L182.21,800.86 L184.20,800.86 L184.20,792.77 L186.19,792.77 L186.19,739.82 L188.19,739.82 L188.19,737.36 L190.18,737.36 L190.18,792.62 L192.18,792.62 L192.18,765.16 L194.17,765.16 L194.17,747.74 L196.17,747.74 L196.17,771.59 L198.16,771.59 L198.16,765.92 L200.16,765.92 L200.16,733.00 L202.15,733.00 L202.15,756.85 L204.14,756.85 L204.14,772.43 L206.14,772.43 L206.14,760.08 L208.13,760.08 L208.13,800.70 L210.13,800.70 L210.13,764.69 L212.12,764.69 L212.12,793.00 L214.12,793.00 L214.12,792.59 L216.11,792.59 L216.11,748.50 L218.11,748.50 L218.11,735.30 L220.10,735.30 L220.10,744.85 L222.09,744.85 L222.09,766.57 L224.09,766.57 L224.09,748.92 L226.08,748.92 L226.08,774.91 L228.08,774.91 L228.08,737.39 L230.07,737.39 L230.07,750.33 L232.07,750.33 L232.07,753.43 L234.06,753.43 L234.06,800.74 L236.06,800.74 L236.06,751.57 L238.05,751.57 L238.05,773.19 L240.04,773.19 L240.04,736.35 L242.04,736.35 L242.04,747.43 L244.03,747.43 L244.03,800.86 L246.03,800.86 L246.03,801.71 L248.02,801.71 L248.02,713.51 L250.02,713.51 L250.02,802.94 L252.01,802.94 L252.01,754.52 L254.01,754.52 L254.01,787.45 L256.00,787.45 L256.00,764.69 L257.99,764.69 L257.99,801.90 L259.99,801.90 L259.99,756.11 L261.98,756.11 L261.98,786.11 L263.98,786.11 L263.98,773.04 L265.97,773.04 L265.97,779.70 L267.97,779.70 L267.97,740.41 L269.96,740.41 L269.96,755.02 L271.96,755.02 L271.96,793.59 L273.95,793.59 L273.95,755.91 L275.94,755.91 L275.94,793.35 L277.94,793.35 L277.94,772.88 L279.93,772.88 L279.93,792.23 L281.93,792.23 L281.93,760.60 L283.92,760.60 L283.92,757.46 L285.92,757.46 L285.92,797.26 L287.91,797.26 L287.91,752.65 L289.91,752.65 L289.91,787.94 L291.90,787.94 L291.90,787.84 L293.89,787.84 L293.89,772.87 L295.89,772.87 L295.89,741.18 L297.88,741.18 L297.88,780.88 L299.88,780.88 L299.88,785.07 L301.87,785.07 L301.87,759.49 L303.87,759.49 L303.87,742.52 L305.86,742.52 L305.86,785.48 L307.86,785.48 L307.86,802.94 L309.85,802.94 L309.85,749.03 L311.84,749.03 L311.84,749.42 L313.84,749.42 L313.84,773.60 L315.83,773.60 L315.83,778.17 L317.83,778.17 L317.83,782.44 L319.82,782.44 L319.82,757.74 L321.82,757.74 L321.82,738.09 L323.81,738.09 L323.81,761.14 L325.81,761.14 L325.81,791.42 L327.80,791.42 L327.80,770.12 L329.79,770.12 L329.79,788.60 L331.79,788.60 L331.79,795.04 L333.78,795.04 L333.78,755.67 L335.78,755.67 L335.78,802.94 L337.77,802.94 L337.77,744.38 L339.77,744.38 L339.77,753.57 L341.76,753.57 L341.76,761.21 L343.76,761.21 L343.76,797.37 L345.75,797.37 L345.75,764.11 L347.74,764.11 L347.74,774.55 L349.74,774.55 L349.74,789.13 L351.73,789.13 L351.73,759.09 L353.73,759.09 L353.73,788.12 L355.72,788.12 L355.72,732.72 L357.72,732.72 L357.72,773.32 L359.71,773.32 L359.71,736.67 L361.71,736.67 L361.71,745.11 L363.70,745.11 L363.70,797.77 L365.69,797.77 L365.69,783.48 L367.69,783.48 L367.69,756.70 L369.68,756.70 L369.68,783.31 L371.68,783.31 L371.68,799.01 L373.67,799.01 L373.67,762.24 L375.67,762.24 L375.67,796.81 L377.66,796.81 L377.66,748.04 L379.66,748.04 L379.66,744.68 L381.65,744.68 L381.65,785.18 L383.64,785.18 L383.64,756.93 L385.64,756.93 L385.64,784.45 L387.63,784.45 L387.63,738.57 L389.63,738.57 L389.63,778.71 L391.62,778.71 L391.62,785.86 L393.62,785.86 L393.62,745.35 L395.61,745.35 L395.61,784.22 L397.61,784.22 L397.61,797.11 L399.60,797.11 L399.60,747.07 L401.59,747.07 L401.59,787.12 L403.59,787.12 L403.59,754.98 L405.58,754.98 L405.58,759.73 L407.58,759.73 L407.58,745.99 L409.57,745.99 L409.57,755.86 L411.57,755.86 L411.57,745.94 L413.56,745.94 L413.56,754.47 L415.56,754.47 L415.56,777.44 L417.55,777.44 L417.55,799.72 L419.54,799.72 L419.54,784.53 L421.54,784.53 L421.54,762.11 L423.53,762.11 L423.53,765.77 L425.53,765.77 L425.53,802.36 L427.52,802.36 L427.52,780.96 L429.52,780.96 L429.52,726.21 L431.51,726.21 L431.51,792.24 L433.51,792.24 L433.51,735.77 L435.50,735.77" fill="none" stroke="#FADE2A" stroke-width="1" stroke-linejoin="miter"/><rect x="636" y="705" width="1" height="110" fill="rgba(240,250,255,0.09)"/><rect x="723" y="705" width="1" height="110" fill="rgba(240,250,255,0.09)"/><rect x="809" y="705" width="1" height="110" fill="rgba(240,250,255,0.09)"/><rect x="895" y="705" width="1" height="110" fill="rgba(240,250,255,0.09)"/><rect x="981" y="705" width="1" height="110" fill="rgba(240,250,255,0.09)"/><rect x="1067" y="705" width="1" height="110" fill="rgba(240,250,255,0.09)"/><rect x="630" y="722" width="520" height="1" fill="rgba(240,250,255,0.09)"/><rect x="630" y="766" width="520" height="1" fill="rgba(240,250,255,0.09)"/><path d="M633.20,778.92 L636.06,778.92 L636.06,773.27 L638.92,773.27 L638.92,772.25 L641.78,772.25 L641.78,774.15 L644.64,774.15 L644.64,775.57 L647.49,775.57 L647.49,777.35 L650.35,777.35 L650.35,781.02 L653.21,781.02 L653.21,773.34 L656.07,773.34 L656.07,777.71 L658.93,777.71 L658.93,773.85 L661.79,773.85 L661.79,777.02 L664.65,777.02 L664.65,772.44 L667.51,772.44 L667.51,773.23 L670.37,773.23 L670.37,779.59 L673.22,779.59 L673.22,781.14 L676.08,781.14 L676.08,779.33 L678.94,779.33 L678.94,772.46 L681.80,772.46 L681.80,777.80 L684.66,777.80 L684.66,773.84 L687.52,773.84 L687.52,773.19 L690.38,773.19 L690.38,772.19 L693.24,772.19 L693.24,776.18 L696.10,776.18 L696.10,773.18 L698.95,773.18 L698.95,768.96 L701.81,768.96 L701.81,775.82 L704.67,775.82 L704.67,774.18 L707.53,774.18 L707.53,764.47 L710.39,764.47 L710.39,775.48 L713.25,775.48 L713.25,772.64 L716.11,772.64 L716.11,779.86 L718.97,779.86 L718.97,766.37 L721.83,766.37 L721.83,781.19 L724.68,781.19 L724.68,774.21 L727.54,774.21 L727.54,771.92 L730.40,771.92 L730.40,774.77 L733.26,774.77 L733.26,781.13 L736.12,781.13 L736.12,773.65 L738.98,773.65 L738.98,777.36 L741.84,777.36 L741.84,778.17 L744.70,778.17 L744.70,774.60 L747.56,774.60 L747.56,774.04 L750.41,774.04 L750.41,770.76 L753.27,770.76 L753.27,767.60 L756.13,767.60 L756.13,780.82 L758.99,780.82 L758.99,762.74 L761.85,762.74 L761.85,776.57 L764.71,776.57 L764.71,779.91 L767.57,779.91 L767.57,774.09 L770.43,774.09 L770.43,781.28 L773.29,781.28 L773.29,774.16 L776.14,774.16 L776.14,775.75 L779.00,775.75 L779.00,775.30 L781.86,775.30 L781.86,779.73 L784.72,779.73 L784.72,775.08 L787.58,775.08 L787.58,777.30 L790.44,777.30 L790.44,773.03 L793.30,773.03 L793.30,764.08 L796.16,764.08 L796.16,772.94 L799.02,772.94 L799.02,776.29 L801.87,776.29 L801.87,777.82 L804.73,777.82 L804.73,772.46 L807.59,772.46 L807.59,779.27 L810.45,779.27 L810.45,779.11 L813.31,779.11 L813.31,780.40 L816.17,780.40 L816.17,772.46 L819.03,772.46 L819.03,770.61 L821.89,770.61 L821.89,773.30 L824.75,773.30 L824.75,764.05 L827.60,764.05 L827.60,775.85 L830.46,775.85 L830.46,776.37 L833.32,776.37 L833.32,780.69 L836.18,780.69 L836.18,768.73 L839.04,768.73 L839.04,778.07 L841.90,778.07 L841.90,768.43 L844.76,768.43 L844.76,776.53 L847.62,776.53 L847.62,767.88 L850.48,767.88 L850.48,779.64 L853.33,779.64 L853.33,773.95 L856.19,773.95 L856.19,778.37 L859.05,778.37 L859.05,768.93 L861.91,768.93 L861.91,774.22 L864.77,774.22 L864.77,773.71 L867.63,773.71 L867.63,780.74 L870.49,780.74 L870.49,772.19 L873.35,772.19 L873.35,777.88 L876.21,777.88 L876.21,772.17 L879.06,772.17 L879.06,771.62 L881.92,771.62 L881.92,777.06 L884.78,777.06 L884.78,777.84 L887.64,777.84 L887.64,779.12 L890.50,779.12 L890.50,773.98 L893.36,773.98 L893.36,771.11 L896.22,771.11 L896.22,774.53 L899.08,774.53 L899.08,778.61 L901.94,778.61 L901.94,774.81 L904.79,774.81 L904.79,776.70 L907.65,776.70 L907.65,772.27 L910.51,772.27 L910.51,768.28 L913.37,768.28 L913.37,778.55 L916.23,778.55 L916.23,777.50 L919.09,777.50 L919.09,781.12 L921.95,781.12 L921.95,779.25 L924.81,779.25 L924.81,779.15 L927.67,779.15 L927.67,778.62 L930.52,778.62 L930.52,778.30 L933.38,778.30 L933.38,776.49 L936.24,776.49 L936.24,778.36 L939.10,778.36 L939.10,776.87 L941.96,776.87 L941.96,772.40 L944.82,772.40 L944.82,771.53 L947.68,771.53 L947.68,768.92 L950.54,768.92 L950.54,776.02 L953.40,776.02 L953.40,781.08 L956.25,781.08 L956.25,773.83 L959.11,773.83 L959.11,775.17 L961.97,775.17 L961.97,776.22 L964.83,776.22 L964.83,780.15 L967.69,780.15 L967.69,772.96 L970.55,772.96 L970.55,779.37 L973.41,779.37 L973.41,779.08 L976.27,779.08 L976.27,773.32 L979.13,773.32 L979.13,773.30 L981.98,773.30 L981.98,757.32 L984.84,757.32 L984.84,773.30 L987.70,773.30 L987.70,774.19 L990.56,774.19 L990.56,775.08 L993.42,775.08 L993.42,776.86 L996.28,776.86 L996.28,767.98 L999.14,767.98 L999.14,733.97 L1002.00,733.97 L1002.00,743.11 L1004.86,743.11 L1004.86,746.66 L1007.71,746.66 L1007.71,753.77 L1010.57,753.77 L1010.57,760.87 L1013.43,760.87 L1013.43,767.98 L1016.29,767.98 L1016.29,764.42 L1019.15,764.42 L1019.15,757.32 L1022.01,757.32 L1022.01,775.64 L1024.87,775.64 L1024.87,776.50 L1027.73,776.50 L1027.73,772.77 L1030.59,772.77 L1030.59,775.77 L1033.44,775.77 L1033.44,772.38 L1036.30,772.38 L1036.30,772.51 L1039.16,772.51 L1039.16,772.40 L1042.02,772.40 L1042.02,773.03 L1044.88,773.03 L1044.88,772.14 L1047.74,772.14 L1047.74,776.30 L1050.60,776.30 L1050.60,780.93 L1053.46,780.93 L1053.46,777.29 L1056.32,777.29 L1056.32,769.48 L1059.17,769.48 L1059.17,771.05 L1062.03,771.05 L1062.03,776.40 L1064.89,776.40 L1064.89,775.33 L1067.75,775.33 L1067.75,770.14 L1070.61,770.14 L1070.61,776.67 L1073.47,776.67 L1073.47,777.46 L1076.33,777.46 L1076.33,770.73 L1079.19,770.73 L1079.19,777.22 L1082.05,777.22 L1082.05,768.70 L1084.90,768.70 L1084.90,777.39 L1087.76,777.39 L1087.76,780.16 L1090.62,780.16 L1090.62,775.35 L1093.48,775.35 L1093.48,770.14 L1096.34,770.14 L1096.34,772.57 L1099.20,772.57 L1099.20,769.99 L1102.06,769.99 L1102.06,777.65 L1104.92,777.65 L1104.92,780.42 L1107.78,780.42 L1107.78,765.20 L1110.63,765.20 L1110.63,781.17 L1113.49,781.17 L1113.49,780.61 L1116.35,780.61 L1116.35,777.50 L1119.21,777.50 L1119.21,773.11 L1122.07,773.11 L1122.07,768.37 L1124.93,768.37 L1124.93,774.80 L1127.79,774.80 L1127.79,781.14 L1130.65,781.14 L1130.65,780.72 L1133.51,780.72 L1133.51,780.63 L1136.36,780.63 L1136.36,774.38 L1139.22,774.38 L1139.22,771.54 L1142.08,771.54 L1142.08,773.00 L1144.94,773.00 L1144.94,777.06 L1147.80,777.06 L1147.80,810.60 L633.20,810.60 Z" fill="#73BF69" fill-opacity="0.8"/><path d="M633.20,777.45 L636.06,777.45 L636.06,770.84 L638.92,770.84 L638.92,768.78 L641.78,768.78 L641.78,771.52 L644.64,771.52 L644.64,772.03 L647.49,772.03 L647.49,774.17 L650.35,774.17 L650.35,778.77 L653.21,778.77 L653.21,770.74 L656.07,770.74 L656.07,774.34 L658.93,774.34 L658.93,770.90 L661.79,770.90 L661.79,774.78 L664.65,774.78 L664.65,769.32 L667.51,769.32 L667.51,770.69 L670.37,770.69 L670.37,777.37 L673.22,777.37 L673.22,779.04 L676.08,779.04 L676.08,777.99 L678.94,777.99 L678.94,770.95 L681.80,770.95 L681.80,776.44 L684.66,776.44 L684.66,770.33 L687.52,770.33 L687.52,769.65 L690.38,769.65 L690.38,769.79 L693.24,769.79 L693.24,772.81 L696.10,772.81 L696.10,772.05 L698.95,772.05 L698.95,766.45 L701.81,766.45 L701.81,774.19 L704.67,774.19 L704.67,772.58 L707.53,772.58 L707.53,762.07 L710.39,762.07 L710.39,773.04 L713.25,773.04 L713.25,770.37 L716.11,770.37 L716.11,777.75 L718.97,777.75 L718.97,762.92 L721.83,762.92 L721.83,778.44 L724.68,778.44 L724.68,771.90 L727.54,771.90 L727.54,769.11 L730.40,769.11 L730.40,772.51 L733.26,772.51 L733.26,779.37 L736.12,779.37 L736.12,770.66 L738.98,770.66 L738.98,775.34 L741.84,775.34 L741.84,775.48 L744.70,775.48 L744.70,772.51 L747.56,772.51 L747.56,771.47 L750.41,771.47 L750.41,769.16 L753.27,769.16 L753.27,765.72 L756.13,765.72 L756.13,777.44 L758.99,777.44 L758.99,761.50 L761.85,761.50 L761.85,773.55 L764.71,773.55 L764.71,778.17 L767.57,778.17 L767.57,771.55 L770.43,771.55 L770.43,779.13 L773.29,779.13 L773.29,772.83 L776.14,772.83 L776.14,772.38 L779.00,772.38 L779.00,772.32 L781.86,772.32 L781.86,777.22 L784.72,777.22 L784.72,772.72 L787.58,772.72 L787.58,773.89 L790.44,773.89 L790.44,771.78 L793.30,771.78 L793.30,761.61 L796.16,761.61 L796.16,770.37 L799.02,770.37 L799.02,773.18 L801.87,773.18 L801.87,774.39 L804.73,774.39 L804.73,768.99 L807.59,768.99 L807.59,777.72 L810.45,777.72 L810.45,776.01 L813.31,776.01 L813.31,777.32 L816.17,777.32 L816.17,769.33 L819.03,769.33 L819.03,767.60 L821.89,767.60 L821.89,771.06 L824.75,771.06 L824.75,761.28 L827.60,761.28 L827.60,774.70 L830.46,774.70 L830.46,773.62 L833.32,773.62 L833.32,779.58 L836.18,779.58 L836.18,766.58 L839.04,766.58 L839.04,774.71 L841.90,774.71 L841.90,765.47 L844.76,765.47 L844.76,773.38 L847.62,773.38 L847.62,765.55 L850.48,765.55 L850.48,776.92 L853.33,776.92 L853.33,771.02 L856.19,771.02 L856.19,776.05 L859.05,776.05 L859.05,766.08 L861.91,766.08 L861.91,771.25 L864.77,771.25 L864.77,771.50 L867.63,771.50 L867.63,777.77 L870.49,777.77 L870.49,771.04 L873.35,771.04 L873.35,776.28 L876.21,776.28 L876.21,769.02 L879.06,769.02 L879.06,770.06 L881.92,770.06 L881.92,774.34 L884.78,774.34 L884.78,776.70 L887.64,776.70 L887.64,777.63 L890.50,777.63 L890.50,772.68 L893.36,772.68 L893.36,769.68 L896.22,769.68 L896.22,771.37 L899.08,771.37 L899.08,776.97 L901.94,776.97 L901.94,771.84 L904.79,771.84 L904.79,773.47 L907.65,773.47 L907.65,769.40 L910.51,769.40 L910.51,766.74 L913.37,766.74 L913.37,775.37 L916.23,775.37 L916.23,775.45 L919.09,775.45 L919.09,779.63 L921.95,779.63 L921.95,776.58 L924.81,776.58 L924.81,776.66 L927.67,776.66 L927.67,775.88 L930.52,775.88 L930.52,774.83 L933.38,774.83 L933.38,774.20 L936.24,774.20 L936.24,774.84 L939.10,774.84 L939.10,775.25 L941.96,775.25 L941.96,769.14 L944.82,769.14 L944.82,768.61 L947.68,768.61 L947.68,766.93 L950.54,766.93 L950.54,774.36 L953.40,774.36 L953.40,778.12 L956.25,778.12 L956.25,771.93 L959.11,771.93 L959.11,772.25 L961.97,772.25 L961.97,773.03 L964.83,773.03 L964.83,777.78 L967.69,777.78 L967.69,769.72 L970.55,769.72 L970.55,777.69 L973.41,777.69 L973.41,777.63 L976.27,777.63 L976.27,769.84 L979.13,769.84 L979.13,769.92 L981.98,769.92 L981.98,755.24 L984.84,755.24 L984.84,770.86 L987.70,770.86 L987.70,773.06 L990.56,773.06 L990.56,773.52 L993.42,773.52 L993.42,775.21 L996.28,775.21 L996.28,766.50 L999.14,766.50 L999.14,720.02 L1002.00,720.02 L1002.00,734.23 L1004.86,734.23 L1004.86,738.67 L1007.71,738.67 L1007.71,751.22 L1010.57,751.22 L1010.57,759.68 L1013.43,759.68 L1013.43,766.28 L1016.29,766.28 L1016.29,762.19 L1019.15,762.19 L1019.15,756.19 L1022.01,756.19 L1022.01,772.73 L1024.87,772.73 L1024.87,774.47 L1027.73,774.47 L1027.73,771.64 L1030.59,771.64 L1030.59,772.39 L1033.44,772.39 L1033.44,769.65 L1036.30,769.65 L1036.30,770.72 L1039.16,770.72 L1039.16,770.61 L1042.02,770.61 L1042.02,771.94 L1044.88,771.94 L1044.88,769.25 L1047.74,769.25 L1047.74,773.34 L1050.60,773.34 L1050.60,779.05 L1053.46,779.05 L1053.46,775.98 L1056.32,775.98 L1056.32,767.70 L1059.17,767.70 L1059.17,769.79 L1062.03,769.79 L1062.03,773.07 L1064.89,773.07 L1064.89,772.10 L1067.75,772.10 L1067.75,768.40 L1070.61,768.40 L1070.61,775.21 L1073.47,775.21 L1073.47,774.34 L1076.33,774.34 L1076.33,767.52 L1079.19,767.52 L1079.19,773.97 L1082.05,773.97 L1082.05,766.16 L1084.90,766.16 L1084.90,775.30 L1087.76,775.30 L1087.76,776.88 L1090.62,776.88 L1090.62,772.54 L1093.48,772.54 L1093.48,767.64 L1096.34,767.64 L1096.34,771.19 L1099.20,771.19 L1099.20,766.51 L1102.06,766.51 L1102.06,774.19 L1104.92,774.19 L1104.92,777.53 L1107.78,777.53 L1107.78,763.20 L1110.63,763.20 L1110.63,779.76 L1113.49,779.76 L1113.49,777.78 L1116.35,777.78 L1116.35,774.36 L1119.21,774.36 L1119.21,771.15 L1122.07,771.15 L1122.07,765.91 L1124.93,765.91 L1124.93,773.05 L1127.79,773.05 L1127.79,779.04 L1130.65,779.04 L1130.65,777.44 L1133.51,777.44 L1133.51,778.52 L1136.36,778.52 L1136.36,772.30 L1139.22,772.30 L1139.22,769.40 L1142.08,769.40 L1142.08,769.49 L1144.94,769.49 L1144.94,774.75 L1147.80,774.75 L1147.80,777.06 L1144.94,777.06 L1144.94,773.00 L1142.08,773.00 L1142.08,771.54 L1139.22,771.54 L1139.22,774.38 L1136.36,774.38 L1136.36,780.63 L1133.51,780.63 L1133.51,780.72 L1130.65,780.72 L1130.65,781.14 L1127.79,781.14 L1127.79,774.80 L1124.93,774.80 L1124.93,768.37 L1122.07,768.37 L1122.07,773.11 L1119.21,773.11 L1119.21,777.50 L1116.35,777.50 L1116.35,780.61 L1113.49,780.61 L1113.49,781.17 L1110.63,781.17 L1110.63,765.20 L1107.78,765.20 L1107.78,780.42 L1104.92,780.42 L1104.92,777.65 L1102.06,777.65 L1102.06,769.99 L1099.20,769.99 L1099.20,772.57 L1096.34,772.57 L1096.34,770.14 L1093.48,770.14 L1093.48,775.35 L1090.62,775.35 L1090.62,780.16 L1087.76,780.16 L1087.76,777.39 L1084.90,777.39 L1084.90,768.70 L1082.05,768.70 L1082.05,777.22 L1079.19,777.22 L1079.19,770.73 L1076.33,770.73 L1076.33,777.46 L1073.47,777.46 L1073.47,776.67 L1070.61,776.67 L1070.61,770.14 L1067.75,770.14 L1067.75,775.33 L1064.89,775.33 L1064.89,776.40 L1062.03,776.40 L1062.03,771.05 L1059.17,771.05 L1059.17,769.48 L1056.32,769.48 L1056.32,777.29 L1053.46,777.29 L1053.46,780.93 L1050.60,780.93 L1050.60,776.30 L1047.74,776.30 L1047.74,772.14 L1044.88,772.14 L1044.88,773.03 L1042.02,773.03 L1042.02,772.40 L1039.16,772.40 L1039.16,772.51 L1036.30,772.51 L1036.30,772.38 L1033.44,772.38 L1033.44,775.77 L1030.59,775.77 L1030.59,772.77 L1027.73,772.77 L1027.73,776.50 L1024.87,776.50 L1024.87,775.64 L1022.01,775.64 L1022.01,757.32 L1019.15,757.32 L1019.15,764.42 L1016.29,764.42 L1016.29,767.98 L1013.43,767.98 L1013.43,760.87 L1010.57,760.87 L1010.57,753.77 L1007.71,753.77 L1007.71,746.66 L1004.86,746.66 L1004.86,743.11 L1002.00,743.11 L1002.00,733.97 L999.14,733.97 L999.14,767.98 L996.28,767.98 L996.28,776.86 L993.42,776.86 L993.42,775.08 L990.56,775.08 L990.56,774.19 L987.70,774.19 L987.70,773.30 L984.84,773.30 L984.84,757.32 L981.98,757.32 L981.98,773.30 L979.13,773.30 L979.13,773.32 L976.27,773.32 L976.27,779.08 L973.41,779.08 L973.41,779.37 L970.55,779.37 L970.55,772.96 L967.69,772.96 L967.69,780.15 L964.83,780.15 L964.83,776.22 L961.97,776.22 L961.97,775.17 L959.11,775.17 L959.11,773.83 L956.25,773.83 L956.25,781.08 L953.40,781.08 L953.40,776.02 L950.54,776.02 L950.54,768.92 L947.68,768.92 L947.68,771.53 L944.82,771.53 L944.82,772.40 L941.96,772.40 L941.96,776.87 L939.10,776.87 L939.10,778.36 L936.24,778.36 L936.24,776.49 L933.38,776.49 L933.38,778.30 L930.52,778.30 L930.52,778.62 L927.67,778.62 L927.67,779.15 L924.81,779.15 L924.81,779.25 L921.95,779.25 L921.95,781.12 L919.09,781.12 L919.09,777.50 L916.23,777.50 L916.23,778.55 L913.37,778.55 L913.37,768.28 L910.51,768.28 L910.51,772.27 L907.65,772.27 L907.65,776.70 L904.79,776.70 L904.79,774.81 L901.94,774.81 L901.94,778.61 L899.08,778.61 L899.08,774.53 L896.22,774.53 L896.22,771.11 L893.36,771.11 L893.36,773.98 L890.50,773.98 L890.50,779.12 L887.64,779.12 L887.64,777.84 L884.78,777.84 L884.78,777.06 L881.92,777.06 L881.92,771.62 L879.06,771.62 L879.06,772.17 L876.21,772.17 L876.21,777.88 L873.35,777.88 L873.35,772.19 L870.49,772.19 L870.49,780.74 L867.63,780.74 L867.63,773.71 L864.77,773.71 L864.77,774.22 L861.91,774.22 L861.91,768.93 L859.05,768.93 L859.05,778.37 L856.19,778.37 L856.19,773.95 L853.33,773.95 L853.33,779.64 L850.48,779.64 L850.48,767.88 L847.62,767.88 L847.62,776.53 L844.76,776.53 L844.76,768.43 L841.90,768.43 L841.90,778.07 L839.04,778.07 L839.04,768.73 L836.18,768.73 L836.18,780.69 L833.32,780.69 L833.32,776.37 L830.46,776.37 L830.46,775.85 L827.60,775.85 L827.60,764.05 L824.75,764.05 L824.75,773.30 L821.89,773.30 L821.89,770.61 L819.03,770.61 L819.03,772.46 L816.17,772.46 L816.17,780.40 L813.31,780.40 L813.31,779.11 L810.45,779.11 L810.45,779.27 L807.59,779.27 L807.59,772.46 L804.73,772.46 L804.73,777.82 L801.87,777.82 L801.87,776.29 L799.02,776.29 L799.02,772.94 L796.16,772.94 L796.16,764.08 L793.30,764.08 L793.30,773.03 L790.44,773.03 L790.44,777.30 L787.58,777.30 L787.58,775.08 L784.72,775.08 L784.72,779.73 L781.86,779.73 L781.86,775.30 L779.00,775.30 L779.00,775.75 L776.14,775.75 L776.14,774.16 L773.29,774.16 L773.29,781.28 L770.43,781.28 L770.43,774.09 L767.57,774.09 L767.57,779.91 L764.71,779.91 L764.71,776.57 L761.85,776.57 L761.85,762.74 L758.99,762.74 L758.99,780.82 L756.13,780.82 L756.13,767.60 L753.27,767.60 L753.27,770.76 L750.41,770.76 L750.41,774.04 L747.56,774.04 L747.56,774.60 L744.70,774.60 L744.70,778.17 L741.84,778.17 L741.84,777.36 L738.98,777.36 L738.98,773.65 L736.12,773.65 L736.12,781.13 L733.26,781.13 L733.26,774.77 L730.40,774.77 L730.40,771.92 L727.54,771.92 L727.54,774.21 L724.68,774.21 L724.68,781.19 L721.83,781.19 L721.83,766.37 L718.97,766.37 L718.97,779.86 L716.11,779.86 L716.11,772.64 L713.25,772.64 L713.25,775.48 L710.39,775.48 L710.39,764.47 L707.53,764.47 L707.53,774.18 L704.67,774.18 L704.67,775.82 L701.81,775.82 L701.81,768.96 L698.95,768.96 L698.95,773.18 L696.10,773.18 L696.10,776.18 L693.24,776.18 L693.24,772.19 L690.38,772.19 L690.38,773.19 L687.52,773.19 L687.52,773.84 L684.66,773.84 L684.66,777.80 L681.80,777.80 L681.80,772.46 L678.94,772.46 L678.94,779.33 L676.08,779.33 L676.08,781.14 L673.22,781.14 L673.22,779.59 L670.37,779.59 L670.37,773.23 L667.51,773.23 L667.51,772.44 L664.65,772.44 L664.65,777.02 L661.79,777.02 L661.79,773.85 L658.93,773.85 L658.93,777.71 L656.07,777.71 L656.07,773.34 L653.21,773.34 L653.21,781.02 L650.35,781.02 L650.35,777.35 L647.49,777.35 L647.49,775.57 L644.64,775.57 L644.64,774.15 L641.78,774.15 L641.78,772.25 L638.92,772.25 L638.92,773.27 L636.06,773.27 L636.06,778.92 L633.20,778.92 Z" fill="#F2CC3C" fill-opacity="0.8"/><rect x="1258" y="705" width="1" height="109" fill="rgba(240,250,255,0.09)"/><rect x="1358" y="705" width="1" height="109" fill="rgba(240,250,255,0.09)"/><rect x="1459" y="705" width="1" height="109" fill="rgba(240,250,255,0.09)"/><rect x="1559" y="705" width="1" height="109" fill="rgba(240,250,255,0.09)"/><rect x="1660" y="705" width="1" height="109" fill="rgba(240,250,255,0.09)"/><rect x="1760" y="705" width="1" height="109" fill="rgba(240,250,255,0.09)"/><rect x="1251" y="754" width="605" height="1" fill="rgba(240,250,255,0.09)"/><path d="M1254.70,788.33 L1258.03,788.33 L1258.03,788.10 L1261.36,788.10 L1261.36,788.31 L1264.68,788.31 L1264.68,787.39 L1268.01,787.39 L1268.01,786.03 L1271.34,786.03 L1271.34,787.77 L1274.67,787.77 L1274.67,787.94 L1277.99,787.94 L1277.99,788.13 L1281.32,788.13 L1281.32,788.13 L1284.65,788.13 L1284.65,787.56 L1287.98,787.56 L1287.98,787.19 L1291.31,787.19 L1291.31,787.36 L1294.63,787.36 L1294.63,786.17 L1297.96,786.17 L1297.96,788.28 L1301.29,788.28 L1301.29,786.98 L1304.62,786.98 L1304.62,786.69 L1307.94,786.69 L1307.94,787.02 L1311.27,787.02 L1311.27,786.85 L1314.60,786.85 L1314.60,788.14 L1317.93,788.14 L1317.93,787.43 L1321.26,787.43 L1321.26,787.45 L1324.58,787.45 L1324.58,787.54 L1327.91,787.54 L1327.91,785.75 L1331.24,785.75 L1331.24,787.46 L1334.57,787.46 L1334.57,787.78 L1337.89,787.78 L1337.89,788.06 L1341.22,788.06 L1341.22,788.13 L1344.55,788.13 L1344.55,786.07 L1347.88,786.07 L1347.88,787.11 L1351.21,787.11 L1351.21,787.30 L1354.53,787.30 L1354.53,787.40 L1357.86,787.40 L1357.86,786.73 L1361.19,786.73 L1361.19,786.21 L1364.52,786.21 L1364.52,788.06 L1367.84,788.06 L1367.84,788.46 L1371.17,788.46 L1371.17,787.84 L1374.50,787.84 L1374.50,785.78 L1377.83,785.78 L1377.83,787.16 L1381.16,787.16 L1381.16,787.66 L1384.48,787.66 L1384.48,786.41 L1387.81,786.41 L1387.81,786.63 L1391.14,786.63 L1391.14,787.37 L1394.47,787.37 L1394.47,788.54 L1397.79,788.54 L1397.79,787.98 L1401.12,787.98 L1401.12,786.85 L1404.45,786.85 L1404.45,787.01 L1407.78,787.01 L1407.78,787.53 L1411.11,787.53 L1411.11,787.74 L1414.43,787.74 L1414.43,788.06 L1417.76,788.06 L1417.76,787.90 L1421.09,787.90 L1421.09,787.72 L1424.42,787.72 L1424.42,788.52 L1427.74,788.52 L1427.74,787.65 L1431.07,787.65 L1431.07,786.14 L1434.40,786.14 L1434.40,788.10 L1437.73,788.10 L1437.73,788.57 L1441.06,788.57 L1441.06,788.34 L1444.38,788.34 L1444.38,785.62 L1447.71,785.62 L1447.71,787.76 L1451.04,787.76 L1451.04,787.55 L1454.37,787.55 L1454.37,788.35 L1457.69,788.35 L1457.69,786.22 L1461.02,786.22 L1461.02,788.75 L1464.35,788.75 L1464.35,787.62 L1467.68,787.62 L1467.68,787.28 L1471.01,787.28 L1471.01,787.03 L1474.33,787.03 L1474.33,786.37 L1477.66,786.37 L1477.66,786.37 L1480.99,786.37 L1480.99,787.42 L1484.32,787.42 L1484.32,787.25 L1487.64,787.25 L1487.64,787.76 L1490.97,787.76 L1490.97,786.76 L1494.30,786.76 L1494.30,788.43 L1497.63,788.43 L1497.63,788.24 L1500.96,788.24 L1500.96,786.47 L1504.28,786.47 L1504.28,786.65 L1507.61,786.65 L1507.61,788.73 L1510.94,788.73 L1510.94,788.02 L1514.27,788.02 L1514.27,786.97 L1517.59,786.97 L1517.59,787.35 L1520.92,787.35 L1520.92,787.21 L1524.25,787.21 L1524.25,787.28 L1527.58,787.28 L1527.58,787.03 L1530.91,787.03 L1530.91,787.49 L1534.23,787.49 L1534.23,786.06 L1537.56,786.06 L1537.56,788.47 L1540.89,788.47 L1540.89,788.18 L1544.22,788.18 L1544.22,786.75 L1547.54,786.75 L1547.54,787.86 L1550.87,787.86 L1550.87,786.00 L1554.20,786.00 L1554.20,787.57 L1557.53,787.57 L1557.53,787.94 L1560.86,787.94 L1560.86,787.63 L1564.18,787.63 L1564.18,787.66 L1567.51,787.66 L1567.51,786.19 L1570.84,786.19 L1570.84,788.03 L1574.17,788.03 L1574.17,786.62 L1577.49,786.62 L1577.49,787.87 L1580.82,787.87 L1580.82,787.84 L1584.15,787.84 L1584.15,787.39 L1587.48,787.39 L1587.48,786.35 L1590.81,786.35 L1590.81,788.02 L1594.13,788.02 L1594.13,785.83 L1597.46,785.83 L1597.46,786.23 L1600.79,786.23 L1600.79,788.12 L1604.12,788.12 L1604.12,786.94 L1607.44,786.94 L1607.44,788.38 L1610.77,788.38 L1610.77,788.71 L1614.10,788.71 L1614.10,788.06 L1617.43,788.06 L1617.43,786.42 L1620.76,786.42 L1620.76,788.46 L1624.08,788.46 L1624.08,786.44 L1627.41,786.44 L1627.41,787.59 L1630.74,787.59 L1630.74,787.15 L1634.07,787.15 L1634.07,786.67 L1637.39,786.67 L1637.39,787.25 L1640.72,787.25 L1640.72,787.97 L1644.05,787.97 L1644.05,788.04 L1647.38,788.04 L1647.38,787.65 L1650.71,787.65 L1650.71,787.31 L1654.03,787.31 L1654.03,788.32 L1657.36,788.32 L1657.36,788.40 L1660.69,788.40 L1660.69,788.54 L1664.02,788.54 L1664.02,787.03 L1667.34,787.03 L1667.34,788.61 L1670.67,788.61 L1670.67,788.27 L1674.00,788.27 L1674.00,786.52 L1677.33,786.52 L1677.33,788.37 L1680.66,788.37 L1680.66,786.99 L1683.98,786.99 L1683.98,787.95 L1687.31,787.95 L1687.31,788.21 L1690.64,788.21 L1690.64,786.62 L1693.97,786.62 L1693.97,787.25 L1697.29,787.25 L1697.29,787.13 L1700.62,787.13 L1700.62,787.72 L1703.95,787.72 L1703.95,787.62 L1707.28,787.62 L1707.28,787.70 L1710.61,787.70 L1710.61,787.78 L1713.93,787.78 L1713.93,787.97 L1717.26,787.97 L1717.26,787.12 L1720.59,787.12 L1720.59,789.82 L1723.92,789.82 L1723.92,787.65 L1727.24,787.65 L1727.24,786.36 L1730.57,786.36 L1730.57,788.01 L1733.90,788.01 L1733.90,787.76 L1737.23,787.76 L1737.23,786.14 L1740.56,786.14 L1740.56,786.12 L1743.88,786.12 L1743.88,787.76 L1747.21,787.76 L1747.21,787.83 L1750.54,787.83 L1750.54,785.86 L1753.87,785.86 L1753.87,786.52 L1757.19,786.52 L1757.19,786.17 L1760.52,786.17 L1760.52,787.80 L1763.85,787.80 L1763.85,787.41 L1767.18,787.41 L1767.18,786.03 L1770.51,786.03 L1770.51,787.85 L1773.83,787.85 L1773.83,786.77 L1777.16,786.77 L1777.16,785.64 L1780.49,785.64 L1780.49,788.10 L1783.82,788.10 L1783.82,787.25 L1787.14,787.25 L1787.14,787.51 L1790.47,787.51 L1790.47,787.89 L1793.80,787.89 L1793.80,786.73 L1797.13,786.73 L1797.13,787.85 L1800.46,787.85 L1800.46,787.80 L1803.78,787.80 L1803.78,788.50 L1807.11,788.50 L1807.11,787.63 L1810.44,787.63 L1810.44,786.23 L1813.77,786.23 L1813.77,787.62 L1817.09,787.62 L1817.09,786.64 L1820.42,786.64 L1820.42,785.81 L1823.75,785.81 L1823.75,786.69 L1827.08,786.69 L1827.08,787.41 L1830.41,787.41 L1830.41,787.60 L1833.73,787.60 L1833.73,786.16 L1837.06,786.16 L1837.06,787.46 L1840.39,787.46 L1840.39,786.78 L1843.72,786.78 L1843.72,787.70 L1847.04,787.70 L1847.04,786.40 L1850.37,786.40 L1850.37,785.86 L1853.70,785.86 L1853.70,810.00 L1850.37,810.00 L1850.37,810.00 L1847.04,810.00 L1847.04,810.00 L1843.72,810.00 L1843.72,810.00 L1840.39,810.00 L1840.39,810.00 L1837.06,810.00 L1837.06,810.00 L1833.73,810.00 L1833.73,810.00 L1830.41,810.00 L1830.41,810.00 L1827.08,810.00 L1827.08,810.00 L1823.75,810.00 L1823.75,810.00 L1820.42,810.00 L1820.42,810.00 L1817.09,810.00 L1817.09,810.00 L1813.77,810.00 L1813.77,810.00 L1810.44,810.00 L1810.44,810.00 L1807.11,810.00 L1807.11,810.00 L1803.78,810.00 L1803.78,810.00 L1800.46,810.00 L1800.46,810.00 L1797.13,810.00 L1797.13,810.00 L1793.80,810.00 L1793.80,810.00 L1790.47,810.00 L1790.47,810.00 L1787.14,810.00 L1787.14,810.00 L1783.82,810.00 L1783.82,810.00 L1780.49,810.00 L1780.49,810.00 L1777.16,810.00 L1777.16,810.00 L1773.83,810.00 L1773.83,810.00 L1770.51,810.00 L1770.51,810.00 L1767.18,810.00 L1767.18,810.00 L1763.85,810.00 L1763.85,810.00 L1760.52,810.00 L1760.52,810.00 L1757.19,810.00 L1757.19,810.00 L1753.87,810.00 L1753.87,810.00 L1750.54,810.00 L1750.54,810.00 L1747.21,810.00 L1747.21,810.00 L1743.88,810.00 L1743.88,810.00 L1740.56,810.00 L1740.56,810.00 L1737.23,810.00 L1737.23,810.00 L1733.90,810.00 L1733.90,810.00 L1730.57,810.00 L1730.57,810.00 L1727.24,810.00 L1727.24,810.00 L1723.92,810.00 L1723.92,810.00 L1720.59,810.00 L1720.59,810.00 L1717.26,810.00 L1717.26,810.00 L1713.93,810.00 L1713.93,810.00 L1710.61,810.00 L1710.61,810.00 L1707.28,810.00 L1707.28,810.00 L1703.95,810.00 L1703.95,810.00 L1700.62,810.00 L1700.62,810.00 L1697.29,810.00 L1697.29,810.00 L1693.97,810.00 L1693.97,810.00 L1690.64,810.00 L1690.64,810.00 L1687.31,810.00 L1687.31,810.00 L1683.98,810.00 L1683.98,810.00 L1680.66,810.00 L1680.66,810.00 L1677.33,810.00 L1677.33,810.00 L1674.00,810.00 L1674.00,810.00 L1670.67,810.00 L1670.67,810.00 L1667.34,810.00 L1667.34,810.00 L1664.02,810.00 L1664.02,810.00 L1660.69,810.00 L1660.69,810.00 L1657.36,810.00 L1657.36,810.00 L1654.03,810.00 L1654.03,810.00 L1650.71,810.00 L1650.71,810.00 L1647.38,810.00 L1647.38,810.00 L1644.05,810.00 L1644.05,810.00 L1640.72,810.00 L1640.72,810.00 L1637.39,810.00 L1637.39,810.00 L1634.07,810.00 L1634.07,810.00 L1630.74,810.00 L1630.74,810.00 L1627.41,810.00 L1627.41,810.00 L1624.08,810.00 L1624.08,810.00 L1620.76,810.00 L1620.76,810.00 L1617.43,810.00 L1617.43,810.00 L1614.10,810.00 L1614.10,810.00 L1610.77,810.00 L1610.77,810.00 L1607.44,810.00 L1607.44,810.00 L1604.12,810.00 L1604.12,810.00 L1600.79,810.00 L1600.79,810.00 L1597.46,810.00 L1597.46,810.00 L1594.13,810.00 L1594.13,810.00 L1590.81,810.00 L1590.81,810.00 L1587.48,810.00 L1587.48,810.00 L1584.15,810.00 L1584.15,810.00 L1580.82,810.00 L1580.82,810.00 L1577.49,810.00 L1577.49,810.00 L1574.17,810.00 L1574.17,810.00 L1570.84,810.00 L1570.84,810.00 L1567.51,810.00 L1567.51,810.00 L1564.18,810.00 L1564.18,810.00 L1560.86,810.00 L1560.86,810.00 L1557.53,810.00 L1557.53,810.00 L1554.20,810.00 L1554.20,810.00 L1550.87,810.00 L1550.87,810.00 L1547.54,810.00 L1547.54,810.00 L1544.22,810.00 L1544.22,810.00 L1540.89,810.00 L1540.89,810.00 L1537.56,810.00 L1537.56,810.00 L1534.23,810.00 L1534.23,810.00 L1530.91,810.00 L1530.91,810.00 L1527.58,810.00 L1527.58,810.00 L1524.25,810.00 L1524.25,810.00 L1520.92,810.00 L1520.92,810.00 L1517.59,810.00 L1517.59,810.00 L1514.27,810.00 L1514.27,810.00 L1510.94,810.00 L1510.94,810.00 L1507.61,810.00 L1507.61,810.00 L1504.28,810.00 L1504.28,810.00 L1500.96,810.00 L1500.96,810.00 L1497.63,810.00 L1497.63,810.00 L1494.30,810.00 L1494.30,810.00 L1490.97,810.00 L1490.97,810.00 L1487.64,810.00 L1487.64,810.00 L1484.32,810.00 L1484.32,810.00 L1480.99,810.00 L1480.99,810.00 L1477.66,810.00 L1477.66,810.00 L1474.33,810.00 L1474.33,810.00 L1471.01,810.00 L1471.01,810.00 L1467.68,810.00 L1467.68,810.00 L1464.35,810.00 L1464.35,810.00 L1461.02,810.00 L1461.02,810.00 L1457.69,810.00 L1457.69,810.00 L1454.37,810.00 L1454.37,810.00 L1451.04,810.00 L1451.04,810.00 L1447.71,810.00 L1447.71,810.00 L1444.38,810.00 L1444.38,810.00 L1441.06,810.00 L1441.06,810.00 L1437.73,810.00 L1437.73,810.00 L1434.40,810.00 L1434.40,810.00 L1431.07,810.00 L1431.07,810.00 L1427.74,810.00 L1427.74,810.00 L1424.42,810.00 L1424.42,810.00 L1421.09,810.00 L1421.09,810.00 L1417.76,810.00 L1417.76,810.00 L1414.43,810.00 L1414.43,810.00 L1411.11,810.00 L1411.11,810.00 L1407.78,810.00 L1407.78,810.00 L1404.45,810.00 L1404.45,810.00 L1401.12,810.00 L1401.12,810.00 L1397.79,810.00 L1397.79,810.00 L1394.47,810.00 L1394.47,810.00 L1391.14,810.00 L1391.14,810.00 L1387.81,810.00 L1387.81,810.00 L1384.48,810.00 L1384.48,810.00 L1381.16,810.00 L1381.16,810.00 L1377.83,810.00 L1377.83,810.00 L1374.50,810.00 L1374.50,810.00 L1371.17,810.00 L1371.17,810.00 L1367.84,810.00 L1367.84,810.00 L1364.52,810.00 L1364.52,810.00 L1361.19,810.00 L1361.19,810.00 L1357.86,810.00 L1357.86,810.00 L1354.53,810.00 L1354.53,810.00 L1351.21,810.00 L1351.21,810.00 L1347.88,810.00 L1347.88,810.00 L1344.55,810.00 L1344.55,810.00 L1341.22,810.00 L1341.22,810.00 L1337.89,810.00 L1337.89,810.00 L1334.57,810.00 L1334.57,810.00 L1331.24,810.00 L1331.24,810.00 L1327.91,810.00 L1327.91,810.00 L1324.58,810.00 L1324.58,810.00 L1321.26,810.00 L1321.26,810.00 L1317.93,810.00 L1317.93,810.00 L1314.60,810.00 L1314.60,810.00 L1311.27,810.00 L1311.27,810.00 L1307.94,810.00 L1307.94,810.00 L1304.62,810.00 L1304.62,810.00 L1301.29,810.00 L1301.29,810.00 L1297.96,810.00 L1297.96,810.00 L1294.63,810.00 L1294.63,810.00 L1291.31,810.00 L1291.31,810.00 L1287.98,810.00 L1287.98,810.00 L1284.65,810.00 L1284.65,810.00 L1281.32,810.00 L1281.32,810.00 L1277.99,810.00 L1277.99,810.00 L1274.67,810.00 L1274.67,810.00 L1271.34,810.00 L1271.34,810.00 L1268.01,810.00 L1268.01,810.00 L1264.68,810.00 L1264.68,810.00 L1261.36,810.00 L1261.36,810.00 L1258.03,810.00 L1258.03,810.00 L1254.70,810.00 Z" fill="#73BF69" fill-opacity="0.8"/><path d="M1254.70,766.44 L1258.03,766.44 L1258.03,765.81 L1261.36,765.81 L1261.36,766.15 L1264.68,766.15 L1264.68,764.82 L1268.01,764.82 L1268.01,762.38 L1271.34,762.38 L1271.34,765.31 L1274.67,765.31 L1274.67,765.70 L1277.99,765.70 L1277.99,766.53 L1281.32,766.53 L1281.32,765.94 L1284.65,765.94 L1284.65,764.94 L1287.98,764.94 L1287.98,764.63 L1291.31,764.63 L1291.31,764.82 L1294.63,764.82 L1294.63,762.26 L1297.96,762.26 L1297.96,766.45 L1301.29,766.45 L1301.29,763.83 L1304.62,763.83 L1304.62,763.31 L1307.94,763.31 L1307.94,763.97 L1311.27,763.97 L1311.27,763.80 L1314.60,763.80 L1314.60,766.36 L1317.93,766.36 L1317.93,765.00 L1321.26,765.00 L1321.26,764.86 L1324.58,764.86 L1324.58,765.22 L1327.91,765.22 L1327.91,761.71 L1331.24,761.71 L1331.24,764.97 L1334.57,764.97 L1334.57,765.47 L1337.89,765.47 L1337.89,766.12 L1341.22,766.12 L1341.22,766.02 L1344.55,766.02 L1344.55,761.85 L1347.88,761.85 L1347.88,764.13 L1351.21,764.13 L1351.21,765.06 L1354.53,765.06 L1354.53,764.66 L1357.86,764.66 L1357.86,763.16 L1361.19,763.16 L1361.19,762.25 L1364.52,762.25 L1364.52,766.20 L1367.84,766.20 L1367.84,766.62 L1371.17,766.62 L1371.17,765.67 L1374.50,765.67 L1374.50,761.54 L1377.83,761.54 L1377.83,764.54 L1381.16,764.54 L1381.16,765.14 L1384.48,765.14 L1384.48,763.36 L1387.81,763.36 L1387.81,763.14 L1391.14,763.14 L1391.14,764.88 L1394.47,764.88 L1394.47,766.93 L1397.79,766.93 L1397.79,765.82 L1401.12,765.82 L1401.12,764.08 L1404.45,764.08 L1404.45,763.84 L1407.78,763.84 L1407.78,765.05 L1411.11,765.05 L1411.11,765.46 L1414.43,765.46 L1414.43,766.04 L1417.76,766.04 L1417.76,765.52 L1421.09,765.52 L1421.09,765.30 L1424.42,765.30 L1424.42,766.76 L1427.74,766.76 L1427.74,765.47 L1431.07,765.47 L1431.07,762.21 L1434.40,762.21 L1434.40,766.21 L1437.73,766.21 L1437.73,766.72 L1441.06,766.72 L1441.06,766.64 L1444.38,766.64 L1444.38,761.15 L1447.71,761.15 L1447.71,765.52 L1451.04,765.52 L1451.04,765.18 L1454.37,765.18 L1454.37,766.28 L1457.69,766.28 L1457.69,762.32 L1461.02,762.32 L1461.02,766.84 L1464.35,766.84 L1464.35,764.97 L1467.68,764.97 L1467.68,764.81 L1471.01,764.81 L1471.01,763.99 L1474.33,763.99 L1474.33,762.58 L1477.66,762.58 L1477.66,762.63 L1480.99,762.63 L1480.99,764.97 L1484.32,764.97 L1484.32,764.69 L1487.64,764.69 L1487.64,765.35 L1490.97,765.35 L1490.97,763.24 L1494.30,763.24 L1494.30,766.55 L1497.63,766.55 L1497.63,766.21 L1500.96,766.21 L1500.96,763.13 L1504.28,763.13 L1504.28,763.58 L1507.61,763.58 L1507.61,767.43 L1510.94,767.43 L1510.94,766.18 L1514.27,766.18 L1514.27,764.20 L1517.59,764.20 L1517.59,764.56 L1520.92,764.56 L1520.92,764.61 L1524.25,764.61 L1524.25,764.67 L1527.58,764.67 L1527.58,764.01 L1530.91,764.01 L1530.91,765.14 L1534.23,765.14 L1534.23,762.39 L1537.56,762.39 L1537.56,766.77 L1540.89,766.77 L1540.89,766.48 L1544.22,766.48 L1544.22,763.58 L1547.54,763.58 L1547.54,765.43 L1550.87,765.43 L1550.87,761.76 L1554.20,761.76 L1554.20,764.97 L1557.53,764.97 L1557.53,765.45 L1560.86,765.45 L1560.86,764.92 L1564.18,764.92 L1564.18,765.12 L1567.51,765.12 L1567.51,762.71 L1570.84,762.71 L1570.84,765.97 L1574.17,765.97 L1574.17,763.09 L1577.49,763.09 L1577.49,766.07 L1580.82,766.07 L1580.82,765.45 L1584.15,765.45 L1584.15,764.74 L1587.48,764.74 L1587.48,762.62 L1590.81,762.62 L1590.81,765.89 L1594.13,765.89 L1594.13,761.76 L1597.46,761.76 L1597.46,762.48 L1600.79,762.48 L1600.79,766.22 L1604.12,766.22 L1604.12,763.64 L1607.44,763.64 L1607.44,766.42 L1610.77,766.42 L1610.77,767.46 L1614.10,767.46 L1614.10,766.29 L1617.43,766.29 L1617.43,763.20 L1620.76,763.20 L1620.76,766.98 L1624.08,766.98 L1624.08,762.71 L1627.41,762.71 L1627.41,765.33 L1630.74,765.33 L1630.74,764.73 L1634.07,764.73 L1634.07,763.29 L1637.39,763.29 L1637.39,764.75 L1640.72,764.75 L1640.72,765.67 L1644.05,765.67 L1644.05,765.63 L1647.38,765.63 L1647.38,764.91 L1650.71,764.91 L1650.71,764.39 L1654.03,764.39 L1654.03,766.55 L1657.36,766.55 L1657.36,766.70 L1660.69,766.70 L1660.69,766.61 L1664.02,766.61 L1664.02,763.85 L1667.34,763.85 L1667.34,767.02 L1670.67,767.02 L1670.67,766.48 L1674.00,766.48 L1674.00,763.41 L1677.33,763.41 L1677.33,766.61 L1680.66,766.61 L1680.66,763.70 L1683.98,763.70 L1683.98,765.73 L1687.31,765.73 L1687.31,766.08 L1690.64,766.08 L1690.64,763.24 L1693.97,763.24 L1693.97,764.40 L1697.29,764.40 L1697.29,764.44 L1700.62,764.44 L1700.62,765.40 L1703.95,765.40 L1703.95,765.19 L1707.28,765.19 L1707.28,765.50 L1710.61,765.50 L1710.61,765.71 L1713.93,765.71 L1713.93,766.01 L1717.26,766.01 L1717.26,763.66 L1720.59,763.66 L1720.59,769.20 L1723.92,769.20 L1723.92,765.18 L1727.24,765.18 L1727.24,763.05 L1730.57,763.05 L1730.57,766.22 L1733.90,766.22 L1733.90,765.18 L1737.23,765.18 L1737.23,762.31 L1740.56,762.31 L1740.56,762.07 L1743.88,762.07 L1743.88,764.83 L1747.21,764.83 L1747.21,765.70 L1750.54,765.70 L1750.54,761.87 L1753.87,761.87 L1753.87,763.14 L1757.19,763.14 L1757.19,761.89 L1760.52,761.89 L1760.52,765.33 L1763.85,765.33 L1763.85,764.89 L1767.18,764.89 L1767.18,761.92 L1770.51,761.92 L1770.51,765.36 L1773.83,765.36 L1773.83,763.92 L1777.16,763.92 L1777.16,761.63 L1780.49,761.63 L1780.49,766.27 L1783.82,766.27 L1783.82,764.16 L1787.14,764.16 L1787.14,764.73 L1790.47,764.73 L1790.47,765.91 L1793.80,765.91 L1793.80,763.18 L1797.13,763.18 L1797.13,765.76 L1800.46,765.76 L1800.46,765.41 L1803.78,765.41 L1803.78,766.84 L1807.11,766.84 L1807.11,765.30 L1810.44,765.30 L1810.44,762.07 L1813.77,762.07 L1813.77,765.00 L1817.09,765.00 L1817.09,763.22 L1820.42,763.22 L1820.42,761.62 L1823.75,761.62 L1823.75,762.93 L1827.08,762.93 L1827.08,764.51 L1830.41,764.51 L1830.41,765.09 L1833.73,765.09 L1833.73,762.12 L1837.06,762.12 L1837.06,764.96 L1840.39,764.96 L1840.39,763.19 L1843.72,763.19 L1843.72,765.41 L1847.04,765.41 L1847.04,762.04 L1850.37,762.04 L1850.37,761.74 L1853.70,761.74 L1853.70,785.86 L1850.37,785.86 L1850.37,786.40 L1847.04,786.40 L1847.04,787.70 L1843.72,787.70 L1843.72,786.78 L1840.39,786.78 L1840.39,787.46 L1837.06,787.46 L1837.06,786.16 L1833.73,786.16 L1833.73,787.60 L1830.41,787.60 L1830.41,787.41 L1827.08,787.41 L1827.08,786.69 L1823.75,786.69 L1823.75,785.81 L1820.42,785.81 L1820.42,786.64 L1817.09,786.64 L1817.09,787.62 L1813.77,787.62 L1813.77,786.23 L1810.44,786.23 L1810.44,787.63 L1807.11,787.63 L1807.11,788.50 L1803.78,788.50 L1803.78,787.80 L1800.46,787.80 L1800.46,787.85 L1797.13,787.85 L1797.13,786.73 L1793.80,786.73 L1793.80,787.89 L1790.47,787.89 L1790.47,787.51 L1787.14,787.51 L1787.14,787.25 L1783.82,787.25 L1783.82,788.10 L1780.49,788.10 L1780.49,785.64 L1777.16,785.64 L1777.16,786.77 L1773.83,786.77 L1773.83,787.85 L1770.51,787.85 L1770.51,786.03 L1767.18,786.03 L1767.18,787.41 L1763.85,787.41 L1763.85,787.80 L1760.52,787.80 L1760.52,786.17 L1757.19,786.17 L1757.19,786.52 L1753.87,786.52 L1753.87,785.86 L1750.54,785.86 L1750.54,787.83 L1747.21,787.83 L1747.21,787.76 L1743.88,787.76 L1743.88,786.12 L1740.56,786.12 L1740.56,786.14 L1737.23,786.14 L1737.23,787.76 L1733.90,787.76 L1733.90,788.01 L1730.57,788.01 L1730.57,786.36 L1727.24,786.36 L1727.24,787.65 L1723.92,787.65 L1723.92,789.82 L1720.59,789.82 L1720.59,787.12 L1717.26,787.12 L1717.26,787.97 L1713.93,787.97 L1713.93,787.78 L1710.61,787.78 L1710.61,787.70 L1707.28,787.70 L1707.28,787.62 L1703.95,787.62 L1703.95,787.72 L1700.62,787.72 L1700.62,787.13 L1697.29,787.13 L1697.29,787.25 L1693.97,787.25 L1693.97,786.62 L1690.64,786.62 L1690.64,788.21 L1687.31,788.21 L1687.31,787.95 L1683.98,787.95 L1683.98,786.99 L1680.66,786.99 L1680.66,788.37 L1677.33,788.37 L1677.33,786.52 L1674.00,786.52 L1674.00,788.27 L1670.67,788.27 L1670.67,788.61 L1667.34,788.61 L1667.34,787.03 L1664.02,787.03 L1664.02,788.54 L1660.69,788.54 L1660.69,788.40 L1657.36,788.40 L1657.36,788.32 L1654.03,788.32 L1654.03,787.31 L1650.71,787.31 L1650.71,787.65 L1647.38,787.65 L1647.38,788.04 L1644.05,788.04 L1644.05,787.97 L1640.72,787.97 L1640.72,787.25 L1637.39,787.25 L1637.39,786.67 L1634.07,786.67 L1634.07,787.15 L1630.74,787.15 L1630.74,787.59 L1627.41,787.59 L1627.41,786.44 L1624.08,786.44 L1624.08,788.46 L1620.76,788.46 L1620.76,786.42 L1617.43,786.42 L1617.43,788.06 L1614.10,788.06 L1614.10,788.71 L1610.77,788.71 L1610.77,788.38 L1607.44,788.38 L1607.44,786.94 L1604.12,786.94 L1604.12,788.12 L1600.79,788.12 L1600.79,786.23 L1597.46,786.23 L1597.46,785.83 L1594.13,785.83 L1594.13,788.02 L1590.81,788.02 L1590.81,786.35 L1587.48,786.35 L1587.48,787.39 L1584.15,787.39 L1584.15,787.84 L1580.82,787.84 L1580.82,787.87 L1577.49,787.87 L1577.49,786.62 L1574.17,786.62 L1574.17,788.03 L1570.84,788.03 L1570.84,786.19 L1567.51,786.19 L1567.51,787.66 L1564.18,787.66 L1564.18,787.63 L1560.86,787.63 L1560.86,787.94 L1557.53,787.94 L1557.53,787.57 L1554.20,787.57 L1554.20,786.00 L1550.87,786.00 L1550.87,787.86 L1547.54,787.86 L1547.54,786.75 L1544.22,786.75 L1544.22,788.18 L1540.89,788.18 L1540.89,788.47 L1537.56,788.47 L1537.56,786.06 L1534.23,786.06 L1534.23,787.49 L1530.91,787.49 L1530.91,787.03 L1527.58,787.03 L1527.58,787.28 L1524.25,787.28 L1524.25,787.21 L1520.92,787.21 L1520.92,787.35 L1517.59,787.35 L1517.59,786.97 L1514.27,786.97 L1514.27,788.02 L1510.94,788.02 L1510.94,788.73 L1507.61,788.73 L1507.61,786.65 L1504.28,786.65 L1504.28,786.47 L1500.96,786.47 L1500.96,788.24 L1497.63,788.24 L1497.63,788.43 L1494.30,788.43 L1494.30,786.76 L1490.97,786.76 L1490.97,787.76 L1487.64,787.76 L1487.64,787.25 L1484.32,787.25 L1484.32,787.42 L1480.99,787.42 L1480.99,786.37 L1477.66,786.37 L1477.66,786.37 L1474.33,786.37 L1474.33,787.03 L1471.01,787.03 L1471.01,787.28 L1467.68,787.28 L1467.68,787.62 L1464.35,787.62 L1464.35,788.75 L1461.02,788.75 L1461.02,786.22 L1457.69,786.22 L1457.69,788.35 L1454.37,788.35 L1454.37,787.55 L1451.04,787.55 L1451.04,787.76 L1447.71,787.76 L1447.71,785.62 L1444.38,785.62 L1444.38,788.34 L1441.06,788.34 L1441.06,788.57 L1437.73,788.57 L1437.73,788.10 L1434.40,788.10 L1434.40,786.14 L1431.07,786.14 L1431.07,787.65 L1427.74,787.65 L1427.74,788.52 L1424.42,788.52 L1424.42,787.72 L1421.09,787.72 L1421.09,787.90 L1417.76,787.90 L1417.76,788.06 L1414.43,788.06 L1414.43,787.74 L1411.11,787.74 L1411.11,787.53 L1407.78,787.53 L1407.78,787.01 L1404.45,787.01 L1404.45,786.85 L1401.12,786.85 L1401.12,787.98 L1397.79,787.98 L1397.79,788.54 L1394.47,788.54 L1394.47,787.37 L1391.14,787.37 L1391.14,786.63 L1387.81,786.63 L1387.81,786.41 L1384.48,786.41 L1384.48,787.66 L1381.16,787.66 L1381.16,787.16 L1377.83,787.16 L1377.83,785.78 L1374.50,785.78 L1374.50,787.84 L1371.17,787.84 L1371.17,788.46 L1367.84,788.46 L1367.84,788.06 L1364.52,788.06 L1364.52,786.21 L1361.19,786.21 L1361.19,786.73 L1357.86,786.73 L1357.86,787.40 L1354.53,787.40 L1354.53,787.30 L1351.21,787.30 L1351.21,787.11 L1347.88,787.11 L1347.88,786.07 L1344.55,786.07 L1344.55,788.13 L1341.22,788.13 L1341.22,788.06 L1337.89,788.06 L1337.89,787.78 L1334.57,787.78 L1334.57,787.46 L1331.24,787.46 L1331.24,785.75 L1327.91,785.75 L1327.91,787.54 L1324.58,787.54 L1324.58,787.45 L1321.26,787.45 L1321.26,787.43 L1317.93,787.43 L1317.93,788.14 L1314.60,788.14 L1314.60,786.85 L1311.27,786.85 L1311.27,787.02 L1307.94,787.02 L1307.94,786.69 L1304.62,786.69 L1304.62,786.98 L1301.29,786.98 L1301.29,788.28 L1297.96,788.28 L1297.96,786.17 L1294.63,786.17 L1294.63,787.36 L1291.31,787.36 L1291.31,787.19 L1287.98,787.19 L1287.98,787.56 L1284.65,787.56 L1284.65,788.13 L1281.32,788.13 L1281.32,788.13 L1277.99,788.13 L1277.99,787.94 L1274.67,787.94 L1274.67,787.77 L1271.34,787.77 L1271.34,786.03 L1268.01,786.03 L1268.01,787.39 L1264.68,787.39 L1264.68,788.31 L1261.36,788.31 L1261.36,788.10 L1258.03,788.10 L1258.03,788.33 L1254.70,788.33 Z" fill="#F2CC3C" fill-opacity="0.8"/><path d="M1254.70,744.71 L1258.03,744.71 L1258.03,743.94 L1261.36,743.94 L1261.36,744.47 L1264.68,744.47 L1264.68,742.76 L1268.01,742.76 L1268.01,739.01 L1271.34,739.01 L1271.34,743.06 L1274.67,743.06 L1274.67,743.72 L1277.99,743.72 L1277.99,745.06 L1281.32,745.06 L1281.32,743.79 L1284.65,743.79 L1284.65,742.46 L1287.98,742.46 L1287.98,742.23 L1291.31,742.23 L1291.31,742.52 L1294.63,742.52 L1294.63,738.20 L1297.96,738.20 L1297.96,744.75 L1301.29,744.75 L1301.29,740.99 L1304.62,740.99 L1304.62,740.20 L1307.94,740.20 L1307.94,741.40 L1311.27,741.40 L1311.27,741.15 L1314.60,741.15 L1314.60,744.23 L1317.93,744.23 L1317.93,742.86 L1321.26,742.86 L1321.26,742.33 L1324.58,742.33 L1324.58,743.06 L1327.91,743.06 L1327.91,737.56 L1331.24,737.56 L1331.24,742.46 L1334.57,742.46 L1334.57,743.38 L1337.89,743.38 L1337.89,744.48 L1341.22,744.48 L1341.22,744.15 L1344.55,744.15 L1344.55,738.00 L1347.88,738.00 L1347.88,741.58 L1351.21,741.58 L1351.21,742.73 L1354.53,742.73 L1354.53,742.08 L1357.86,742.08 L1357.86,739.90 L1361.19,739.90 L1361.19,738.39 L1364.52,738.39 L1364.52,744.08 L1367.84,744.08 L1367.84,745.01 L1371.17,745.01 L1371.17,743.68 L1374.50,743.68 L1374.50,737.62 L1377.83,737.62 L1377.83,742.19 L1381.16,742.19 L1381.16,743.05 L1384.48,743.05 L1384.48,740.14 L1387.81,740.14 L1387.81,739.72 L1391.14,739.72 L1391.14,742.42 L1394.47,742.42 L1394.47,745.58 L1397.79,745.58 L1397.79,743.71 L1401.12,743.71 L1401.12,741.29 L1404.45,741.29 L1404.45,740.73 L1407.78,740.73 L1407.78,742.82 L1411.11,742.82 L1411.11,743.26 L1414.43,743.26 L1414.43,744.04 L1417.76,744.04 L1417.76,743.56 L1421.09,743.56 L1421.09,743.07 L1424.42,743.07 L1424.42,745.25 L1427.74,745.25 L1427.74,743.61 L1431.07,743.61 L1431.07,738.68 L1434.40,738.68 L1434.40,744.68 L1437.73,744.68 L1437.73,745.36 L1441.06,745.36 L1441.06,745.21 L1444.38,745.21 L1444.38,737.53 L1447.71,737.53 L1447.71,743.46 L1451.04,743.46 L1451.04,742.98 L1454.37,742.98 L1454.37,744.62 L1457.69,744.62 L1457.69,739.08 L1461.02,739.08 L1461.02,745.00 L1464.35,745.00 L1464.35,742.78 L1467.68,742.78 L1467.68,742.54 L1471.01,742.54 L1471.01,741.11 L1474.33,741.11 L1474.33,739.35 L1477.66,739.35 L1477.66,739.28 L1480.99,739.28 L1480.99,742.67 L1484.32,742.67 L1484.32,741.88 L1487.64,741.88 L1487.64,743.48 L1490.97,743.48 L1490.97,739.89 L1494.30,739.89 L1494.30,744.63 L1497.63,744.63 L1497.63,744.74 L1500.96,744.74 L1500.96,739.93 L1504.28,739.93 L1504.28,740.36 L1507.61,740.36 L1507.61,746.04 L1510.94,746.04 L1510.94,744.48 L1514.27,744.48 L1514.27,741.29 L1517.59,741.29 L1517.59,741.66 L1520.92,741.66 L1520.92,741.99 L1524.25,741.99 L1524.25,742.07 L1527.58,742.07 L1527.58,741.19 L1530.91,741.19 L1530.91,742.99 L1534.23,742.99 L1534.23,738.77 L1537.56,738.77 L1537.56,745.10 L1540.89,745.10 L1540.89,745.23 L1544.22,745.23 L1544.22,740.62 L1547.54,740.62 L1547.54,743.13 L1550.87,743.13 L1550.87,737.75 L1554.20,737.75 L1554.20,742.56 L1557.53,742.56 L1557.53,743.40 L1560.86,743.40 L1560.86,742.92 L1564.18,742.92 L1564.18,742.64 L1567.51,742.64 L1567.51,738.94 L1570.84,738.94 L1570.84,743.91 L1574.17,743.91 L1574.17,739.92 L1577.49,739.92 L1577.49,744.12 L1580.82,744.12 L1580.82,743.40 L1584.15,743.40 L1584.15,742.33 L1587.48,742.33 L1587.48,738.86 L1590.81,738.86 L1590.81,743.77 L1594.13,743.77 L1594.13,737.42 L1597.46,737.42 L1597.46,739.04 L1600.79,739.04 L1600.79,744.38 L1604.12,744.38 L1604.12,740.74 L1607.44,740.74 L1607.44,744.98 L1610.77,744.98 L1610.77,746.49 L1614.10,746.49 L1614.10,744.97 L1617.43,744.97 L1617.43,740.16 L1620.76,740.16 L1620.76,745.62 L1624.08,745.62 L1624.08,739.25 L1627.41,739.25 L1627.41,743.15 L1630.74,743.15 L1630.74,742.24 L1634.07,742.24 L1634.07,740.14 L1637.39,740.14 L1637.39,742.10 L1640.72,742.10 L1640.72,743.98 L1644.05,743.98 L1644.05,743.84 L1647.38,743.84 L1647.38,742.71 L1650.71,742.71 L1650.71,741.98 L1654.03,741.98 L1654.03,745.02 L1657.36,745.02 L1657.36,744.89 L1660.69,744.89 L1660.69,745.29 L1664.02,745.29 L1664.02,740.81 L1667.34,740.81 L1667.34,745.65 L1670.67,745.65 L1670.67,744.73 L1674.00,744.73 L1674.00,740.35 L1677.33,740.35 L1677.33,744.93 L1680.66,744.93 L1680.66,740.68 L1683.98,740.68 L1683.98,743.88 L1687.31,743.88 L1687.31,744.26 L1690.64,744.26 L1690.64,740.22 L1693.97,740.22 L1693.97,741.69 L1697.29,741.69 L1697.29,741.37 L1700.62,741.37 L1700.62,743.46 L1703.95,743.46 L1703.95,742.92 L1707.28,742.92 L1707.28,743.35 L1710.61,743.35 L1710.61,743.85 L1713.93,743.85 L1713.93,744.19 L1717.26,744.19 L1717.26,740.64 L1720.59,740.64 L1720.59,748.68 L1723.92,748.68 L1723.92,742.96 L1727.24,742.96 L1727.24,739.59 L1730.57,739.59 L1730.57,744.12 L1733.90,744.12 L1733.90,742.86 L1737.23,742.86 L1737.23,738.22 L1740.56,738.22 L1740.56,737.93 L1743.88,737.93 L1743.88,742.35 L1747.21,742.35 L1747.21,743.78 L1750.54,743.78 L1750.54,738.11 L1753.87,738.11 L1753.87,740.08 L1757.19,740.08 L1757.19,738.24 L1760.52,738.24 L1760.52,743.02 L1763.85,743.02 L1763.85,742.55 L1767.18,742.55 L1767.18,738.06 L1770.51,738.06 L1770.51,743.41 L1773.83,743.41 L1773.83,741.39 L1777.16,741.39 L1777.16,737.85 L1780.49,737.85 L1780.49,744.48 L1783.82,744.48 L1783.82,741.38 L1787.14,741.38 L1787.14,742.73 L1790.47,742.73 L1790.47,744.00 L1793.80,744.00 L1793.80,740.01 L1797.13,740.01 L1797.13,744.02 L1800.46,744.02 L1800.46,743.04 L1803.78,743.04 L1803.78,745.19 L1807.11,745.19 L1807.11,743.01 L1810.44,743.01 L1810.44,738.18 L1813.77,738.18 L1813.77,742.70 L1817.09,742.70 L1817.09,739.89 L1820.42,739.89 L1820.42,737.69 L1823.75,737.69 L1823.75,739.47 L1827.08,739.47 L1827.08,741.83 L1830.41,741.83 L1830.41,742.69 L1833.73,742.69 L1833.73,738.09 L1837.06,738.09 L1837.06,742.42 L1840.39,742.42 L1840.39,739.91 L1843.72,739.91 L1843.72,743.30 L1847.04,743.30 L1847.04,738.34 L1850.37,738.34 L1850.37,737.45 L1853.70,737.45 L1853.70,761.74 L1850.37,761.74 L1850.37,762.04 L1847.04,762.04 L1847.04,765.41 L1843.72,765.41 L1843.72,763.19 L1840.39,763.19 L1840.39,764.96 L1837.06,764.96 L1837.06,762.12 L1833.73,762.12 L1833.73,765.09 L1830.41,765.09 L1830.41,764.51 L1827.08,764.51 L1827.08,762.93 L1823.75,762.93 L1823.75,761.62 L1820.42,761.62 L1820.42,763.22 L1817.09,763.22 L1817.09,765.00 L1813.77,765.00 L1813.77,762.07 L1810.44,762.07 L1810.44,765.30 L1807.11,765.30 L1807.11,766.84 L1803.78,766.84 L1803.78,765.41 L1800.46,765.41 L1800.46,765.76 L1797.13,765.76 L1797.13,763.18 L1793.80,763.18 L1793.80,765.91 L1790.47,765.91 L1790.47,764.73 L1787.14,764.73 L1787.14,764.16 L1783.82,764.16 L1783.82,766.27 L1780.49,766.27 L1780.49,761.63 L1777.16,761.63 L1777.16,763.92 L1773.83,763.92 L1773.83,765.36 L1770.51,765.36 L1770.51,761.92 L1767.18,761.92 L1767.18,764.89 L1763.85,764.89 L1763.85,765.33 L1760.52,765.33 L1760.52,761.89 L1757.19,761.89 L1757.19,763.14 L1753.87,763.14 L1753.87,761.87 L1750.54,761.87 L1750.54,765.70 L1747.21,765.70 L1747.21,764.83 L1743.88,764.83 L1743.88,762.07 L1740.56,762.07 L1740.56,762.31 L1737.23,762.31 L1737.23,765.18 L1733.90,765.18 L1733.90,766.22 L1730.57,766.22 L1730.57,763.05 L1727.24,763.05 L1727.24,765.18 L1723.92,765.18 L1723.92,769.20 L1720.59,769.20 L1720.59,763.66 L1717.26,763.66 L1717.26,766.01 L1713.93,766.01 L1713.93,765.71 L1710.61,765.71 L1710.61,765.50 L1707.28,765.50 L1707.28,765.19 L1703.95,765.19 L1703.95,765.40 L1700.62,765.40 L1700.62,764.44 L1697.29,764.44 L1697.29,764.40 L1693.97,764.40 L1693.97,763.24 L1690.64,763.24 L1690.64,766.08 L1687.31,766.08 L1687.31,765.73 L1683.98,765.73 L1683.98,763.70 L1680.66,763.70 L1680.66,766.61 L1677.33,766.61 L1677.33,763.41 L1674.00,763.41 L1674.00,766.48 L1670.67,766.48 L1670.67,767.02 L1667.34,767.02 L1667.34,763.85 L1664.02,763.85 L1664.02,766.61 L1660.69,766.61 L1660.69,766.70 L1657.36,766.70 L1657.36,766.55 L1654.03,766.55 L1654.03,764.39 L1650.71,764.39 L1650.71,764.91 L1647.38,764.91 L1647.38,765.63 L1644.05,765.63 L1644.05,765.67 L1640.72,765.67 L1640.72,764.75 L1637.39,764.75 L1637.39,763.29 L1634.07,763.29 L1634.07,764.73 L1630.74,764.73 L1630.74,765.33 L1627.41,765.33 L1627.41,762.71 L1624.08,762.71 L1624.08,766.98 L1620.76,766.98 L1620.76,763.20 L1617.43,763.20 L1617.43,766.29 L1614.10,766.29 L1614.10,767.46 L1610.77,767.46 L1610.77,766.42 L1607.44,766.42 L1607.44,763.64 L1604.12,763.64 L1604.12,766.22 L1600.79,766.22 L1600.79,762.48 L1597.46,762.48 L1597.46,761.76 L1594.13,761.76 L1594.13,765.89 L1590.81,765.89 L1590.81,762.62 L1587.48,762.62 L1587.48,764.74 L1584.15,764.74 L1584.15,765.45 L1580.82,765.45 L1580.82,766.07 L1577.49,766.07 L1577.49,763.09 L1574.17,763.09 L1574.17,765.97 L1570.84,765.97 L1570.84,762.71 L1567.51,762.71 L1567.51,765.12 L1564.18,765.12 L1564.18,764.92 L1560.86,764.92 L1560.86,765.45 L1557.53,765.45 L1557.53,764.97 L1554.20,764.97 L1554.20,761.76 L1550.87,761.76 L1550.87,765.43 L1547.54,765.43 L1547.54,763.58 L1544.22,763.58 L1544.22,766.48 L1540.89,766.48 L1540.89,766.77 L1537.56,766.77 L1537.56,762.39 L1534.23,762.39 L1534.23,765.14 L1530.91,765.14 L1530.91,764.01 L1527.58,764.01 L1527.58,764.67 L1524.25,764.67 L1524.25,764.61 L1520.92,764.61 L1520.92,764.56 L1517.59,764.56 L1517.59,764.20 L1514.27,764.20 L1514.27,766.18 L1510.94,766.18 L1510.94,767.43 L1507.61,767.43 L1507.61,763.58 L1504.28,763.58 L1504.28,763.13 L1500.96,763.13 L1500.96,766.21 L1497.63,766.21 L1497.63,766.55 L1494.30,766.55 L1494.30,763.24 L1490.97,763.24 L1490.97,765.35 L1487.64,765.35 L1487.64,764.69 L1484.32,764.69 L1484.32,764.97 L1480.99,764.97 L1480.99,762.63 L1477.66,762.63 L1477.66,762.58 L1474.33,762.58 L1474.33,763.99 L1471.01,763.99 L1471.01,764.81 L1467.68,764.81 L1467.68,764.97 L1464.35,764.97 L1464.35,766.84 L1461.02,766.84 L1461.02,762.32 L1457.69,762.32 L1457.69,766.28 L1454.37,766.28 L1454.37,765.18 L1451.04,765.18 L1451.04,765.52 L1447.71,765.52 L1447.71,761.15 L1444.38,761.15 L1444.38,766.64 L1441.06,766.64 L1441.06,766.72 L1437.73,766.72 L1437.73,766.21 L1434.40,766.21 L1434.40,762.21 L1431.07,762.21 L1431.07,765.47 L1427.74,765.47 L1427.74,766.76 L1424.42,766.76 L1424.42,765.30 L1421.09,765.30 L1421.09,765.52 L1417.76,765.52 L1417.76,766.04 L1414.43,766.04 L1414.43,765.46 L1411.11,765.46 L1411.11,765.05 L1407.78,765.05 L1407.78,763.84 L1404.45,763.84 L1404.45,764.08 L1401.12,764.08 L1401.12,765.82 L1397.79,765.82 L1397.79,766.93 L1394.47,766.93 L1394.47,764.88 L1391.14,764.88 L1391.14,763.14 L1387.81,763.14 L1387.81,763.36 L1384.48,763.36 L1384.48,765.14 L1381.16,765.14 L1381.16,764.54 L1377.83,764.54 L1377.83,761.54 L1374.50,761.54 L1374.50,765.67 L1371.17,765.67 L1371.17,766.62 L1367.84,766.62 L1367.84,766.20 L1364.52,766.20 L1364.52,762.25 L1361.19,762.25 L1361.19,763.16 L1357.86,763.16 L1357.86,764.66 L1354.53,764.66 L1354.53,765.06 L1351.21,765.06 L1351.21,764.13 L1347.88,764.13 L1347.88,761.85 L1344.55,761.85 L1344.55,766.02 L1341.22,766.02 L1341.22,766.12 L1337.89,766.12 L1337.89,765.47 L1334.57,765.47 L1334.57,764.97 L1331.24,764.97 L1331.24,761.71 L1327.91,761.71 L1327.91,765.22 L1324.58,765.22 L1324.58,764.86 L1321.26,764.86 L1321.26,765.00 L1317.93,765.00 L1317.93,766.36 L1314.60,766.36 L1314.60,763.80 L1311.27,763.80 L1311.27,763.97 L1307.94,763.97 L1307.94,763.31 L1304.62,763.31 L1304.62,763.83 L1301.29,763.83 L1301.29,766.45 L1297.96,766.45 L1297.96,762.26 L1294.63,762.26 L1294.63,764.82 L1291.31,764.82 L1291.31,764.63 L1287.98,764.63 L1287.98,764.94 L1284.65,764.94 L1284.65,765.94 L1281.32,765.94 L1281.32,766.53 L1277.99,766.53 L1277.99,765.70 L1274.67,765.70 L1274.67,765.31 L1271.34,765.31 L1271.34,762.38 L1268.01,762.38 L1268.01,764.82 L1264.68,764.82 L1264.68,766.15 L1261.36,766.15 L1261.36,765.81 L1258.03,765.81 L1258.03,766.44 L1254.70,766.44 Z" fill="#8AB8FF" fill-opacity="0.8"/><path d="M1254.70,722.62 L1258.03,722.62 L1258.03,721.76 L1261.36,721.76 L1261.36,722.04 L1264.68,722.04 L1264.68,719.90 L1268.01,719.90 L1268.01,715.11 L1271.34,715.11 L1271.34,720.50 L1274.67,720.50 L1274.67,721.76 L1277.99,721.76 L1277.99,723.21 L1281.32,723.21 L1281.32,721.53 L1284.65,721.53 L1284.65,719.54 L1287.98,719.54 L1287.98,719.02 L1291.31,719.02 L1291.31,719.59 L1294.63,719.59 L1294.63,714.14 L1297.96,714.14 L1297.96,722.70 L1301.29,722.70 L1301.29,717.54 L1304.62,717.54 L1304.62,716.57 L1307.94,716.57 L1307.94,718.50 L1311.27,718.50 L1311.27,718.05 L1314.60,718.05 L1314.60,721.93 L1317.93,721.93 L1317.93,720.49 L1321.26,720.49 L1321.26,719.78 L1324.58,719.78 L1324.58,720.03 L1327.91,720.03 L1327.91,713.04 L1331.24,713.04 L1331.24,719.63 L1334.57,719.63 L1334.57,720.93 L1337.89,720.93 L1337.89,722.28 L1341.22,722.28 L1341.22,721.95 L1344.55,721.95 L1344.55,713.67 L1347.88,713.67 L1347.88,718.14 L1351.21,718.14 L1351.21,720.20 L1354.53,720.20 L1354.53,719.19 L1357.86,719.19 L1357.86,715.73 L1361.19,715.73 L1361.19,713.88 L1364.52,713.88 L1364.52,721.79 L1367.84,721.79 L1367.84,722.77 L1371.17,722.77 L1371.17,721.48 L1374.50,721.48 L1374.50,713.06 L1377.83,713.06 L1377.83,719.14 L1381.16,719.14 L1381.16,720.49 L1384.48,720.49 L1384.48,716.34 L1387.81,716.34 L1387.81,715.83 L1391.14,715.83 L1391.14,719.54 L1394.47,719.54 L1394.47,723.39 L1397.79,723.39 L1397.79,721.18 L1401.12,721.18 L1401.12,718.20 L1404.45,718.20 L1404.45,717.60 L1407.78,717.60 L1407.78,720.12 L1411.11,720.12 L1411.11,720.40 L1414.43,720.40 L1414.43,721.31 L1417.76,721.31 L1417.76,721.26 L1421.09,721.26 L1421.09,720.32 L1424.42,720.32 L1424.42,723.23 L1427.74,723.23 L1427.74,720.94 L1431.07,720.94 L1431.07,714.38 L1434.40,714.38 L1434.40,722.66 L1437.73,722.66 L1437.73,723.77 L1441.06,723.77 L1441.06,723.27 L1444.38,723.27 L1444.38,713.11 L1447.71,713.11 L1447.71,720.89 L1451.04,720.89 L1451.04,720.18 L1454.37,720.18 L1454.37,722.25 L1457.69,722.25 L1457.69,715.40 L1461.02,715.40 L1461.02,722.86 L1464.35,722.86 L1464.35,720.31 L1467.68,720.31 L1467.68,719.78 L1471.01,719.78 L1471.01,717.84 L1474.33,717.84 L1474.33,715.77 L1477.66,715.77 L1477.66,715.43 L1480.99,715.43 L1480.99,719.86 L1484.32,719.86 L1484.32,718.78 L1487.64,718.78 L1487.64,721.01 L1490.97,721.01 L1490.97,716.60 L1494.30,716.60 L1494.30,722.44 L1497.63,722.44 L1497.63,722.74 L1500.96,722.74 L1500.96,716.72 L1504.28,716.72 L1504.28,716.67 L1507.61,716.67 L1507.61,724.35 L1510.94,724.35 L1510.94,722.82 L1514.27,722.82 L1514.27,718.25 L1517.59,718.25 L1517.59,718.62 L1520.92,718.62 L1520.92,718.82 L1524.25,718.82 L1524.25,718.89 L1527.58,718.89 L1527.58,718.05 L1530.91,718.05 L1530.91,720.24 L1534.23,720.24 L1534.23,714.79 L1537.56,714.79 L1537.56,723.05 L1540.89,723.05 L1540.89,723.33 L1544.22,723.33 L1544.22,716.98 L1547.54,716.98 L1547.54,720.45 L1550.87,720.45 L1550.87,713.73 L1554.20,713.73 L1554.20,719.85 L1557.53,719.85 L1557.53,721.20 L1560.86,721.20 L1560.86,720.24 L1564.18,720.24 L1564.18,719.59 L1567.51,719.59 L1567.51,714.59 L1570.84,714.59 L1570.84,721.57 L1574.17,721.57 L1574.17,716.19 L1577.49,716.19 L1577.49,722.01 L1580.82,722.01 L1580.82,720.70 L1584.15,720.70 L1584.15,719.30 L1587.48,719.30 L1587.48,714.87 L1590.81,714.87 L1590.81,721.34 L1594.13,721.34 L1594.13,712.95 L1597.46,712.95 L1597.46,715.07 L1600.79,715.07 L1600.79,722.20 L1604.12,722.20 L1604.12,717.17 L1607.44,717.17 L1607.44,722.73 L1610.77,722.73 L1610.77,724.99 L1614.10,724.99 L1614.10,722.66 L1617.43,722.66 L1617.43,716.33 L1620.76,716.33 L1620.76,723.84 L1624.08,723.84 L1624.08,715.58 L1627.41,715.58 L1627.41,720.49 L1630.74,720.49 L1630.74,719.49 L1634.07,719.49 L1634.07,716.54 L1637.39,716.54 L1637.39,719.17 L1640.72,719.17 L1640.72,721.93 L1644.05,721.93 L1644.05,721.67 L1647.38,721.67 L1647.38,720.08 L1650.71,720.08 L1650.71,718.68 L1654.03,718.68 L1654.03,723.09 L1657.36,723.09 L1657.36,722.49 L1660.69,722.49 L1660.69,723.54 L1664.02,723.54 L1664.02,717.54 L1667.34,717.54 L1667.34,723.74 L1670.67,723.74 L1670.67,722.66 L1674.00,722.66 L1674.00,716.72 L1677.33,716.72 L1677.33,723.15 L1680.66,723.15 L1680.66,717.41 L1683.98,717.41 L1683.98,721.56 L1687.31,721.56 L1687.31,721.91 L1690.64,721.91 L1690.64,716.18 L1693.97,716.18 L1693.97,718.94 L1697.29,718.94 L1697.29,718.06 L1700.62,718.06 L1700.62,721.13 L1703.95,721.13 L1703.95,719.96 L1707.28,719.96 L1707.28,721.10 L1710.61,721.10 L1710.61,721.74 L1713.93,721.74 L1713.93,721.78 L1717.26,721.78 L1717.26,717.35 L1720.59,717.35 L1720.59,727.93 L1723.92,727.93 L1723.92,720.29 L1727.24,720.29 L1727.24,715.89 L1730.57,715.89 L1730.57,721.64 L1733.90,721.64 L1733.90,720.26 L1737.23,720.26 L1737.23,713.82 L1740.56,713.82 L1740.56,713.86 L1743.88,713.86 L1743.88,719.36 L1747.21,719.36 L1747.21,721.21 L1750.54,721.21 L1750.54,713.79 L1753.87,713.79 L1753.87,716.49 L1757.19,716.49 L1757.19,714.23 L1760.52,714.23 L1760.52,720.18 L1763.85,720.18 L1763.85,720.12 L1767.18,720.12 L1767.18,713.70 L1770.51,713.70 L1770.51,721.16 L1773.83,721.16 L1773.83,718.29 L1777.16,718.29 L1777.16,713.49 L1780.49,713.49 L1780.49,722.18 L1783.82,722.18 L1783.82,718.29 L1787.14,718.29 L1787.14,720.12 L1790.47,720.12 L1790.47,721.96 L1793.80,721.96 L1793.80,716.33 L1797.13,716.33 L1797.13,721.71 L1800.46,721.71 L1800.46,720.04 L1803.78,720.04 L1803.78,723.37 L1807.11,723.37 L1807.11,720.57 L1810.44,720.57 L1810.44,713.88 L1813.77,713.88 L1813.77,719.73 L1817.09,719.73 L1817.09,715.97 L1820.42,715.97 L1820.42,713.31 L1823.75,713.31 L1823.75,715.68 L1827.08,715.68 L1827.08,719.00 L1830.41,719.00 L1830.41,720.24 L1833.73,720.24 L1833.73,713.65 L1837.06,713.65 L1837.06,719.34 L1840.39,719.34 L1840.39,716.49 L1843.72,716.49 L1843.72,720.83 L1847.04,720.83 L1847.04,713.88 L1850.37,713.88 L1850.37,713.24 L1853.70,713.24 L1853.70,737.45 L1850.37,737.45 L1850.37,738.34 L1847.04,738.34 L1847.04,743.30 L1843.72,743.30 L1843.72,739.91 L1840.39,739.91 L1840.39,742.42 L1837.06,742.42 L1837.06,738.09 L1833.73,738.09 L1833.73,742.69 L1830.41,742.69 L1830.41,741.83 L1827.08,741.83 L1827.08,739.47 L1823.75,739.47 L1823.75,737.69 L1820.42,737.69 L1820.42,739.89 L1817.09,739.89 L1817.09,742.70 L1813.77,742.70 L1813.77,738.18 L1810.44,738.18 L1810.44,743.01 L1807.11,743.01 L1807.11,745.19 L1803.78,745.19 L1803.78,743.04 L1800.46,743.04 L1800.46,744.02 L1797.13,744.02 L1797.13,740.01 L1793.80,740.01 L1793.80,744.00 L1790.47,744.00 L1790.47,742.73 L1787.14,742.73 L1787.14,741.38 L1783.82,741.38 L1783.82,744.48 L1780.49,744.48 L1780.49,737.85 L1777.16,737.85 L1777.16,741.39 L1773.83,741.39 L1773.83,743.41 L1770.51,743.41 L1770.51,738.06 L1767.18,738.06 L1767.18,742.55 L1763.85,742.55 L1763.85,743.02 L1760.52,743.02 L1760.52,738.24 L1757.19,738.24 L1757.19,740.08 L1753.87,740.08 L1753.87,738.11 L1750.54,738.11 L1750.54,743.78 L1747.21,743.78 L1747.21,742.35 L1743.88,742.35 L1743.88,737.93 L1740.56,737.93 L1740.56,738.22 L1737.23,738.22 L1737.23,742.86 L1733.90,742.86 L1733.90,744.12 L1730.57,744.12 L1730.57,739.59 L1727.24,739.59 L1727.24,742.96 L1723.92,742.96 L1723.92,748.68 L1720.59,748.68 L1720.59,740.64 L1717.26,740.64 L1717.26,744.19 L1713.93,744.19 L1713.93,743.85 L1710.61,743.85 L1710.61,743.35 L1707.28,743.35 L1707.28,742.92 L1703.95,742.92 L1703.95,743.46 L1700.62,743.46 L1700.62,741.37 L1697.29,741.37 L1697.29,741.69 L1693.97,741.69 L1693.97,740.22 L1690.64,740.22 L1690.64,744.26 L1687.31,744.26 L1687.31,743.88 L1683.98,743.88 L1683.98,740.68 L1680.66,740.68 L1680.66,744.93 L1677.33,744.93 L1677.33,740.35 L1674.00,740.35 L1674.00,744.73 L1670.67,744.73 L1670.67,745.65 L1667.34,745.65 L1667.34,740.81 L1664.02,740.81 L1664.02,745.29 L1660.69,745.29 L1660.69,744.89 L1657.36,744.89 L1657.36,745.02 L1654.03,745.02 L1654.03,741.98 L1650.71,741.98 L1650.71,742.71 L1647.38,742.71 L1647.38,743.84 L1644.05,743.84 L1644.05,743.98 L1640.72,743.98 L1640.72,742.10 L1637.39,742.10 L1637.39,740.14 L1634.07,740.14 L1634.07,742.24 L1630.74,742.24 L1630.74,743.15 L1627.41,743.15 L1627.41,739.25 L1624.08,739.25 L1624.08,745.62 L1620.76,745.62 L1620.76,740.16 L1617.43,740.16 L1617.43,744.97 L1614.10,744.97 L1614.10,746.49 L1610.77,746.49 L1610.77,744.98 L1607.44,744.98 L1607.44,740.74 L1604.12,740.74 L1604.12,744.38 L1600.79,744.38 L1600.79,739.04 L1597.46,739.04 L1597.46,737.42 L1594.13,737.42 L1594.13,743.77 L1590.81,743.77 L1590.81,738.86 L1587.48,738.86 L1587.48,742.33 L1584.15,742.33 L1584.15,743.40 L1580.82,743.40 L1580.82,744.12 L1577.49,744.12 L1577.49,739.92 L1574.17,739.92 L1574.17,743.91 L1570.84,743.91 L1570.84,738.94 L1567.51,738.94 L1567.51,742.64 L1564.18,742.64 L1564.18,742.92 L1560.86,742.92 L1560.86,743.40 L1557.53,743.40 L1557.53,742.56 L1554.20,742.56 L1554.20,737.75 L1550.87,737.75 L1550.87,743.13 L1547.54,743.13 L1547.54,740.62 L1544.22,740.62 L1544.22,745.23 L1540.89,745.23 L1540.89,745.10 L1537.56,745.10 L1537.56,738.77 L1534.23,738.77 L1534.23,742.99 L1530.91,742.99 L1530.91,741.19 L1527.58,741.19 L1527.58,742.07 L1524.25,742.07 L1524.25,741.99 L1520.92,741.99 L1520.92,741.66 L1517.59,741.66 L1517.59,741.29 L1514.27,741.29 L1514.27,744.48 L1510.94,744.48 L1510.94,746.04 L1507.61,746.04 L1507.61,740.36 L1504.28,740.36 L1504.28,739.93 L1500.96,739.93 L1500.96,744.74 L1497.63,744.74 L1497.63,744.63 L1494.30,744.63 L1494.30,739.89 L1490.97,739.89 L1490.97,743.48 L1487.64,743.48 L1487.64,741.88 L1484.32,741.88 L1484.32,742.67 L1480.99,742.67 L1480.99,739.28 L1477.66,739.28 L1477.66,739.35 L1474.33,739.35 L1474.33,741.11 L1471.01,741.11 L1471.01,742.54 L1467.68,742.54 L1467.68,742.78 L1464.35,742.78 L1464.35,745.00 L1461.02,745.00 L1461.02,739.08 L1457.69,739.08 L1457.69,744.62 L1454.37,744.62 L1454.37,742.98 L1451.04,742.98 L1451.04,743.46 L1447.71,743.46 L1447.71,737.53 L1444.38,737.53 L1444.38,745.21 L1441.06,745.21 L1441.06,745.36 L1437.73,745.36 L1437.73,744.68 L1434.40,744.68 L1434.40,738.68 L1431.07,738.68 L1431.07,743.61 L1427.74,743.61 L1427.74,745.25 L1424.42,745.25 L1424.42,743.07 L1421.09,743.07 L1421.09,743.56 L1417.76,743.56 L1417.76,744.04 L1414.43,744.04 L1414.43,743.26 L1411.11,743.26 L1411.11,742.82 L1407.78,742.82 L1407.78,740.73 L1404.45,740.73 L1404.45,741.29 L1401.12,741.29 L1401.12,743.71 L1397.79,743.71 L1397.79,745.58 L1394.47,745.58 L1394.47,742.42 L1391.14,742.42 L1391.14,739.72 L1387.81,739.72 L1387.81,740.14 L1384.48,740.14 L1384.48,743.05 L1381.16,743.05 L1381.16,742.19 L1377.83,742.19 L1377.83,737.62 L1374.50,737.62 L1374.50,743.68 L1371.17,743.68 L1371.17,745.01 L1367.84,745.01 L1367.84,744.08 L1364.52,744.08 L1364.52,738.39 L1361.19,738.39 L1361.19,739.90 L1357.86,739.90 L1357.86,742.08 L1354.53,742.08 L1354.53,742.73 L1351.21,742.73 L1351.21,741.58 L1347.88,741.58 L1347.88,738.00 L1344.55,738.00 L1344.55,744.15 L1341.22,744.15 L1341.22,744.48 L1337.89,744.48 L1337.89,743.38 L1334.57,743.38 L1334.57,742.46 L1331.24,742.46 L1331.24,737.56 L1327.91,737.56 L1327.91,743.06 L1324.58,743.06 L1324.58,742.33 L1321.26,742.33 L1321.26,742.86 L1317.93,742.86 L1317.93,744.23 L1314.60,744.23 L1314.60,741.15 L1311.27,741.15 L1311.27,741.40 L1307.94,741.40 L1307.94,740.20 L1304.62,740.20 L1304.62,740.99 L1301.29,740.99 L1301.29,744.75 L1297.96,744.75 L1297.96,738.20 L1294.63,738.20 L1294.63,742.52 L1291.31,742.52 L1291.31,742.23 L1287.98,742.23 L1287.98,742.46 L1284.65,742.46 L1284.65,743.79 L1281.32,743.79 L1281.32,745.06 L1277.99,745.06 L1277.99,743.72 L1274.67,743.72 L1274.67,743.06 L1271.34,743.06 L1271.34,739.01 L1268.01,739.01 L1268.01,742.76 L1264.68,742.76 L1264.68,744.47 L1261.36,744.47 L1261.36,743.94 L1258.03,743.94 L1258.03,744.71 L1254.70,744.71 Z" fill="#FA7D2D" fill-opacity="0.8"/></svg><div id="tx"><div style="position:absolute;left:0px;top:0;width:57px;height:1px;background:#2a2d33"></div><div style="position:absolute;left:63px;top:0;width:93px;height:1px;background:#2a2d33"></div><div style="position:absolute;left:174px;top:0;width:53px;height:1px;background:#2a2d33"></div><div style="position:absolute;left:233px;top:0;width:101px;height:1px;background:#2a2d33"></div><div style="position:absolute;left:352px;top:0;width:84px;height:1px;background:#2a2d33"></div><div style="position:absolute;left:442px;top:0;width:83px;height:1px;background:#2a2d33"></div><div class="t" style="left:19.70px;top:15.02px;font-size:16.5px;line-height:16.5px;color:#ccccdc;letter-spacing:0.418px;-webkit-text-stroke:0.2px #ccccdc;">Summary Overview</div><div class="t" style="left:19.70px;top:623.22px;font-size:16.5px;line-height:16.5px;color:#ccccdc;letter-spacing:0.542px;-webkit-text-stroke:0.2px #ccccdc;">Virtual Machine Dispatch</div><div class="t" style="left:6.70px;top:56.89px;font-size:14.5px;line-height:14.5px;color:#ccccdc;letter-spacing:-0.062px;-webkit-text-stroke:0.15px #ccccdc;">CPU Usage</div><div class="t" style="left:34.83px;top:142.58px;font-size:12px;line-height:12px;color:#ccccdc;letter-spacing:0.050px;">200%</div><div class="t" style="left:48.28px;top:197.58px;font-size:12px;line-height:12px;color:#ccccdc;letter-spacing:0.050px;">0%</div><div class="t" style="left:62.82px;top:211.78px;font-size:12px;line-height:12px;color:#ccccdc;letter-spacing:0.650px;">05:00</div><div class="t" style="left:136.82px;top:211.78px;font-size:12px;line-height:12px;color:#ccccdc;letter-spacing:0.650px;">05:30</div><div class="t" style="left:211.82px;top:211.78px;font-size:12px;line-height:12px;color:#ccccdc;letter-spacing:0.650px;">06:00</div><div class="t" style="left:285.82px;top:211.78px;font-size:12px;line-height:12px;color:#ccccdc;letter-spacing:0.650px;">06:30</div><div class="t" style="left:360.02px;top:211.78px;font-size:12px;line-height:12px;color:#ccccdc;letter-spacing:0.650px;">07:00</div><div class="t" style="left:435.02px;top:211.78px;font-size:12px;line-height:12px;color:#ccccdc;letter-spacing:0.650px;">07:30</div><div class="t" style="left:12px;top:150px;font-size:12px;line-height:12px;color:#ccccdc;transform:translate(-50%,-50%) rotate(-90deg);letter-spacing:0.3px;">CPU Usage</div><div class="t" style="left:341.24px;top:228.98px;font-size:12px;line-height:12px;color:#6e9fff;letter-spacing:0.300px;">Min</div><div class="t" style="left:380.76px;top:228.98px;font-size:12px;line-height:12px;color:#6e9fff;letter-spacing:0.300px;">Mean</div><div class="t" style="left:439.03px;top:228.98px;font-size:12px;line-height:12px;color:#6e9fff;letter-spacing:0.300px;">Max</div><div class="t" style="left:480.15px;top:228.98px;font-size:12px;line-height:12px;color:#6e9fff;letter-spacing:0.300px;">StdDev</div><div class="hl" style="left:6px;top:247px;width:524px;background:rgba(204,204,220,0.09)"></div><div class="mk" style="left:14px;top:258px;width:14px;background:#73BF69"></div><div class="t" style="left:36.30px;top:252.98px;font-size:12px;line-height:12px;color:#ccccdc;letter-spacing:0.250px;">Guest</div><div class="t" style="left:329.33px;top:252.98px;font-size:12px;line-height:12px;color:#ccccdc;letter-spacing:0.050px;">300%</div><div class="t" style="left:379.83px;top:252.98px;font-size:12px;line-height:12px;color:#ccccdc;letter-spacing:0.050px;">317%</div><div class="t" style="left:431.13px;top:252.98px;font-size:12px;line-height:12px;color:#ccccdc;letter-spacing:0.050px;">341%</div><div class="t" style="left:486.44px;top:252.98px;font-size:12px;line-height:12px;color:#ccccdc;letter-spacing:0.050px;">8.65%</div><div class="hl" style="left:6px;top:271px;width:524px;background:rgba(204,204,220,0.09)"></div><div class="mk" style="left:14px;top:282px;width:14px;background:#F2495C"></div><div class="t" style="left:36.30px;top:276.98px;font-size:12px;line-height:12px;color:#ccccdc;letter-spacing:0.250px;">CP</div><div class="t" style="left:325.94px;top:276.98px;font-size:12px;line-height:12px;color:#ccccdc;letter-spacing:0.050px;">3.40%</div><div class="t" style="left:376.44px;top:276.98px;font-size:12px;line-height:12px;color:#ccccdc;letter-spacing:0.050px;">4.41%</div><div class="t" style="left:427.74px;top:276.98px;font-size:12px;line-height:12px;color:#ccccdc;letter-spacing:0.050px;">5.30%</div><div class="t" style="left:479.72px;top:276.98px;font-size:12px;line-height:12px;color:#ccccdc;letter-spacing:0.050px;">0.257%</div><div class="hl" style="left:6px;top:295px;width:524px;background:rgba(204,204,220,0.09)"></div><div class="t" style="left:789.70px;top:56.89px;font-size:14.5px;line-height:14.5px;color:#ccccdc;letter-spacing:0.478px;-webkit-text-stroke:0.15px #ccccdc;">Memory Usage</div><div class="t" style="left:787.87px;top:104.38px;font-size:12px;line-height:12px;color:#ccccdc;letter-spacing:0.550px;">16 GiB</div><div class="t" style="left:787.87px;top:139.28px;font-size:12px;line-height:12px;color:#ccccdc;letter-spacing:0.550px;">12 GiB</div><div class="t" style="left:795.09px;top:174.28px;font-size:12px;line-height:12px;color:#ccccdc;letter-spacing:0.550px;">8 GiB</div><div class="t" style="left:795.09px;top:209.98px;font-size:12px;line-height:12px;color:#ccccdc;letter-spacing:0.550px;">4 GiB</div><div class="t" style="left:794.43px;top:245.38px;font-size:12px;line-height:12px;color:#ccccdc;letter-spacing:0.550px;">0 MiB</div><div class="t" style="left:823.82px;top:259.98px;font-size:12px;line-height:12px;color:#ccccdc;letter-spacing:0.650px;">05:00</div><div class="t" style="left:901.92px;top:259.98px;font-size:12px;line-height:12px;color:#ccccdc;letter-spacing:0.650px;">05:30</div><div class="t" style="left:980.92px;top:259.98px;font-size:12px;line-height:12px;color:#ccccdc;letter-spacing:0.650px;">06:00</div><div class="t" style="left:1058.82px;top:259.98px;font-size:12px;line-height:12px;color:#ccccdc;letter-spacing:0.650px;">06:30</div><div class="t" style="left:1136.92px;top:259.98px;font-size:12px;line-height:12px;color:#ccccdc;letter-spacing:0.650px;">07:00</div><div class="t" style="left:1215.92px;top:259.98px;font-size:12px;line-height:12px;color:#ccccdc;letter-spacing:0.650px;">07:30</div><div class="mk" style="left:795.6px;top:284.5px;width:13.4px;background:#73BF69"></div><div class="t" style="left:817.40px;top:280.98px;font-size:12px;line-height:12px;color:#ccccdc;letter-spacing:0.250px;">Resident</div><div class="mk" style="left:878.2px;top:284.5px;width:13.4px;background:#FADE2A"></div><div class="t" style="left:899.50px;top:280.98px;font-size:12px;line-height:12px;color:#ccccdc;letter-spacing:0.250px;">Paged-Out</div><div class="t" style="left:1339.70px;top:56.89px;font-size:14.5px;line-height:14.5px;color:#ccccdc;letter-spacing:-0.096px;-webkit-text-stroke:0.15px #ccccdc;">DASD I/O</div><div class="t" style="left:1369.24px;top:115.18px;font-size:12px;line-height:12px;color:#ccccdc;letter-spacing:0.550px;">50 io/s</div><div class="t" style="left:1369.24px;top:146.28px;font-size:12px;line-height:12px;color:#ccccdc;letter-spacing:0.550px;">40 io/s</div><div class="t" style="left:1369.24px;top:176.58px;font-size:12px;line-height:12px;color:#ccccdc;letter-spacing:0.550px;">30 io/s</div><div class="t" style="left:1369.24px;top:206.88px;font-size:12px;line-height:12px;color:#ccccdc;letter-spacing:0.550px;">20 io/s</div><div class="t" style="left:1369.24px;top:238.08px;font-size:12px;line-height:12px;color:#ccccdc;letter-spacing:0.550px;">10 io/s</div><div class="t" style="left:1376.47px;top:269.18px;font-size:12px;line-height:12px;color:#ccccdc;letter-spacing:0.550px;">0 io/s</div><div class="t" style="left:1404.72px;top:283.48px;font-size:12px;line-height:12px;color:#ccccdc;letter-spacing:0.650px;">05:00</div><div class="t" style="left:1477.72px;top:283.48px;font-size:12px;line-height:12px;color:#ccccdc;letter-spacing:0.650px;">05:30</div><div class="t" style="left:1550.82px;top:283.48px;font-size:12px;line-height:12px;color:#ccccdc;letter-spacing:0.650px;">06:00</div><div class="t" style="left:1624.02px;top:283.48px;font-size:12px;line-height:12px;color:#ccccdc;letter-spacing:0.650px;">06:30</div><div class="t" style="left:1697.62px;top:283.48px;font-size:12px;line-height:12px;color:#ccccdc;letter-spacing:0.650px;">07:00</div><div class="t" style="left:1771.02px;top:283.48px;font-size:12px;line-height:12px;color:#ccccdc;letter-spacing:0.650px;">07:30</div><div class="t" style="left:1347px;top:185.7px;font-size:12px;line-height:12px;color:#ccccdc;transform:translate(-50%,-50%) rotate(-90deg);letter-spacing:0.3px;">DASD I/O</div><div class="t" style="left:555.70px;top:56.89px;font-size:14.5px;line-height:14.5px;color:#ccccdc;letter-spacing:0.320px;-webkit-text-stroke:0.15px #ccccdc;">Virtual CPUs</div><div class="t" style="left:647.10px;top:91.65px;font-size:50px;line-height:50px;color:#73BF69;-webkit-text-stroke:1px #73BF69;">4</div><div class="t" style="left:562.30px;top:177.41px;font-size:14px;line-height:14px;color:#ccccdc;letter-spacing:0.834px;">Account</div><div class="t" style="left:712.00px;top:177.41px;font-size:14px;line-height:14px;color:#ccccdc;letter-spacing:0.629px;">Usage</div><div class="hl" style="left:556px;top:198px;width:210px;background:rgba(204,204,220,0.09)"></div><div style="position:absolute;left:660px;top:199px;width:1px;height:35px;background:rgba(204,204,220,0.12)"></div><div class="t" style="left:562.50px;top:210.31px;font-size:14px;line-height:14px;color:#ccccdc;letter-spacing:0.635px;">CIC00048</div><div class="t" style="left:696.00px;top:210.31px;font-size:14px;line-height:14px;color:#ccccdc;letter-spacing:0.513px;">9.66 hour</div><div class="t" style="left:555.70px;top:284.89px;font-size:14.5px;line-height:14.5px;color:#ccccdc;letter-spacing:0.053px;-webkit-text-stroke:0.15px #ccccdc;">SHARE Setting</div><div class="t" style="left:556.20px;top:315.97px;font-size:9.5px;line-height:9.5px;color:#ccccdc;letter-spacing:0.202px;">Absolute</div><div class="t" style="left:670.50px;top:315.97px;font-size:9.5px;line-height:9.5px;color:#ccccdc;letter-spacing:0.052px;">Relative</div><div class="t" style="left:556.62px;top:330.44px;font-size:39px;line-height:39px;color:#FADE2A;transform:scaleX(1.0800);transform-origin:0 0;-webkit-text-stroke:0.6px #FADE2A;">0</div><div class="t" style="left:672.10px;top:330.44px;font-size:39px;line-height:39px;color:#FADE2A;transform:scaleX(1.1250);transform-origin:0 0;-webkit-text-stroke:0.6px #FADE2A;">400</div><div class="t" style="left:554.70px;top:398.89px;font-size:14.5px;line-height:14.5px;color:#ccccdc;letter-spacing:0.446px;-webkit-text-stroke:0.15px #ccccdc;">Memory Size</div><div class="t" style="left:606.13px;top:434.84px;font-size:48.7px;line-height:48.7px;color:#F2495C;transform:scaleX(0.9550);transform-origin:0 0;-webkit-text-stroke:1px #F2495C;">16</div><div class="t" style="left:667.26px;top:452.62px;font-size:27.4px;line-height:27.4px;color:#F2495C;transform:scaleX(1.0400);transform-origin:0 0;-webkit-text-stroke:0.6px #F2495C;">GiB</div><div class="t" style="left:555.70px;top:512.89px;font-size:14.5px;line-height:14.5px;color:#ccccdc;letter-spacing:0.381px;-webkit-text-stroke:0.15px #ccccdc;">Virtual Disk</div><div class="t" style="left:572.48px;top:550.59px;font-size:46px;line-height:46px;color:#5794F2;transform:scaleX(1.0730);transform-origin:0 0;-webkit-text-stroke:0.8px #5794F2;">No data</div><div class="t" style="left:5.70px;top:322.89px;font-size:14.5px;line-height:14.5px;color:#ccccdc;letter-spacing:0.382px;-webkit-text-stroke:0.15px #ccccdc;">Diagnose Rate CIC00048</div><div class="t" style="left:30.12px;top:373.88px;font-size:12px;line-height:12px;color:#ccccdc;letter-spacing:0.550px;">1.25K ops/s</div><div class="t" style="left:48.46px;top:404.28px;font-size:12px;line-height:12px;color:#ccccdc;letter-spacing:0.550px;">1K ops/s</div><div class="t" style="left:42.56px;top:434.28px;font-size:12px;line-height:12px;color:#ccccdc;letter-spacing:0.550px;">750 ops/s</div><div class="t" style="left:42.56px;top:464.98px;font-size:12px;line-height:12px;color:#ccccdc;letter-spacing:0.550px;">500 ops/s</div><div class="t" style="left:42.56px;top:495.08px;font-size:12px;line-height:12px;color:#ccccdc;letter-spacing:0.550px;">250 ops/s</div><div class="t" style="left:57.01px;top:525.28px;font-size:12px;line-height:12px;color:#ccccdc;letter-spacing:0.550px;">0 ops/s</div><div class="t" style="left:95.92px;top:539.48px;font-size:12px;line-height:12px;color:#ccccdc;letter-spacing:0.650px;">05:00</div><div class="t" style="left:164.82px;top:539.48px;font-size:12px;line-height:12px;color:#ccccdc;letter-spacing:0.650px;">05:30</div><div class="t" style="left:232.82px;top:539.48px;font-size:12px;line-height:12px;color:#ccccdc;letter-spacing:0.650px;">06:00</div><div class="t" style="left:301.82px;top:539.48px;font-size:12px;line-height:12px;color:#ccccdc;letter-spacing:0.650px;">06:30</div><div class="t" style="left:371.12px;top:539.48px;font-size:12px;line-height:12px;color:#ccccdc;letter-spacing:0.650px;">07:00</div><div class="t" style="left:439.72px;top:539.48px;font-size:12px;line-height:12px;color:#ccccdc;letter-spacing:0.650px;">07:30</div><div class="t" style="left:11.4px;top:447px;font-size:12px;line-height:12px;color:#ccccdc;transform:translate(-50%,-50%) rotate(-90deg);letter-spacing:0.3px;">Diagnose Rate</div><div class="t" style="left:344.44px;top:556.98px;font-size:12px;line-height:12px;color:#6e9fff;letter-spacing:0.300px;">Min</div><div class="t" style="left:423.73px;top:556.98px;font-size:12px;line-height:12px;color:#6e9fff;letter-spacing:0.300px;">Max</div><div class="t" style="left:491.26px;top:556.98px;font-size:12px;line-height:12px;color:#6e9fff;letter-spacing:0.300px;">Mean</div><div class="hl" style="left:6px;top:575px;width:524px;background:rgba(204,204,220,0.09)"></div><div class="mk" style="left:14px;top:586px;width:14px;background:#73BF69"></div><div class="t" style="left:36.30px;top:580.98px;font-size:12px;line-height:12px;color:#ccccdc;letter-spacing:0.250px;">DIAG 9C</div><div class="t" style="left:307.26px;top:580.98px;font-size:12px;line-height:12px;color:#ccccdc;letter-spacing:0.550px;">406 ops/s</div><div class="t" style="left:378.12px;top:580.98px;font-size:12px;line-height:12px;color:#ccccdc;letter-spacing:0.550px;">1.20K ops/s</div><div class="t" style="left:465.06px;top:580.98px;font-size:12px;line-height:12px;color:#ccccdc;letter-spacing:0.550px;">583 ops/s</div><div class="hl" style="left:6px;top:599px;width:524px;background:rgba(204,204,220,0.09)"></div><div class="t" style="left:790.70px;top:322.89px;font-size:14.5px;line-height:14.5px;color:#ccccdc;letter-spacing:0.197px;-webkit-text-stroke:0.15px #ccccdc;">VSWITCH Traffic Rate</div><div class="t" style="left:796.11px;top:359.18px;font-size:12px;line-height:12px;color:#ccccdc;letter-spacing:0.550px;">4 MB/s</div><div class="t" style="left:796.11px;top:390.28px;font-size:12px;line-height:12px;color:#ccccdc;letter-spacing:0.550px;">2 MB/s</div><div class="t" style="left:806.65px;top:421.28px;font-size:12px;line-height:12px;color:#ccccdc;letter-spacing:0.550px;">0 B/s</div><div class="t" style="left:791.56px;top:452.98px;font-size:12px;line-height:12px;color:#ccccdc;letter-spacing:0.550px;">-2 MB/s</div><div class="t" style="left:791.56px;top:483.98px;font-size:12px;line-height:12px;color:#ccccdc;letter-spacing:0.550px;">-4 MB/s</div><div class="t" style="left:831.82px;top:515.98px;font-size:12px;line-height:12px;color:#ccccdc;letter-spacing:0.650px;">05:00</div><div class="t" style="left:932.82px;top:515.98px;font-size:12px;line-height:12px;color:#ccccdc;letter-spacing:0.650px;">06:00</div><div class="t" style="left:1034.52px;top:515.98px;font-size:12px;line-height:12px;color:#ccccdc;letter-spacing:0.650px;">07:00</div><div class="t" style="left:1119.36px;top:532.98px;font-size:12px;line-height:12px;color:#6e9fff;letter-spacing:0.300px;">Mean</div><div class="hl" style="left:790px;top:551px;width:368px;background:rgba(204,204,220,0.09)"></div><div class="mk" style="left:798px;top:562px;width:14px;background:#73BF69"></div><div class="t" style="left:820.30px;top:556.98px;font-size:12px;line-height:12px;color:#ccccdc;letter-spacing:0.250px;">Receive</div><div class="t" style="left:1091.18px;top:556.98px;font-size:12px;line-height:12px;color:#ccccdc;letter-spacing:0.550px;">2.30 MB/s</div><div class="hl" style="left:790px;top:575px;width:368px;background:rgba(204,204,220,0.09)"></div><div class="mk" style="left:798px;top:586px;width:14px;background:#FADE2A"></div><div class="t" style="left:820.30px;top:580.98px;font-size:12px;line-height:12px;color:#ccccdc;letter-spacing:0.250px;">Transmit</div><div class="t" style="left:1086.63px;top:580.98px;font-size:12px;line-height:12px;color:#ccccdc;letter-spacing:0.550px;">-2.96 MB/s</div><div class="hl" style="left:790px;top:599px;width:368px;background:rgba(204,204,220,0.09)"></div><div class="t" style="left:1183.70px;top:322.89px;font-size:14.5px;line-height:14.5px;color:#ccccdc;letter-spacing:0.395px;-webkit-text-stroke:0.15px #ccccdc;">Virtual Machine State</div><div class="t" style="left:1182.93px;top:356.58px;font-size:12px;line-height:12px;color:#ccccdc;letter-spacing:0.050px;">100%</div><div class="t" style="left:1189.65px;top:399.68px;font-size:12px;line-height:12px;color:#ccccdc;letter-spacing:0.050px;">80%</div><div class="t" style="left:1189.65px;top:443.18px;font-size:12px;line-height:12px;color:#ccccdc;letter-spacing:0.050px;">60%</div><div class="t" style="left:1189.65px;top:486.28px;font-size:12px;line-height:12px;color:#ccccdc;letter-spacing:0.050px;">40%</div><div class="t" style="left:1189.65px;top:529.88px;font-size:12px;line-height:12px;color:#ccccdc;letter-spacing:0.050px;">20%</div><div class="t" style="left:1196.38px;top:573.58px;font-size:12px;line-height:12px;color:#ccccdc;letter-spacing:0.050px;">0%</div><div class="t" style="left:1211.02px;top:587.98px;font-size:12px;line-height:12px;color:#ccccdc;letter-spacing:0.650px;">05:00</div><div class="t" style="left:1278.02px;top:587.98px;font-size:12px;line-height:12px;color:#ccccdc;letter-spacing:0.650px;">05:30</div><div class="t" style="left:1345.32px;top:587.98px;font-size:12px;line-height:12px;color:#ccccdc;letter-spacing:0.650px;">06:00</div><div class="t" style="left:1413.82px;top:587.98px;font-size:12px;line-height:12px;color:#ccccdc;letter-spacing:0.650px;">06:30</div><div class="t" style="left:1480.82px;top:587.98px;font-size:12px;line-height:12px;color:#ccccdc;letter-spacing:0.650px;">07:00</div><div class="t" style="left:1548.72px;top:587.98px;font-size:12px;line-height:12px;color:#ccccdc;letter-spacing:0.650px;">07:30</div><div class="t" style="left:1766.73px;top:358.98px;font-size:12px;line-height:12px;color:#6e9fff;letter-spacing:0.300px;">Max</div><div class="t" style="left:1826.26px;top:358.98px;font-size:12px;line-height:12px;color:#6e9fff;letter-spacing:0.300px;">Mean</div><div class="hl" style="left:1638px;top:377px;width:227px;background:rgba(204,204,220,0.09)"></div><div class="mk" style="left:1646px;top:388px;width:14px;background:#73BF69"></div><div class="t" style="left:1668.30px;top:382.98px;font-size:12px;line-height:12px;color:#ccccdc;letter-spacing:0.250px;">Running</div><div class="t" style="left:1755.44px;top:382.98px;font-size:12px;line-height:12px;color:#ccccdc;letter-spacing:0.050px;">92.5%</div><div class="t" style="left:1821.94px;top:382.98px;font-size:12px;line-height:12px;color:#ccccdc;letter-spacing:0.050px;">81.3%</div><div class="hl" style="left:1638px;top:401px;width:227px;background:rgba(204,204,220,0.09)"></div><div class="mk" style="left:1646px;top:412px;width:14px;background:#F2495C"></div><div class="t" style="left:1668.30px;top:406.98px;font-size:12px;line-height:12px;color:#ccccdc;letter-spacing:0.250px;">CPU Wait</div><div class="t" style="left:1755.44px;top:406.98px;font-size:12px;line-height:12px;color:#ccccdc;letter-spacing:0.050px;">19.2%</div><div class="t" style="left:1821.94px;top:406.98px;font-size:12px;line-height:12px;color:#ccccdc;letter-spacing:0.050px;">5.76%</div><div class="hl" style="left:1638px;top:425px;width:227px;background:rgba(204,204,220,0.09)"></div><div class="mk" style="left:1646px;top:436px;width:14px;background:#8AB8FF"></div><div class="t" style="left:1667.30px;top:430.98px;font-size:12px;line-height:12px;color:#ccccdc;letter-spacing:0.250px;">I/O Wait</div><div class="t" style="left:1789.75px;top:430.98px;font-size:12px;line-height:12px;color:#ccccdc;letter-spacing:0.250px;"></div><div class="t" style="left:1856.25px;top:430.98px;font-size:12px;line-height:12px;color:#ccccdc;letter-spacing:0.250px;"></div><div class="hl" style="left:1638px;top:449px;width:227px;background:rgba(204,204,220,0.09)"></div><div class="mk" style="left:1646px;top:460px;width:14px;background:#F5792A"></div><div class="t" style="left:1668.30px;top:454.98px;font-size:12px;line-height:12px;color:#ccccdc;letter-spacing:0.250px;">Asynch I/O</div><div class="t" style="left:1748.72px;top:454.98px;font-size:12px;line-height:12px;color:#ccccdc;letter-spacing:0.050px;">0.833%</div><div class="t" style="left:1808.50px;top:454.98px;font-size:12px;line-height:12px;color:#ccccdc;letter-spacing:0.050px;">0.0370%</div><div class="hl" style="left:1638px;top:472px;width:227px;background:rgba(204,204,220,0.09)"></div><div class="mk" style="left:1646px;top:483px;width:14px;background:#F2495C"></div><div class="t" style="left:1668.30px;top:477.98px;font-size:12px;line-height:12px;color:#ccccdc;letter-spacing:0.250px;">Sim Wait</div><div class="t" style="left:1755.44px;top:477.98px;font-size:12px;line-height:12px;color:#ccccdc;letter-spacing:0.050px;">4.17%</div><div class="t" style="left:1815.22px;top:477.98px;font-size:12px;line-height:12px;color:#ccccdc;letter-spacing:0.050px;">0.769%</div><div class="hl" style="left:1638px;top:496px;width:227px;background:rgba(204,204,220,0.09)"></div><div class="mk" style="left:1646px;top:507px;width:14px;background:#FADE2A"></div><div class="t" style="left:1667.30px;top:501.98px;font-size:12px;line-height:12px;color:#ccccdc;letter-spacing:0.250px;">Idle</div><div class="t" style="left:1755.44px;top:501.98px;font-size:12px;line-height:12px;color:#ccccdc;letter-spacing:0.050px;">26.7%</div><div class="t" style="left:1821.94px;top:501.98px;font-size:12px;line-height:12px;color:#ccccdc;letter-spacing:0.050px;">12.1%</div><div class="hl" style="left:1638px;top:520px;width:227px;background:rgba(204,204,220,0.09)"></div><div class="mk" style="left:1646px;top:531px;width:14px;background:#FFF899"></div><div class="t" style="left:1668.30px;top:525.98px;font-size:12px;line-height:12px;color:#ccccdc;letter-spacing:0.250px;">Dormant</div><div class="t" style="left:1772.28px;top:525.98px;font-size:12px;line-height:12px;color:#ccccdc;letter-spacing:0.050px;">0%</div><div class="t" style="left:1838.78px;top:525.98px;font-size:12px;line-height:12px;color:#ccccdc;letter-spacing:0.050px;">0%</div><div class="hl" style="left:1638px;top:544px;width:227px;background:rgba(204,204,220,0.09)"></div><div class="mk" style="left:1646px;top:555px;width:14px;background:#7D5FA5"></div><div class="t" style="left:1668.30px;top:549.98px;font-size:12px;line-height:12px;color:#ccccdc;letter-spacing:0.250px;">CF Wait</div><div class="t" style="left:1789.75px;top:549.98px;font-size:12px;line-height:12px;color:#ccccdc;letter-spacing:0.250px;"></div><div class="t" style="left:1856.25px;top:549.98px;font-size:12px;line-height:12px;color:#ccccdc;letter-spacing:0.250px;"></div><div class="hl" style="left:1638px;top:568px;width:227px;background:rgba(204,204,220,0.09)"></div><div class="t" style="left:6.70px;top:664.89px;font-size:14.5px;line-height:14.5px;color:#ccccdc;letter-spacing:0.305px;-webkit-text-stroke:0.15px #ccccdc;">CPU Usage CIC00048</div><div class="t" style="left:34.83px;top:750.78px;font-size:12px;line-height:12px;color:#ccccdc;letter-spacing:0.050px;">200%</div><div class="t" style="left:48.28px;top:805.28px;font-size:12px;line-height:12px;color:#ccccdc;letter-spacing:0.050px;">0%</div><div class="t" style="left:446.60px;top:731.88px;font-size:12px;line-height:12px;color:#ccccdc;letter-spacing:0.550px;">400 req/s</div><div class="t" style="left:446.60px;top:769.28px;font-size:12px;line-height:12px;color:#ccccdc;letter-spacing:0.550px;">200 req/s</div><div class="t" style="left:446.60px;top:804.88px;font-size:12px;line-height:12px;color:#ccccdc;letter-spacing:0.550px;">0 req/s</div><div class="t" style="left:61.62px;top:819.48px;font-size:12px;line-height:12px;color:#ccccdc;letter-spacing:0.650px;">05:00</div><div class="t" style="left:122.72px;top:819.48px;font-size:12px;line-height:12px;color:#ccccdc;letter-spacing:0.650px;">05:30</div><div class="t" style="left:183.02px;top:819.48px;font-size:12px;line-height:12px;color:#ccccdc;letter-spacing:0.650px;">06:00</div><div class="t" style="left:242.72px;top:819.48px;font-size:12px;line-height:12px;color:#ccccdc;letter-spacing:0.650px;">06:30</div><div class="t" style="left:303.12px;top:819.48px;font-size:12px;line-height:12px;color:#ccccdc;letter-spacing:0.650px;">07:00</div><div class="t" style="left:363.02px;top:819.48px;font-size:12px;line-height:12px;color:#ccccdc;letter-spacing:0.650px;">07:30</div><div class="t" style="left:12px;top:757.5px;font-size:12px;line-height:12px;color:#ccccdc;transform:translate(-50%,-50%) rotate(-90deg);letter-spacing:0.3px;">CPU Usage</div><div class="t" style="left:524px;top:758px;font-size:12px;line-height:12px;color:#ccccdc;transform:translate(-50%,-50%) rotate(90deg);letter-spacing:0.3px;">Wake-up Requests</div><div class="t" style="left:288.74px;top:836.98px;font-size:12px;line-height:12px;color:#6e9fff;letter-spacing:0.300px;">Min</div><div class="t" style="left:349.56px;top:836.98px;font-size:12px;line-height:12px;color:#6e9fff;letter-spacing:0.300px;">Mean</div><div class="t" style="left:428.63px;top:836.98px;font-size:12px;line-height:12px;color:#6e9fff;letter-spacing:0.300px;">Max</div><div class="t" style="left:480.25px;top:836.98px;font-size:12px;line-height:12px;color:#6e9fff;letter-spacing:0.300px;">StdDev</div><div class="hl" style="left:6px;top:855px;width:524px;background:rgba(204,204,220,0.09)"></div><div class="mk" style="left:14px;top:866px;width:14px;background:#73BF69"></div><div class="t" style="left:36.30px;top:860.98px;font-size:12px;line-height:12px;color:#ccccdc;letter-spacing:0.250px;">CPU</div><div class="t" style="left:276.83px;top:860.98px;font-size:12px;line-height:12px;color:#ccccdc;letter-spacing:0.050px;">305%</div><div class="t" style="left:348.63px;top:860.98px;font-size:12px;line-height:12px;color:#ccccdc;letter-spacing:0.050px;">322%</div><div class="t" style="left:420.73px;top:860.98px;font-size:12px;line-height:12px;color:#ccccdc;letter-spacing:0.050px;">346%</div><div class="t" style="left:486.54px;top:860.98px;font-size:12px;line-height:12px;color:#ccccdc;letter-spacing:0.050px;">8.62%</div><div class="hl" style="left:6px;top:879px;width:524px;background:rgba(204,204,220,0.09)"></div><div class="mk" style="left:14px;top:890px;width:14px;background:#FADE2A"></div><div class="t" style="left:36.30px;top:884.98px;font-size:12px;line-height:12px;color:#ccccdc;letter-spacing:0.550px;">Wake-up <span style="color:rgba(204,204,220,0.65)">(right y-axis)</span></div><div class="t" style="left:249.68px;top:884.98px;font-size:12px;line-height:12px;color:#ccccdc;letter-spacing:0.550px;">42.0 req/s</div><div class="t" style="left:325.37px;top:884.98px;font-size:12px;line-height:12px;color:#ccccdc;letter-spacing:0.550px;">245 req/s</div><div class="t" style="left:397.47px;top:884.98px;font-size:12px;line-height:12px;color:#ccccdc;letter-spacing:0.550px;">532 req/s</div><div class="t" style="left:466.67px;top:884.98px;font-size:12px;line-height:12px;color:#ccccdc;letter-spacing:0.550px;">107 req/s</div><div class="hl" style="left:6px;top:903px;width:524px;background:rgba(204,204,220,0.09)"></div><div class="t" style="left:555.70px;top:664.89px;font-size:14.5px;line-height:14.5px;color:#ccccdc;letter-spacing:0.449px;-webkit-text-stroke:0.15px #ccccdc;">Time per Dispatch CIC00048</div><div class="t" style="left:595.55px;top:716.38px;font-size:12px;line-height:12px;color:#ccccdc;letter-spacing:0.550px;">1 ms</div><div class="t" style="left:584.18px;top:760.48px;font-size:12px;line-height:12px;color:#ccccdc;letter-spacing:0.550px;">500 µs</div><div class="t" style="left:598.63px;top:804.88px;font-size:12px;line-height:12px;color:#ccccdc;letter-spacing:0.550px;">0 µs</div><div class="t" style="left:619.92px;top:819.48px;font-size:12px;line-height:12px;color:#ccccdc;letter-spacing:0.650px;">05:00</div><div class="t" style="left:706.62px;top:819.48px;font-size:12px;line-height:12px;color:#ccccdc;letter-spacing:0.650px;">05:30</div><div class="t" style="left:792.72px;top:819.48px;font-size:12px;line-height:12px;color:#ccccdc;letter-spacing:0.650px;">06:00</div><div class="t" style="left:878.82px;top:819.48px;font-size:12px;line-height:12px;color:#ccccdc;letter-spacing:0.650px;">06:30</div><div class="t" style="left:964.62px;top:819.48px;font-size:12px;line-height:12px;color:#ccccdc;letter-spacing:0.650px;">07:00</div><div class="t" style="left:1050.82px;top:819.48px;font-size:12px;line-height:12px;color:#ccccdc;letter-spacing:0.650px;">07:30</div><div style="position:absolute;left:550px;top:695px;width:24px;height:135px;overflow:hidden"><div class="t" style="left:6px;top:130px;font-size:12px;line-height:12px;color:#ccccdc;transform-origin:0 0;transform:rotate(-90deg);letter-spacing:0.6px">Average Dispatch Time</div></div><div class="t" style="left:956.04px;top:836.98px;font-size:12px;line-height:12px;color:#6e9fff;letter-spacing:0.300px;">Min</div><div class="t" style="left:1003.76px;top:836.98px;font-size:12px;line-height:12px;color:#6e9fff;letter-spacing:0.300px;">Mean</div><div class="t" style="left:1052.15px;top:836.98px;font-size:12px;line-height:12px;color:#6e9fff;letter-spacing:0.300px;">StdDev</div><div class="t" style="left:1126.03px;top:836.98px;font-size:12px;line-height:12px;color:#6e9fff;letter-spacing:0.300px;">Max</div><div class="hl" style="left:555px;top:855px;width:603px;background:rgba(204,204,220,0.09)"></div><div class="mk" style="left:563px;top:866px;width:14px;background:#73BF69"></div><div class="t" style="left:585.30px;top:860.98px;font-size:12px;line-height:12px;color:#ccccdc;letter-spacing:0.250px;">CPU</div><div class="t" style="left:936.28px;top:860.98px;font-size:12px;line-height:12px;color:#ccccdc;letter-spacing:0.550px;">307 µs</div><div class="t" style="left:994.98px;top:860.98px;font-size:12px;line-height:12px;color:#ccccdc;letter-spacing:0.550px;">406 µs</div><div class="t" style="left:1050.10px;top:860.98px;font-size:12px;line-height:12px;color:#ccccdc;letter-spacing:0.550px;">77.7 µs</div><div class="t" style="left:1110.28px;top:860.98px;font-size:12px;line-height:12px;color:#ccccdc;letter-spacing:0.550px;">863 µs</div><div class="hl" style="left:555px;top:879px;width:603px;background:rgba(204,204,220,0.09)"></div><div class="mk" style="left:563px;top:890px;width:14px;background:#FADE2A"></div><div class="t" style="left:585.30px;top:884.98px;font-size:12px;line-height:12px;color:#ccccdc;letter-spacing:0.250px;">Latency</div><div class="t" style="left:932.40px;top:884.98px;font-size:12px;line-height:12px;color:#ccccdc;letter-spacing:0.550px;">18.9 µs</div><div class="t" style="left:991.10px;top:884.98px;font-size:12px;line-height:12px;color:#ccccdc;letter-spacing:0.550px;">29.7 µs</div><div class="t" style="left:1050.10px;top:884.98px;font-size:12px;line-height:12px;color:#ccccdc;letter-spacing:0.550px;">17.2 µs</div><div class="t" style="left:1110.28px;top:884.98px;font-size:12px;line-height:12px;color:#ccccdc;letter-spacing:0.550px;">157 µs</div><div class="hl" style="left:555px;top:903px;width:603px;background:rgba(204,204,220,0.09)"></div><div class="t" style="left:1183.70px;top:664.89px;font-size:14.5px;line-height:14.5px;color:#ccccdc;letter-spacing:-0.062px;-webkit-text-stroke:0.15px #ccccdc;">CPU Usage</div><div class="t" style="left:1212.73px;top:748.48px;font-size:12px;line-height:12px;color:#ccccdc;letter-spacing:0.050px;">200%</div><div class="t" style="left:1226.18px;top:804.28px;font-size:12px;line-height:12px;color:#ccccdc;letter-spacing:0.050px;">0%</div><div class="t" style="left:1241.72px;top:818.98px;font-size:12px;line-height:12px;color:#ccccdc;letter-spacing:0.650px;">05:00</div><div class="t" style="left:1341.82px;top:818.98px;font-size:12px;line-height:12px;color:#ccccdc;letter-spacing:0.650px;">05:30</div><div class="t" style="left:1442.62px;top:818.98px;font-size:12px;line-height:12px;color:#ccccdc;letter-spacing:0.650px;">06:00</div><div class="t" style="left:1542.92px;top:818.98px;font-size:12px;line-height:12px;color:#ccccdc;letter-spacing:0.650px;">06:30</div><div class="t" style="left:1643.92px;top:818.98px;font-size:12px;line-height:12px;color:#ccccdc;letter-spacing:0.650px;">07:00</div><div class="t" style="left:1743.82px;top:818.98px;font-size:12px;line-height:12px;color:#ccccdc;letter-spacing:0.650px;">07:30</div><div class="t" style="left:1189.9px;top:756.6px;font-size:12px;line-height:12px;color:#ccccdc;transform:translate(-50%,-50%) rotate(-90deg);letter-spacing:0.3px;">CPU Usage</div><div class="t" style="left:1675.04px;top:835.98px;font-size:12px;line-height:12px;color:#6e9fff;letter-spacing:0.300px;">Min</div><div class="t" style="left:1715.46px;top:835.98px;font-size:12px;line-height:12px;color:#6e9fff;letter-spacing:0.300px;">Mean</div><div class="t" style="left:1774.13px;top:835.98px;font-size:12px;line-height:12px;color:#6e9fff;letter-spacing:0.300px;">Max</div><div class="t" style="left:1815.55px;top:835.98px;font-size:12px;line-height:12px;color:#6e9fff;letter-spacing:0.300px;">StdDev</div><div class="hl" style="left:1183px;top:854px;width:682px;background:rgba(204,204,220,0.09)"></div><div class="mk" style="left:1191px;top:865px;width:14px;background:#73BF69"></div><div class="t" style="left:1213.30px;top:859.98px;font-size:12px;line-height:12px;color:#ccccdc;letter-spacing:0.250px;">00</div><div class="t" style="left:1659.74px;top:859.98px;font-size:12px;line-height:12px;color:#ccccdc;letter-spacing:0.050px;">71.8%</div><div class="t" style="left:1711.14px;top:859.98px;font-size:12px;line-height:12px;color:#ccccdc;letter-spacing:0.050px;">79.4%</div><div class="t" style="left:1762.84px;top:859.98px;font-size:12px;line-height:12px;color:#ccccdc;letter-spacing:0.050px;">85.5%</div><div class="t" style="left:1821.84px;top:859.98px;font-size:12px;line-height:12px;color:#ccccdc;letter-spacing:0.050px;">2.65%</div><div class="hl" style="left:1183px;top:878px;width:682px;background:rgba(204,204,220,0.09)"></div><div class="mk" style="left:1191px;top:889px;width:14px;background:#FADE2A"></div><div class="t" style="left:1213.30px;top:883.98px;font-size:12px;line-height:12px;color:#ccccdc;letter-spacing:0.250px;">01</div><div class="t" style="left:1659.74px;top:883.98px;font-size:12px;line-height:12px;color:#ccccdc;letter-spacing:0.050px;">72.0%</div><div class="t" style="left:1711.14px;top:883.98px;font-size:12px;line-height:12px;color:#ccccdc;letter-spacing:0.050px;">79.6%</div><div class="t" style="left:1762.84px;top:883.98px;font-size:12px;line-height:12px;color:#ccccdc;letter-spacing:0.050px;">85.8%</div><div class="t" style="left:1821.84px;top:883.98px;font-size:12px;line-height:12px;color:#ccccdc;letter-spacing:0.050px;">2.81%</div><div class="hl" style="left:1183px;top:902px;width:682px;background:rgba(204,204,220,0.09)"></div></div></body></html>
